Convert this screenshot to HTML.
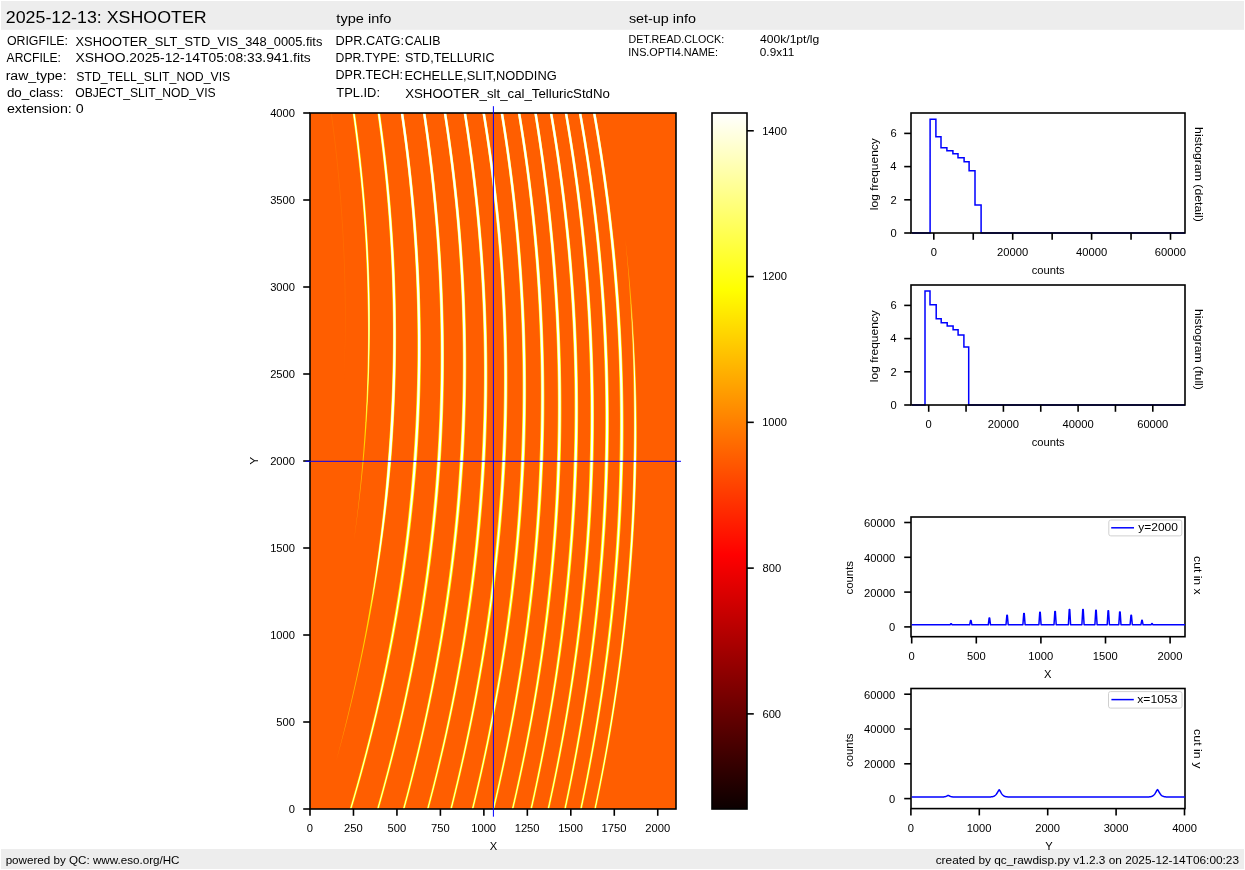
<!DOCTYPE html>
<html><head><meta charset="utf-8"><style>
html,body{margin:0;padding:0;background:#fff;width:1245px;height:870px;overflow:hidden}
svg{display:block}
text{font-family:"Liberation Sans",sans-serif;fill:#000}
svg{will-change:transform}
</style></head><body>
<svg width="1245" height="870" viewBox="0 0 1245 870">
<rect x="1" y="1" width="1243" height="28.8" fill="#ededed"/>
<rect x="1" y="849" width="1243" height="20" fill="#ededed"/>
<text x="5.80" y="23.00" font-size="17.3" textLength="200.82" lengthAdjust="spacingAndGlyphs">2025-12-13: XSHOOTER</text>
<text x="336.38" y="22.80" font-size="12.5" textLength="55.03" lengthAdjust="spacingAndGlyphs">type info</text>
<text x="628.90" y="22.70" font-size="12.5" textLength="67.10" lengthAdjust="spacingAndGlyphs">set-up info</text>
<text x="6.91" y="44.75" font-size="12.3" textLength="61.11" lengthAdjust="spacingAndGlyphs">ORIGFILE:</text>
<text x="6.58" y="61.70" font-size="12.3" textLength="54.33" lengthAdjust="spacingAndGlyphs">ARCFILE:</text>
<text x="5.67" y="79.90" font-size="12.3" textLength="60.92" lengthAdjust="spacingAndGlyphs">raw_type:</text>
<text x="6.94" y="97.30" font-size="12.3" textLength="56.48" lengthAdjust="spacingAndGlyphs">do_class:</text>
<text x="6.90" y="113.30" font-size="12.3" textLength="76.76" lengthAdjust="spacingAndGlyphs">extension: 0</text>
<text x="75.51" y="45.70" font-size="12.3" textLength="246.85" lengthAdjust="spacingAndGlyphs">XSHOOTER_SLT_STD_VIS_348_0005.fits</text>
<text x="75.49" y="61.70" font-size="12.3" textLength="235.31" lengthAdjust="spacingAndGlyphs">XSHOO.2025-12-14T05:08:33.941.fits</text>
<text x="76.24" y="80.50" font-size="12.3" textLength="154.02" lengthAdjust="spacingAndGlyphs">STD_TELL_SLIT_NOD_VIS</text>
<text x="75.22" y="96.90" font-size="12.3" textLength="140.43" lengthAdjust="spacingAndGlyphs">OBJECT_SLIT_NOD_VIS</text>
<text x="335.57" y="44.80" font-size="12.3" textLength="68.48" lengthAdjust="spacingAndGlyphs">DPR.CATG:</text>
<text x="404.87" y="44.80" font-size="12.3" textLength="35.68" lengthAdjust="spacingAndGlyphs">CALIB</text>
<text x="335.60" y="61.60" font-size="12.3" textLength="64.42" lengthAdjust="spacingAndGlyphs">DPR.TYPE:</text>
<text x="404.93" y="61.90" font-size="12.3" textLength="89.65" lengthAdjust="spacingAndGlyphs">STD,TELLURIC</text>
<text x="335.57" y="79.30" font-size="12.3" textLength="67.47" lengthAdjust="spacingAndGlyphs">DPR.TECH:</text>
<text x="404.45" y="79.60" font-size="12.3" textLength="152.30" lengthAdjust="spacingAndGlyphs">ECHELLE,SLIT,NODDING</text>
<text x="336.31" y="96.60" font-size="12.3" textLength="43.67" lengthAdjust="spacingAndGlyphs">TPL.ID:</text>
<text x="405.20" y="97.50" font-size="12.3" textLength="204.75" lengthAdjust="spacingAndGlyphs">XSHOOTER_slt_cal_TelluricStdNo</text>
<text x="628.43" y="42.90" font-size="10.0" textLength="95.73" lengthAdjust="spacingAndGlyphs">DET.READ.CLOCK:</text>
<text x="760.02" y="42.90" font-size="10.0" textLength="59.26" lengthAdjust="spacingAndGlyphs">400k/1pt/lg</text>
<text x="628.30" y="56.10" font-size="10.0" textLength="89.69" lengthAdjust="spacingAndGlyphs">INS.OPTI4.NAME:</text>
<text x="759.85" y="56.10" font-size="10.0" textLength="34.41" lengthAdjust="spacingAndGlyphs">0.9x11</text>
<text x="5.65" y="863.80" font-size="10.8" textLength="173.89" lengthAdjust="spacingAndGlyphs">powered by QC: www.eso.org/HC</text>
<text x="935.70" y="864.00" font-size="10.8" textLength="303.32" lengthAdjust="spacingAndGlyphs">created by qc_rawdisp.py v1.2.3 on 2025-12-14T06:00:23</text>
<rect x="310.0" y="113.0" width="366.0" height="696.0" fill="#ff5e00"/>
<defs>
<clipPath id="imgclip"><rect x="310" y="113" width="366" height="696"/></clipPath>
<linearGradient id="hot" x1="0" y1="1" x2="0" y2="0"><stop offset="0" stop-color="rgb(11,0,0)"/><stop offset="0.365" stop-color="rgb(255,0,0)"/><stop offset="0.746" stop-color="rgb(255,255,0)"/><stop offset="1" stop-color="rgb(255,255,255)"/></linearGradient>
</defs>
<g clip-path="url(#imgclip)">
<path d="M330.74,113.00 L331.55,119.00 L332.35,125.00 L333.11,131.00 L333.86,137.00 L334.58,143.00 L335.27,149.00 L335.95,155.00 L336.59,161.00 L337.22,167.00 L337.82,173.00 L338.39,179.00 L338.94,185.00 L339.47,191.00 L339.97,197.00 L340.45,203.00 L340.90,209.00 L341.33,215.00 L341.73,221.00 L342.12,227.00 L342.47,233.00 L342.80,239.00 L343.11,245.00 L343.40,251.00 L343.66,257.00 L343.89,263.00 L344.10,269.00 L344.29,275.00 L344.45,281.00 L344.59,287.00 L344.70,293.00 L344.79,299.00 L344.88,305.00 L344.95,311.00 L344.99,317.00 L345.01,323.00 L345.01,329.00 L344.98,335.00 L344.93,341.00 L344.85,347.00 L344.75,353.00 L344.62,359.00 L344.47,365.00 L344.30,371.00 L344.10,377.00 L343.86,383.00 L343.59,389.00 L343.29,395.00 L342.96,401.00 L342.61,407.00 L342.24,413.00 L341.84,419.00 L341.42,425.00 L340.97,431.00 L340.50,437.00 L340.01,443.00 L339.49,449.00 L338.94,455.00 L338.38,461.00 L337.78,467.00 L337.17,473.00 L336.53,479.00 L335.86,485.00 L335.17,491.00 L334.46,497.00 L333.72,503.00 L332.96,509.00 L332.18,515.00 L331.37,521.00 L330.53,527.00 L329.67,533.00 L328.79,539.00 L327.89,545.00 L326.95,551.00 L326.00,557.00 L325.02,563.00 L324.02,569.00 L322.99,575.00 L321.94,581.00 L320.86,587.00 L319.76,593.00 L318.63,599.00 L317.49,605.00 L316.31,611.00 L315.11,617.00 L313.89,623.00 L312.65,629.00 L311.38,635.00 L310.08,641.00 L308.76,647.00 L307.42,653.00 L306.05,659.00 L304.66,665.00 L303.25,671.00 L301.81,677.00 L300.34,683.00 L298.86,689.00 L297.34,695.00 L295.81,701.00 L294.24,707.00 L292.66,713.00 L291.05,719.00 L289.42,725.00 L287.76,731.00 L286.08,737.00 L284.37,743.00 L282.64,749.00 L280.89,755.00 L279.11,761.00 L277.30,767.00 L275.48,773.00 L273.62,779.00 L271.75,785.00 L269.85,791.00 L267.92,797.00 L265.97,803.00 L264.00,809.00 L264.00,809.00 L265.97,803.00 L267.92,797.00 L269.85,791.00 L271.75,785.00 L273.62,779.00 L275.48,773.00 L277.30,767.00 L279.11,761.00 L280.89,755.00 L282.64,749.00 L284.37,743.00 L286.08,737.00 L287.76,731.00 L289.42,725.00 L291.05,719.00 L292.66,713.00 L294.24,707.00 L295.81,701.00 L297.34,695.00 L298.86,689.00 L300.34,683.00 L301.81,677.00 L303.25,671.00 L304.66,665.00 L306.05,659.00 L307.42,653.00 L308.76,647.00 L310.08,641.00 L311.38,635.00 L312.65,629.00 L313.89,623.00 L315.11,617.00 L316.31,611.00 L317.49,605.00 L318.63,599.00 L319.76,593.00 L320.86,587.00 L321.94,581.00 L322.99,575.00 L324.02,569.00 L325.02,563.00 L326.00,557.00 L326.95,551.00 L327.89,545.00 L328.79,539.00 L329.67,533.00 L330.53,527.00 L331.37,521.00 L332.18,515.00 L332.96,509.00 L333.72,503.00 L334.46,497.00 L335.17,491.00 L335.86,485.00 L336.53,479.00 L337.17,473.00 L337.78,467.00 L338.38,461.00 L338.94,455.00 L339.49,449.00 L340.01,443.00 L340.50,437.00 L340.97,431.00 L341.42,425.00 L341.84,419.00 L342.24,413.00 L342.61,407.00 L342.96,401.00 L343.29,395.00 L343.59,389.00 L343.86,383.00 L344.13,377.00 L344.39,371.00 L344.62,365.00 L344.83,359.00 L345.02,353.00 L345.18,347.00 L345.32,341.00 L345.43,335.00 L345.52,329.00 L345.58,323.00 L345.62,317.00 L345.64,311.00 L345.63,305.00 L345.59,299.00 L345.51,293.00 L345.40,287.00 L345.27,281.00 L345.12,275.00 L344.94,269.00 L344.73,263.00 L344.50,257.00 L344.25,251.00 L343.97,245.00 L343.67,239.00 L343.34,233.00 L342.99,227.00 L342.62,221.00 L342.22,215.00 L341.80,209.00 L341.35,203.00 L340.88,197.00 L340.39,191.00 L339.87,185.00 L339.32,179.00 L338.76,173.00 L338.16,167.00 L337.55,161.00 L336.91,155.00 L336.24,149.00 L335.55,143.00 L334.84,137.00 L334.10,131.00 L333.34,125.00 L332.56,119.00 L331.75,113.00Z" fill="#ff9900" fill-opacity="0.22"/>
<linearGradient id="fade0" gradientUnits="userSpaceOnUse" x1="0" y1="380" x2="0" y2="520"><stop offset="0" stop-color="#ffff00"/><stop offset="1" stop-color="#ff9a00"/></linearGradient>
<path d="M352.59,113.00 L353.44,119.00 L354.25,125.00 L355.04,131.00 L355.81,137.00 L356.56,143.00 L357.28,149.00 L357.98,155.00 L358.65,161.00 L359.30,167.00 L359.93,173.00 L360.53,179.00 L361.11,185.00 L361.67,191.00 L362.20,197.00 L362.71,203.00 L363.19,209.00 L363.65,215.00 L364.09,221.00 L364.50,227.00 L364.89,233.00 L365.25,239.00 L365.59,245.00 L365.91,251.00 L366.20,257.00 L366.47,263.00 L366.72,269.00 L366.94,275.00 L367.14,281.00 L367.31,287.00 L367.46,293.00 L367.59,299.00 L367.71,305.00 L367.81,311.00 L367.89,317.00 L367.94,323.00 L367.97,329.00 L367.98,335.00 L367.96,341.00 L367.92,347.00 L367.85,353.00 L367.76,359.00 L367.65,365.00 L367.51,371.00 L367.35,377.00 L367.16,383.00 L366.95,389.00 L366.72,395.00 L366.46,401.00 L366.18,407.00 L365.87,413.00 L365.54,419.00 L365.18,425.00 L364.80,431.00 L364.40,437.00 L363.97,443.00 L363.52,449.00 L363.05,455.00 L362.55,461.00 L362.05,467.00 L361.52,473.00 L360.97,479.00 L360.39,485.00 L359.79,491.00 L359.17,497.00 L358.52,503.00 L357.85,509.00 L357.16,515.00 L356.44,521.00 L355.70,527.00 L354.94,533.00 L354.15,539.00 L353.31,545.00 L352.43,551.00 L351.53,557.00 L350.61,563.00 L349.67,569.00 L348.70,575.00 L347.70,581.00 L346.69,587.00 L345.64,593.00 L344.58,599.00 L343.49,605.00 L342.38,611.00 L341.24,617.00 L340.08,623.00 L338.90,629.00 L337.69,635.00 L336.46,641.00 L335.21,647.00 L333.93,653.00 L332.63,659.00 L331.30,665.00 L329.95,671.00 L328.58,677.00 L327.18,683.00 L325.76,689.00 L324.32,695.00 L322.85,701.00 L321.36,707.00 L319.84,713.00 L318.30,719.00 L316.74,725.00 L315.15,731.00 L313.54,737.00 L311.90,743.00 L310.25,749.00 L308.56,755.00 L306.86,761.00 L305.13,767.00 L303.37,773.00 L301.60,779.00 L299.79,785.00 L297.97,791.00 L296.12,797.00 L294.25,803.00 L292.35,809.00 L292.35,809.00 L294.25,803.00 L296.12,797.00 L297.97,791.00 L299.79,785.00 L301.60,779.00 L303.37,773.00 L305.13,767.00 L306.86,761.00 L308.56,755.00 L310.25,749.00 L311.90,743.00 L313.54,737.00 L315.15,731.00 L316.74,725.00 L318.30,719.00 L319.84,713.00 L321.36,707.00 L322.85,701.00 L324.32,695.00 L325.76,689.00 L327.18,683.00 L328.58,677.00 L329.95,671.00 L331.30,665.00 L332.63,659.00 L333.93,653.00 L335.21,647.00 L336.46,641.00 L337.69,635.00 L338.90,629.00 L340.08,623.00 L341.24,617.00 L342.38,611.00 L343.49,605.00 L344.58,599.00 L345.64,593.00 L346.69,587.00 L347.70,581.00 L348.70,575.00 L349.67,569.00 L350.61,563.00 L351.53,557.00 L352.43,551.00 L353.31,545.00 L354.16,539.00 L355.03,533.00 L355.87,527.00 L356.69,521.00 L357.48,515.00 L358.25,509.00 L359.00,503.00 L359.72,497.00 L360.42,491.00 L361.09,485.00 L361.74,479.00 L362.37,473.00 L362.97,467.00 L363.55,461.00 L364.09,455.00 L364.60,449.00 L365.09,443.00 L365.56,437.00 L366.00,431.00 L366.42,425.00 L366.82,419.00 L367.19,413.00 L367.53,407.00 L367.86,401.00 L368.16,395.00 L368.44,389.00 L368.70,383.00 L368.93,377.00 L369.14,371.00 L369.33,365.00 L369.49,359.00 L369.63,353.00 L369.74,347.00 L369.83,341.00 L369.90,335.00 L369.94,329.00 L369.96,323.00 L369.95,317.00 L369.93,311.00 L369.87,305.00 L369.79,299.00 L369.67,293.00 L369.53,287.00 L369.36,281.00 L369.17,275.00 L368.95,269.00 L368.71,263.00 L368.45,257.00 L368.17,251.00 L367.85,245.00 L367.52,239.00 L367.16,233.00 L366.78,227.00 L366.38,221.00 L365.95,215.00 L365.49,209.00 L365.02,203.00 L364.52,197.00 L363.99,191.00 L363.44,185.00 L362.87,179.00 L362.28,173.00 L361.66,167.00 L361.02,161.00 L360.35,155.00 L359.66,149.00 L358.94,143.00 L358.21,137.00 L357.45,131.00 L356.66,125.00 L355.85,119.00 L355.02,113.00Z" fill="url(#fade0)"/>
<path d="M353.15,113.00 L353.99,119.00 L354.80,125.00 L355.59,131.00 L356.36,137.00 L357.11,143.00 L357.83,149.00 L358.52,155.00 L359.19,161.00 L359.84,167.00 L360.47,173.00 L361.07,179.00 L361.64,185.00 L362.20,191.00 L362.73,197.00 L363.23,203.00 L363.72,209.00 L364.17,215.00 L364.61,221.00 L365.02,227.00 L365.41,233.00 L365.77,239.00 L366.11,245.00 L366.42,251.00 L366.72,257.00 L366.98,263.00 L367.23,269.00 L367.45,275.00 L367.64,281.00 L367.82,287.00 L367.97,293.00 L368.09,299.00 L368.22,305.00 L368.32,311.00 L368.40,317.00 L368.45,323.00 L368.49,329.00 L368.49,335.00 L368.48,341.00 L368.44,347.00 L368.38,353.00 L368.29,359.00 L368.18,365.00 L368.04,371.00 L367.89,377.00 L367.70,383.00 L367.50,389.00 L367.27,395.00 L367.02,401.00 L366.74,407.00 L366.44,413.00 L366.12,419.00 L365.78,425.00 L365.40,431.00 L364.98,437.00 L364.53,443.00 L364.06,449.00 L363.57,455.00 L363.05,461.00 L362.51,467.00 L361.94,473.00 L361.35,479.00 L360.74,485.00 L360.10,491.00 L359.44,497.00 L358.76,503.00 L358.05,509.00 L357.32,515.00 L356.56,521.00 L355.79,527.00 L354.98,533.00 L354.16,539.00 L353.31,545.00 L352.43,551.00 L351.53,557.00 L350.61,563.00 L349.67,569.00 L348.70,575.00 L347.70,581.00 L346.69,587.00 L345.64,593.00 L344.58,599.00 L343.49,605.00 L342.38,611.00 L341.24,617.00 L340.08,623.00 L338.90,629.00 L337.69,635.00 L336.46,641.00 L335.21,647.00 L333.93,653.00 L332.63,659.00 L331.30,665.00 L329.95,671.00 L328.58,677.00 L327.18,683.00 L325.76,689.00 L324.32,695.00 L322.85,701.00 L321.36,707.00 L319.84,713.00 L318.30,719.00 L316.74,725.00 L315.15,731.00 L313.54,737.00 L311.90,743.00 L310.25,749.00 L308.56,755.00 L306.86,761.00 L305.13,767.00 L303.37,773.00 L301.60,779.00 L299.79,785.00 L297.97,791.00 L296.12,797.00 L294.25,803.00 L292.35,809.00 L292.35,809.00 L294.25,803.00 L296.12,797.00 L297.97,791.00 L299.79,785.00 L301.60,779.00 L303.37,773.00 L305.13,767.00 L306.86,761.00 L308.56,755.00 L310.25,749.00 L311.90,743.00 L313.54,737.00 L315.15,731.00 L316.74,725.00 L318.30,719.00 L319.84,713.00 L321.36,707.00 L322.85,701.00 L324.32,695.00 L325.76,689.00 L327.18,683.00 L328.58,677.00 L329.95,671.00 L331.30,665.00 L332.63,659.00 L333.93,653.00 L335.21,647.00 L336.46,641.00 L337.69,635.00 L338.90,629.00 L340.08,623.00 L341.24,617.00 L342.38,611.00 L343.49,605.00 L344.58,599.00 L345.64,593.00 L346.69,587.00 L347.70,581.00 L348.70,575.00 L349.67,569.00 L350.61,563.00 L351.53,557.00 L352.43,551.00 L353.31,545.00 L354.16,539.00 L354.98,533.00 L355.79,527.00 L356.56,521.00 L357.32,515.00 L358.05,509.00 L358.76,503.00 L359.44,497.00 L360.10,491.00 L360.74,485.00 L361.35,479.00 L361.94,473.00 L362.51,467.00 L363.05,461.00 L363.57,455.00 L364.06,449.00 L364.53,443.00 L364.98,437.00 L365.40,431.00 L365.83,425.00 L366.23,419.00 L366.61,413.00 L366.97,407.00 L367.31,401.00 L367.61,395.00 L367.90,389.00 L368.16,383.00 L368.39,377.00 L368.60,371.00 L368.79,365.00 L368.96,359.00 L369.10,353.00 L369.22,347.00 L369.31,341.00 L369.38,335.00 L369.42,329.00 L369.45,323.00 L369.44,317.00 L369.42,311.00 L369.37,305.00 L369.29,299.00 L369.17,293.00 L369.03,287.00 L368.86,281.00 L368.66,275.00 L368.45,269.00 L368.20,263.00 L367.94,257.00 L367.65,251.00 L367.34,245.00 L367.00,239.00 L366.64,233.00 L366.26,227.00 L365.85,221.00 L365.42,215.00 L364.97,209.00 L364.49,203.00 L363.99,197.00 L363.46,191.00 L362.91,185.00 L362.34,179.00 L361.74,173.00 L361.12,167.00 L360.48,161.00 L359.81,155.00 L359.11,149.00 L358.40,143.00 L357.66,137.00 L356.90,131.00 L356.11,125.00 L355.30,119.00 L354.46,113.00Z" fill="#ffffff"/>
<linearGradient id="fade1" gradientUnits="userSpaceOnUse" x1="0" y1="560" x2="0" y2="740"><stop offset="0" stop-color="#ffff00"/><stop offset="1" stop-color="#ff9a00"/></linearGradient>
<path d="M377.44,113.00 L378.27,119.00 L379.07,125.00 L379.85,131.00 L380.62,137.00 L381.35,143.00 L382.07,149.00 L382.76,155.00 L383.43,161.00 L384.07,167.00 L384.70,173.00 L385.30,179.00 L385.88,185.00 L386.43,191.00 L386.96,197.00 L387.47,203.00 L387.96,209.00 L388.43,215.00 L388.87,221.00 L389.28,227.00 L389.68,233.00 L390.05,239.00 L390.40,245.00 L390.73,251.00 L391.04,257.00 L391.32,263.00 L391.58,269.00 L391.82,275.00 L392.03,281.00 L392.23,287.00 L392.39,293.00 L392.54,299.00 L392.66,305.00 L392.76,311.00 L392.84,317.00 L392.90,323.00 L392.93,329.00 L392.93,335.00 L392.92,341.00 L392.88,347.00 L392.82,353.00 L392.74,359.00 L392.63,365.00 L392.50,371.00 L392.35,377.00 L392.17,383.00 L391.97,389.00 L391.75,395.00 L391.50,401.00 L391.23,407.00 L390.94,413.00 L390.62,419.00 L390.29,425.00 L389.92,431.00 L389.54,437.00 L389.13,443.00 L388.70,449.00 L388.25,455.00 L387.77,461.00 L387.31,467.00 L386.83,473.00 L386.32,479.00 L385.79,485.00 L385.24,491.00 L384.67,497.00 L384.07,503.00 L383.45,509.00 L382.80,515.00 L382.14,521.00 L381.44,527.00 L380.73,533.00 L379.99,539.00 L379.23,545.00 L378.45,551.00 L377.64,557.00 L376.81,563.00 L375.96,569.00 L375.09,575.00 L374.19,581.00 L373.27,587.00 L372.33,593.00 L371.37,599.00 L370.38,605.00 L369.36,611.00 L368.33,617.00 L367.27,623.00 L366.19,629.00 L365.08,635.00 L363.94,641.00 L362.77,647.00 L361.56,653.00 L360.34,659.00 L359.08,665.00 L357.81,671.00 L356.51,677.00 L355.19,683.00 L353.85,689.00 L352.48,695.00 L351.09,701.00 L349.68,707.00 L348.24,713.00 L346.78,719.00 L345.32,725.00 L343.85,731.00 L342.36,737.00 L340.84,743.00 L339.30,749.00 L337.74,755.00 L336.14,761.00 L334.47,767.00 L332.78,773.00 L331.07,779.00 L329.33,785.00 L327.57,791.00 L325.79,797.00 L323.98,803.00 L322.15,809.00 L322.15,809.00 L323.98,803.00 L325.79,797.00 L327.57,791.00 L329.33,785.00 L331.07,779.00 L332.78,773.00 L334.47,767.00 L336.14,761.00 L337.83,755.00 L339.50,749.00 L341.15,743.00 L342.77,737.00 L344.38,731.00 L345.95,725.00 L347.50,719.00 L348.99,713.00 L350.46,707.00 L351.91,701.00 L353.33,695.00 L354.73,689.00 L356.10,683.00 L357.45,677.00 L358.78,671.00 L360.08,665.00 L361.36,659.00 L362.62,653.00 L363.85,647.00 L365.06,641.00 L366.27,635.00 L367.46,629.00 L368.62,623.00 L369.77,617.00 L370.89,611.00 L371.98,605.00 L373.05,599.00 L374.10,593.00 L375.13,587.00 L376.13,581.00 L377.11,575.00 L378.06,569.00 L378.99,563.00 L379.90,557.00 L380.78,551.00 L381.64,545.00 L382.47,539.00 L383.28,533.00 L384.06,527.00 L384.83,521.00 L385.57,515.00 L386.28,509.00 L386.98,503.00 L387.65,497.00 L388.29,491.00 L388.92,485.00 L389.52,479.00 L390.09,473.00 L390.65,467.00 L391.18,461.00 L391.64,455.00 L392.09,449.00 L392.51,443.00 L392.90,437.00 L393.27,431.00 L393.62,425.00 L393.95,419.00 L394.25,413.00 L394.53,407.00 L394.79,401.00 L395.02,395.00 L395.23,389.00 L395.42,383.00 L395.59,377.00 L395.73,371.00 L395.85,365.00 L395.94,359.00 L396.02,353.00 L396.07,347.00 L396.09,341.00 L396.10,335.00 L396.08,329.00 L396.03,323.00 L395.97,317.00 L395.88,311.00 L395.77,305.00 L395.63,299.00 L395.48,293.00 L395.30,287.00 L395.09,281.00 L394.87,275.00 L394.62,269.00 L394.35,263.00 L394.05,257.00 L393.73,251.00 L393.39,245.00 L393.03,239.00 L392.64,233.00 L392.22,227.00 L391.79,221.00 L391.33,215.00 L390.85,209.00 L390.35,203.00 L389.82,197.00 L389.27,191.00 L388.70,185.00 L388.11,179.00 L387.49,173.00 L386.85,167.00 L386.19,161.00 L385.50,155.00 L384.79,149.00 L384.06,143.00 L383.31,137.00 L382.53,131.00 L381.73,125.00 L380.91,119.00 L380.06,113.00Z" fill="url(#fade1)"/>
<path d="M377.89,113.00 L378.72,119.00 L379.53,125.00 L380.31,131.00 L381.07,137.00 L381.81,143.00 L382.52,149.00 L383.21,155.00 L383.88,161.00 L384.53,167.00 L385.15,173.00 L385.75,179.00 L386.33,185.00 L386.88,191.00 L387.42,197.00 L387.93,203.00 L388.41,209.00 L388.88,215.00 L389.32,221.00 L389.74,227.00 L390.13,233.00 L390.50,239.00 L390.85,245.00 L391.18,251.00 L391.49,257.00 L391.77,263.00 L392.04,269.00 L392.27,275.00 L392.49,281.00 L392.68,287.00 L392.85,293.00 L393.00,299.00 L393.13,305.00 L393.23,311.00 L393.31,317.00 L393.36,323.00 L393.39,329.00 L393.40,335.00 L393.39,341.00 L393.35,347.00 L393.29,353.00 L393.21,359.00 L393.11,365.00 L392.98,371.00 L392.83,377.00 L392.65,383.00 L392.45,389.00 L392.23,395.00 L391.99,401.00 L391.72,407.00 L391.43,413.00 L391.11,419.00 L390.78,425.00 L390.42,431.00 L390.03,437.00 L389.63,443.00 L389.20,449.00 L388.75,455.00 L388.27,461.00 L387.81,467.00 L387.33,473.00 L386.82,479.00 L386.30,485.00 L385.74,491.00 L385.17,497.00 L384.57,503.00 L383.95,509.00 L383.31,515.00 L382.64,521.00 L381.95,527.00 L381.23,533.00 L380.50,539.00 L379.74,545.00 L378.95,551.00 L378.14,557.00 L377.33,563.00 L376.51,569.00 L375.67,575.00 L374.81,581.00 L373.92,587.00 L373.01,593.00 L372.08,599.00 L371.12,605.00 L370.12,611.00 L369.05,617.00 L367.95,623.00 L366.82,629.00 L365.67,635.00 L364.50,641.00 L363.31,647.00 L362.09,653.00 L360.85,659.00 L359.58,665.00 L358.29,671.00 L356.98,677.00 L355.65,683.00 L354.29,689.00 L352.90,695.00 L351.50,701.00 L350.07,707.00 L348.62,713.00 L347.14,719.00 L345.64,725.00 L344.11,731.00 L342.57,737.00 L340.99,743.00 L339.40,749.00 L337.78,755.00 L336.14,761.00 L334.47,767.00 L332.78,773.00 L331.07,779.00 L329.33,785.00 L327.57,791.00 L325.79,797.00 L323.98,803.00 L322.15,809.00 L322.15,809.00 L323.98,803.00 L325.79,797.00 L327.57,791.00 L329.33,785.00 L331.07,779.00 L332.78,773.00 L334.47,767.00 L336.14,761.00 L337.78,755.00 L339.40,749.00 L340.99,743.00 L342.57,737.00 L344.11,731.00 L345.64,725.00 L347.14,719.00 L348.62,713.00 L350.07,707.00 L351.50,701.00 L352.90,695.00 L354.29,689.00 L355.65,683.00 L356.98,677.00 L358.29,671.00 L359.58,665.00 L360.85,659.00 L362.09,653.00 L363.31,647.00 L364.50,641.00 L365.67,635.00 L366.82,629.00 L367.95,623.00 L369.05,617.00 L370.12,611.00 L371.24,605.00 L372.34,599.00 L373.42,593.00 L374.48,587.00 L375.51,581.00 L376.52,575.00 L377.51,569.00 L378.47,563.00 L379.39,557.00 L380.27,551.00 L381.13,545.00 L381.96,539.00 L382.77,533.00 L383.56,527.00 L384.32,521.00 L385.06,515.00 L385.78,509.00 L386.47,503.00 L387.14,497.00 L387.79,491.00 L388.41,485.00 L389.02,479.00 L389.59,473.00 L390.15,467.00 L390.68,461.00 L391.14,455.00 L391.59,449.00 L392.01,443.00 L392.41,437.00 L392.78,431.00 L393.13,425.00 L393.46,419.00 L393.76,413.00 L394.04,407.00 L394.30,401.00 L394.54,395.00 L394.75,389.00 L394.94,383.00 L395.11,377.00 L395.25,371.00 L395.37,365.00 L395.47,359.00 L395.54,353.00 L395.59,347.00 L395.62,341.00 L395.63,335.00 L395.61,329.00 L395.57,323.00 L395.50,317.00 L395.42,311.00 L395.31,305.00 L395.17,299.00 L395.02,293.00 L394.84,287.00 L394.64,281.00 L394.41,275.00 L394.16,269.00 L393.89,263.00 L393.60,257.00 L393.28,251.00 L392.94,245.00 L392.57,239.00 L392.19,233.00 L391.77,227.00 L391.34,221.00 L390.88,215.00 L390.40,209.00 L389.90,203.00 L389.37,197.00 L388.82,191.00 L388.25,185.00 L387.65,179.00 L387.04,173.00 L386.40,167.00 L385.73,161.00 L385.05,155.00 L384.34,149.00 L383.61,143.00 L382.85,137.00 L382.08,131.00 L381.28,125.00 L380.45,119.00 L379.61,113.00Z" fill="#ffffff"/>
<path d="M400.67,113.00 L401.53,119.00 L402.36,125.00 L403.18,131.00 L403.97,137.00 L404.74,143.00 L405.48,149.00 L406.21,155.00 L406.91,161.00 L407.59,167.00 L408.24,173.00 L408.88,179.00 L409.49,185.00 L410.08,191.00 L410.64,197.00 L411.19,203.00 L411.71,209.00 L412.21,215.00 L412.68,221.00 L413.14,227.00 L413.57,233.00 L413.97,239.00 L414.36,245.00 L414.72,251.00 L415.06,257.00 L415.38,263.00 L415.68,269.00 L415.96,275.00 L416.21,281.00 L416.44,287.00 L416.64,293.00 L416.83,299.00 L416.99,305.00 L417.13,311.00 L417.24,317.00 L417.33,323.00 L417.40,329.00 L417.45,335.00 L417.47,341.00 L417.48,347.00 L417.45,353.00 L417.41,359.00 L417.34,365.00 L417.25,371.00 L417.14,377.00 L417.00,383.00 L416.85,389.00 L416.66,395.00 L416.46,401.00 L416.23,407.00 L415.98,413.00 L415.71,419.00 L415.41,425.00 L415.09,431.00 L414.75,437.00 L414.39,443.00 L414.00,449.00 L413.59,455.00 L413.15,461.00 L412.72,467.00 L412.26,473.00 L411.78,479.00 L411.28,485.00 L410.75,491.00 L410.20,497.00 L409.63,503.00 L409.04,509.00 L408.42,515.00 L407.78,521.00 L407.11,527.00 L406.43,533.00 L405.72,539.00 L404.98,545.00 L404.23,551.00 L403.45,557.00 L402.64,563.00 L401.82,569.00 L400.97,575.00 L400.09,581.00 L399.20,587.00 L398.28,593.00 L397.34,599.00 L396.37,605.00 L395.39,611.00 L394.38,617.00 L393.34,623.00 L392.29,629.00 L391.21,635.00 L390.11,641.00 L388.98,647.00 L387.83,653.00 L386.66,659.00 L385.46,665.00 L384.25,671.00 L383.00,677.00 L381.74,683.00 L380.45,689.00 L379.14,695.00 L377.80,701.00 L376.44,707.00 L375.05,713.00 L373.64,719.00 L372.21,725.00 L370.75,731.00 L369.27,737.00 L367.76,743.00 L366.24,749.00 L364.68,755.00 L363.11,761.00 L361.51,767.00 L359.89,773.00 L358.24,779.00 L356.58,785.00 L354.88,791.00 L353.17,797.00 L351.43,803.00 L349.67,809.00 L351.65,809.00 L353.44,803.00 L355.20,797.00 L356.95,791.00 L358.66,785.00 L360.36,779.00 L362.03,773.00 L363.68,767.00 L365.30,761.00 L366.90,755.00 L368.48,749.00 L370.04,743.00 L371.57,737.00 L373.07,731.00 L374.56,725.00 L376.02,719.00 L377.45,713.00 L378.87,707.00 L380.26,701.00 L381.63,695.00 L382.97,689.00 L384.30,683.00 L385.60,677.00 L386.87,671.00 L388.13,665.00 L389.36,659.00 L390.57,653.00 L391.75,647.00 L392.91,641.00 L394.05,635.00 L395.16,629.00 L396.25,623.00 L397.32,617.00 L398.36,611.00 L399.38,605.00 L400.38,599.00 L401.35,593.00 L402.30,587.00 L403.22,581.00 L404.13,575.00 L405.00,569.00 L405.86,563.00 L406.69,557.00 L407.50,551.00 L408.29,545.00 L409.05,539.00 L409.79,533.00 L410.50,527.00 L411.20,521.00 L411.87,515.00 L412.51,509.00 L413.14,503.00 L413.74,497.00 L414.32,491.00 L414.87,485.00 L415.40,479.00 L415.91,473.00 L416.40,467.00 L416.86,461.00 L417.28,455.00 L417.67,449.00 L418.04,443.00 L418.39,437.00 L418.71,431.00 L419.01,425.00 L419.29,419.00 L419.55,413.00 L419.78,407.00 L419.99,401.00 L420.18,395.00 L420.34,389.00 L420.48,383.00 L420.60,377.00 L420.70,371.00 L420.77,365.00 L420.82,359.00 L420.85,353.00 L420.85,347.00 L420.83,341.00 L420.79,335.00 L420.73,329.00 L420.64,323.00 L420.53,317.00 L420.40,311.00 L420.25,305.00 L420.07,299.00 L419.87,293.00 L419.64,287.00 L419.40,281.00 L419.13,275.00 L418.84,269.00 L418.53,263.00 L418.19,257.00 L417.83,251.00 L417.45,245.00 L417.04,239.00 L416.61,233.00 L416.16,227.00 L415.69,221.00 L415.19,215.00 L414.67,209.00 L414.13,203.00 L413.56,197.00 L412.98,191.00 L412.37,185.00 L411.73,179.00 L411.08,173.00 L410.40,167.00 L409.70,161.00 L408.98,155.00 L408.23,149.00 L407.47,143.00 L406.68,137.00 L405.87,131.00 L405.03,125.00 L404.17,119.00 L403.30,113.00Z" fill="#ffff00"/>
<path d="M400.77,113.00 L401.64,119.00 L402.49,125.00 L403.32,131.00 L404.12,137.00 L404.90,143.00 L405.66,149.00 L406.40,155.00 L407.11,161.00 L407.80,167.00 L408.47,173.00 L409.12,179.00 L409.74,185.00 L410.34,191.00 L410.92,197.00 L411.48,203.00 L412.01,209.00 L412.52,215.00 L413.01,221.00 L413.48,227.00 L413.92,233.00 L414.34,239.00 L414.74,245.00 L415.11,251.00 L415.47,257.00 L415.80,263.00 L416.10,269.00 L416.39,275.00 L416.65,281.00 L416.89,287.00 L417.11,293.00 L417.30,299.00 L417.47,305.00 L417.62,311.00 L417.75,317.00 L417.85,323.00 L417.93,329.00 L417.99,335.00 L418.02,341.00 L418.03,347.00 L418.02,353.00 L417.99,359.00 L417.93,365.00 L417.85,371.00 L417.75,377.00 L417.62,383.00 L417.47,389.00 L417.30,395.00 L417.11,401.00 L416.89,407.00 L416.65,413.00 L416.39,419.00 L416.10,425.00 L415.79,431.00 L415.46,437.00 L415.11,443.00 L414.73,449.00 L414.33,455.00 L413.90,461.00 L413.48,467.00 L413.03,473.00 L412.56,479.00 L412.07,485.00 L411.55,491.00 L411.01,497.00 L410.45,503.00 L409.86,509.00 L409.25,515.00 L408.62,521.00 L407.96,527.00 L407.29,533.00 L406.58,539.00 L405.86,545.00 L405.11,551.00 L404.34,557.00 L403.55,563.00 L402.73,569.00 L401.89,575.00 L401.03,581.00 L400.14,587.00 L399.23,593.00 L398.30,599.00 L397.32,605.00 L396.32,611.00 L395.30,617.00 L394.25,623.00 L393.18,629.00 L392.09,635.00 L390.97,641.00 L389.83,647.00 L388.67,653.00 L387.48,659.00 L386.27,665.00 L385.03,671.00 L383.78,677.00 L382.50,683.00 L381.19,689.00 L379.87,695.00 L378.52,701.00 L377.15,707.00 L375.76,713.00 L374.35,719.00 L372.91,725.00 L371.45,731.00 L369.97,737.00 L368.46,743.00 L366.94,749.00 L365.38,755.00 L363.80,761.00 L362.20,767.00 L360.58,773.00 L358.93,779.00 L357.26,785.00 L355.57,791.00 L353.85,797.00 L352.11,803.00 L350.34,809.00 L350.97,809.00 L352.76,803.00 L354.52,797.00 L356.26,791.00 L357.98,785.00 L359.67,779.00 L361.34,773.00 L362.99,767.00 L364.61,761.00 L366.21,755.00 L367.78,749.00 L369.33,743.00 L370.86,737.00 L372.37,731.00 L373.85,725.00 L375.31,719.00 L376.74,713.00 L378.15,707.00 L379.54,701.00 L380.90,695.00 L382.23,689.00 L383.54,683.00 L384.82,677.00 L386.09,671.00 L387.32,665.00 L388.54,659.00 L389.73,653.00 L390.90,647.00 L392.05,641.00 L393.17,635.00 L394.27,629.00 L395.34,623.00 L396.40,617.00 L397.43,611.00 L398.43,605.00 L399.42,599.00 L400.40,593.00 L401.36,587.00 L402.29,581.00 L403.20,575.00 L404.09,569.00 L404.95,563.00 L405.79,557.00 L406.61,551.00 L407.41,545.00 L408.18,539.00 L408.93,533.00 L409.65,527.00 L410.36,521.00 L411.03,515.00 L411.69,509.00 L412.32,503.00 L412.93,497.00 L413.52,491.00 L414.08,485.00 L414.63,479.00 L415.14,473.00 L415.64,467.00 L416.11,461.00 L416.54,455.00 L416.94,449.00 L417.32,443.00 L417.68,437.00 L418.01,431.00 L418.32,425.00 L418.61,419.00 L418.88,413.00 L419.12,407.00 L419.34,401.00 L419.54,395.00 L419.71,389.00 L419.87,383.00 L420.00,377.00 L420.10,371.00 L420.18,365.00 L420.24,359.00 L420.28,353.00 L420.30,347.00 L420.29,341.00 L420.26,335.00 L420.20,329.00 L420.13,323.00 L420.03,317.00 L419.91,311.00 L419.76,305.00 L419.59,299.00 L419.40,293.00 L419.19,287.00 L418.96,281.00 L418.70,275.00 L418.42,269.00 L418.11,263.00 L417.79,257.00 L417.44,251.00 L417.07,245.00 L416.67,239.00 L416.26,233.00 L415.82,227.00 L415.36,221.00 L414.87,215.00 L414.37,209.00 L413.84,203.00 L413.28,197.00 L412.71,191.00 L412.11,185.00 L411.49,179.00 L410.85,173.00 L410.19,167.00 L409.50,161.00 L408.79,155.00 L408.06,149.00 L407.30,143.00 L406.53,137.00 L405.73,131.00 L404.91,125.00 L404.06,119.00 L403.19,113.00Z" fill="#ffffff"/>
<path d="M422.85,113.00 L423.73,119.00 L424.58,125.00 L425.40,131.00 L426.21,137.00 L426.99,143.00 L427.75,149.00 L428.49,155.00 L429.21,161.00 L429.91,167.00 L430.58,173.00 L431.24,179.00 L431.87,185.00 L432.48,191.00 L433.06,197.00 L433.63,203.00 L434.17,209.00 L434.69,215.00 L435.19,221.00 L435.67,227.00 L436.12,233.00 L436.55,239.00 L436.97,245.00 L437.35,251.00 L437.72,257.00 L438.07,263.00 L438.39,269.00 L438.70,275.00 L438.98,281.00 L439.24,287.00 L439.47,293.00 L439.69,299.00 L439.88,305.00 L440.05,311.00 L440.20,317.00 L440.32,323.00 L440.42,329.00 L440.50,335.00 L440.56,341.00 L440.60,347.00 L440.61,353.00 L440.60,359.00 L440.57,365.00 L440.52,371.00 L440.44,377.00 L440.35,383.00 L440.23,389.00 L440.08,395.00 L439.92,401.00 L439.73,407.00 L439.52,413.00 L439.29,419.00 L439.03,425.00 L438.75,431.00 L438.46,437.00 L438.13,443.00 L437.79,449.00 L437.42,455.00 L437.03,461.00 L436.64,467.00 L436.23,473.00 L435.80,479.00 L435.34,485.00 L434.86,491.00 L434.36,497.00 L433.83,503.00 L433.29,509.00 L432.72,515.00 L432.13,521.00 L431.51,527.00 L430.87,533.00 L430.21,539.00 L429.53,545.00 L428.82,551.00 L428.09,557.00 L427.34,563.00 L426.57,569.00 L425.77,575.00 L424.95,581.00 L424.11,587.00 L423.25,593.00 L422.36,599.00 L421.45,605.00 L420.52,611.00 L419.56,617.00 L418.59,623.00 L417.59,629.00 L416.57,635.00 L415.52,641.00 L414.45,647.00 L413.36,653.00 L412.25,659.00 L411.11,665.00 L409.95,671.00 L408.77,677.00 L407.56,683.00 L406.33,689.00 L405.08,695.00 L403.81,701.00 L402.50,707.00 L401.18,713.00 L399.83,719.00 L398.46,725.00 L397.06,731.00 L395.65,737.00 L394.21,743.00 L392.74,749.00 L391.25,755.00 L389.74,761.00 L388.21,767.00 L386.65,773.00 L385.07,779.00 L383.47,785.00 L381.85,791.00 L380.20,797.00 L378.52,803.00 L376.83,809.00 L378.80,809.00 L380.53,803.00 L382.23,797.00 L383.90,791.00 L385.55,785.00 L387.18,779.00 L388.79,773.00 L390.37,767.00 L391.93,761.00 L393.47,755.00 L394.98,749.00 L396.47,743.00 L397.94,737.00 L399.38,731.00 L400.80,725.00 L402.20,719.00 L403.58,713.00 L404.93,707.00 L406.26,701.00 L407.57,695.00 L408.85,689.00 L410.12,683.00 L411.36,677.00 L412.58,671.00 L413.77,665.00 L414.94,659.00 L416.09,653.00 L417.22,647.00 L418.32,641.00 L419.40,635.00 L420.46,629.00 L421.49,623.00 L422.50,617.00 L423.49,611.00 L424.45,605.00 L425.40,599.00 L426.31,593.00 L427.21,587.00 L428.08,581.00 L428.93,575.00 L429.75,569.00 L430.56,563.00 L431.34,557.00 L432.09,551.00 L432.83,545.00 L433.54,539.00 L434.23,533.00 L434.90,527.00 L435.54,521.00 L436.16,515.00 L436.76,509.00 L437.34,503.00 L437.89,497.00 L438.42,491.00 L438.93,485.00 L439.42,479.00 L439.88,473.00 L440.32,467.00 L440.74,461.00 L441.11,455.00 L441.46,449.00 L441.79,443.00 L442.09,437.00 L442.37,431.00 L442.63,425.00 L442.87,419.00 L443.09,413.00 L443.28,407.00 L443.45,401.00 L443.60,395.00 L443.72,389.00 L443.82,383.00 L443.90,377.00 L443.96,371.00 L444.00,365.00 L444.01,359.00 L444.00,353.00 L443.97,347.00 L443.92,341.00 L443.85,335.00 L443.75,329.00 L443.63,323.00 L443.49,317.00 L443.32,311.00 L443.14,305.00 L442.93,299.00 L442.70,293.00 L442.44,287.00 L442.17,281.00 L441.87,275.00 L441.55,269.00 L441.21,263.00 L440.85,257.00 L440.46,251.00 L440.05,245.00 L439.62,239.00 L439.17,233.00 L438.69,227.00 L438.19,221.00 L437.67,215.00 L437.13,209.00 L436.57,203.00 L435.98,197.00 L435.38,191.00 L434.75,185.00 L434.09,179.00 L433.42,173.00 L432.72,167.00 L432.01,161.00 L431.27,155.00 L430.51,149.00 L429.72,143.00 L428.92,137.00 L428.09,131.00 L427.25,125.00 L426.38,119.00 L425.48,113.00Z" fill="#ffff00"/>
<path d="M422.96,113.00 L423.84,119.00 L424.70,125.00 L425.54,131.00 L426.36,137.00 L427.16,143.00 L427.93,149.00 L428.68,155.00 L429.42,161.00 L430.12,167.00 L430.81,173.00 L431.48,179.00 L432.12,185.00 L432.74,191.00 L433.34,197.00 L433.92,203.00 L434.47,209.00 L435.01,215.00 L435.52,221.00 L436.01,227.00 L436.48,233.00 L436.92,239.00 L437.34,245.00 L437.75,251.00 L438.13,257.00 L438.48,263.00 L438.82,269.00 L439.13,275.00 L439.42,281.00 L439.69,287.00 L439.94,293.00 L440.16,299.00 L440.36,305.00 L440.54,311.00 L440.70,317.00 L440.83,323.00 L440.95,329.00 L441.04,335.00 L441.11,341.00 L441.15,347.00 L441.18,353.00 L441.18,359.00 L441.16,365.00 L441.12,371.00 L441.05,377.00 L440.96,383.00 L440.85,389.00 L440.72,395.00 L440.57,401.00 L440.39,407.00 L440.19,413.00 L439.97,419.00 L439.72,425.00 L439.45,431.00 L439.16,437.00 L438.85,443.00 L438.52,449.00 L438.16,455.00 L437.78,461.00 L437.40,467.00 L437.00,473.00 L436.57,479.00 L436.13,485.00 L435.66,491.00 L435.16,497.00 L434.65,503.00 L434.11,509.00 L433.55,515.00 L432.97,521.00 L432.36,527.00 L431.73,533.00 L431.08,539.00 L430.41,545.00 L429.71,551.00 L428.99,557.00 L428.25,563.00 L427.48,569.00 L426.69,575.00 L425.88,581.00 L425.05,587.00 L424.20,593.00 L423.32,599.00 L422.40,605.00 L421.45,611.00 L420.48,617.00 L419.49,623.00 L418.48,629.00 L417.44,635.00 L416.38,641.00 L415.30,647.00 L414.19,653.00 L413.06,659.00 L411.91,665.00 L410.74,671.00 L409.54,677.00 L408.32,683.00 L407.08,689.00 L405.81,695.00 L404.52,701.00 L403.22,707.00 L401.89,713.00 L400.54,719.00 L399.17,725.00 L397.77,731.00 L396.35,737.00 L394.91,743.00 L393.44,749.00 L391.95,755.00 L390.44,761.00 L388.90,767.00 L387.34,773.00 L385.76,779.00 L384.16,785.00 L382.53,791.00 L380.88,797.00 L379.20,803.00 L377.50,809.00 L378.13,809.00 L379.85,803.00 L381.54,797.00 L383.22,791.00 L384.87,785.00 L386.50,779.00 L388.10,773.00 L389.68,767.00 L391.24,761.00 L392.77,755.00 L394.28,749.00 L395.77,743.00 L397.24,737.00 L398.68,731.00 L400.10,725.00 L401.49,719.00 L402.87,713.00 L404.22,707.00 L405.54,701.00 L406.84,695.00 L408.11,689.00 L409.36,683.00 L410.58,677.00 L411.79,671.00 L412.97,665.00 L414.12,659.00 L415.26,653.00 L416.37,647.00 L417.46,641.00 L418.52,635.00 L419.57,629.00 L420.58,623.00 L421.58,617.00 L422.55,611.00 L423.51,605.00 L424.44,599.00 L425.36,593.00 L426.27,587.00 L427.15,581.00 L428.00,575.00 L428.84,569.00 L429.65,563.00 L430.44,557.00 L431.21,551.00 L431.95,545.00 L432.67,539.00 L433.37,533.00 L434.05,527.00 L434.70,521.00 L435.33,515.00 L435.94,509.00 L436.52,503.00 L437.09,497.00 L437.63,491.00 L438.14,485.00 L438.64,479.00 L439.11,473.00 L439.56,467.00 L439.99,461.00 L440.37,455.00 L440.73,449.00 L441.07,443.00 L441.38,437.00 L441.67,431.00 L441.94,425.00 L442.19,419.00 L442.42,413.00 L442.62,407.00 L442.80,401.00 L442.96,395.00 L443.09,389.00 L443.21,383.00 L443.30,377.00 L443.37,371.00 L443.41,365.00 L443.44,359.00 L443.44,353.00 L443.42,347.00 L443.38,341.00 L443.31,335.00 L443.22,329.00 L443.11,323.00 L442.98,317.00 L442.83,311.00 L442.65,305.00 L442.45,299.00 L442.23,293.00 L441.99,287.00 L441.73,281.00 L441.44,275.00 L441.13,269.00 L440.80,263.00 L440.45,257.00 L440.07,251.00 L439.67,245.00 L439.26,239.00 L438.81,233.00 L438.35,227.00 L437.87,221.00 L437.36,215.00 L436.83,209.00 L436.28,203.00 L435.70,197.00 L435.11,191.00 L434.49,185.00 L433.85,179.00 L433.19,173.00 L432.51,167.00 L431.80,161.00 L431.08,155.00 L430.33,149.00 L429.56,143.00 L428.77,137.00 L427.95,131.00 L427.12,125.00 L426.26,119.00 L425.38,113.00Z" fill="#ffffff"/>
<path d="M443.66,113.00 L444.58,119.00 L445.48,125.00 L446.35,131.00 L447.20,137.00 L448.03,143.00 L448.83,149.00 L449.61,155.00 L450.37,161.00 L451.11,167.00 L451.82,173.00 L452.51,179.00 L453.18,185.00 L453.83,191.00 L454.45,197.00 L455.05,203.00 L455.63,209.00 L456.19,215.00 L456.72,221.00 L457.23,227.00 L457.72,233.00 L458.18,239.00 L458.63,245.00 L459.05,251.00 L459.45,257.00 L459.83,263.00 L460.18,269.00 L460.51,275.00 L460.82,281.00 L461.11,287.00 L461.38,293.00 L461.62,299.00 L461.84,305.00 L462.04,311.00 L462.21,317.00 L462.37,323.00 L462.50,329.00 L462.60,335.00 L462.69,341.00 L462.75,347.00 L462.79,353.00 L462.81,359.00 L462.81,365.00 L462.78,371.00 L462.73,377.00 L462.66,383.00 L462.57,389.00 L462.46,395.00 L462.32,401.00 L462.16,407.00 L461.98,413.00 L461.77,419.00 L461.55,425.00 L461.30,431.00 L461.03,437.00 L460.73,443.00 L460.42,449.00 L460.08,455.00 L459.72,461.00 L459.36,467.00 L458.98,473.00 L458.58,479.00 L458.15,485.00 L457.71,491.00 L457.24,497.00 L456.75,503.00 L456.23,509.00 L455.70,515.00 L455.14,521.00 L454.56,527.00 L453.96,533.00 L453.34,539.00 L452.69,545.00 L452.02,551.00 L451.34,557.00 L450.62,563.00 L449.89,569.00 L449.14,575.00 L448.36,581.00 L447.56,587.00 L446.74,593.00 L445.90,599.00 L445.03,605.00 L444.15,611.00 L443.24,617.00 L442.32,623.00 L441.37,629.00 L440.40,635.00 L439.40,641.00 L438.39,647.00 L437.35,653.00 L436.29,659.00 L435.21,665.00 L434.11,671.00 L432.99,677.00 L431.84,683.00 L430.67,689.00 L429.48,695.00 L428.27,701.00 L427.04,707.00 L425.78,713.00 L424.50,719.00 L423.20,725.00 L421.87,731.00 L420.53,737.00 L419.16,743.00 L417.77,749.00 L416.36,755.00 L414.93,761.00 L413.48,767.00 L412.00,773.00 L410.51,779.00 L408.99,785.00 L407.45,791.00 L405.89,797.00 L404.30,803.00 L402.70,809.00 L404.67,809.00 L406.30,803.00 L407.91,797.00 L409.50,791.00 L411.06,785.00 L412.61,779.00 L414.13,773.00 L415.63,767.00 L417.11,761.00 L418.57,755.00 L420.01,749.00 L421.42,743.00 L422.81,737.00 L424.19,731.00 L425.54,725.00 L426.86,719.00 L428.17,713.00 L429.46,707.00 L430.72,701.00 L431.96,695.00 L433.19,689.00 L434.39,683.00 L435.57,677.00 L436.73,671.00 L437.87,665.00 L438.98,659.00 L440.07,653.00 L441.15,647.00 L442.20,641.00 L443.22,635.00 L444.23,629.00 L445.21,623.00 L446.18,617.00 L447.12,611.00 L448.04,605.00 L448.93,599.00 L449.80,593.00 L450.65,587.00 L451.48,581.00 L452.29,575.00 L453.07,569.00 L453.83,563.00 L454.57,557.00 L455.29,551.00 L455.99,545.00 L456.66,539.00 L457.32,533.00 L457.95,527.00 L458.56,521.00 L459.14,515.00 L459.71,509.00 L460.25,503.00 L460.77,497.00 L461.27,491.00 L461.74,485.00 L462.20,479.00 L462.63,473.00 L463.04,467.00 L463.43,461.00 L463.77,455.00 L464.09,449.00 L464.39,443.00 L464.66,437.00 L464.91,431.00 L465.15,425.00 L465.35,419.00 L465.54,413.00 L465.71,407.00 L465.85,401.00 L465.97,395.00 L466.07,389.00 L466.14,383.00 L466.20,377.00 L466.23,371.00 L466.24,365.00 L466.22,359.00 L466.19,353.00 L466.13,347.00 L466.05,341.00 L465.95,335.00 L465.82,329.00 L465.67,323.00 L465.50,317.00 L465.31,311.00 L465.10,305.00 L464.86,299.00 L464.60,293.00 L464.32,287.00 L464.02,281.00 L463.69,275.00 L463.34,269.00 L462.97,263.00 L462.57,257.00 L462.16,251.00 L461.72,245.00 L461.25,239.00 L460.77,233.00 L460.26,227.00 L459.73,221.00 L459.17,215.00 L458.60,209.00 L458.00,203.00 L457.38,197.00 L456.73,191.00 L456.06,185.00 L455.37,179.00 L454.66,173.00 L453.93,167.00 L453.17,161.00 L452.39,155.00 L451.59,149.00 L450.76,143.00 L449.91,137.00 L449.04,131.00 L448.15,125.00 L447.23,119.00 L446.29,113.00Z" fill="#ffff00"/>
<path d="M443.76,113.00 L444.69,119.00 L445.60,125.00 L446.49,131.00 L447.35,137.00 L448.19,143.00 L449.01,149.00 L449.80,155.00 L450.58,161.00 L451.32,167.00 L452.05,173.00 L452.76,179.00 L453.44,185.00 L454.10,191.00 L454.73,197.00 L455.35,203.00 L455.94,209.00 L456.50,215.00 L457.05,221.00 L457.57,227.00 L458.07,233.00 L458.55,239.00 L459.01,245.00 L459.44,251.00 L459.85,257.00 L460.24,263.00 L460.60,269.00 L460.95,275.00 L461.27,281.00 L461.56,287.00 L461.84,293.00 L462.09,299.00 L462.32,305.00 L462.53,311.00 L462.72,317.00 L462.88,323.00 L463.02,329.00 L463.14,335.00 L463.23,341.00 L463.31,347.00 L463.36,353.00 L463.39,359.00 L463.39,365.00 L463.38,371.00 L463.34,377.00 L463.28,383.00 L463.20,389.00 L463.09,395.00 L462.97,401.00 L462.82,407.00 L462.64,413.00 L462.45,419.00 L462.23,425.00 L462.00,431.00 L461.74,437.00 L461.45,443.00 L461.15,449.00 L460.82,455.00 L460.47,461.00 L460.12,467.00 L459.75,473.00 L459.36,479.00 L458.94,485.00 L458.50,491.00 L458.04,497.00 L457.56,503.00 L457.06,509.00 L456.53,515.00 L455.98,521.00 L455.41,527.00 L454.82,533.00 L454.20,539.00 L453.57,545.00 L452.91,551.00 L452.23,557.00 L451.53,563.00 L450.80,569.00 L450.06,575.00 L449.29,581.00 L448.50,587.00 L447.69,593.00 L446.85,599.00 L445.98,605.00 L445.08,611.00 L444.16,617.00 L443.22,623.00 L442.26,629.00 L441.27,635.00 L440.26,641.00 L439.23,647.00 L438.18,653.00 L437.11,659.00 L436.01,665.00 L434.90,671.00 L433.76,677.00 L432.60,683.00 L431.42,689.00 L430.21,695.00 L428.99,701.00 L427.75,707.00 L426.49,713.00 L425.21,719.00 L423.90,725.00 L422.58,731.00 L421.23,737.00 L419.86,743.00 L418.47,749.00 L417.06,755.00 L415.62,761.00 L414.17,767.00 L412.69,773.00 L411.19,779.00 L409.67,785.00 L408.13,791.00 L406.57,797.00 L404.98,803.00 L403.37,809.00 L404.00,809.00 L405.62,803.00 L407.23,797.00 L408.82,791.00 L410.38,785.00 L411.92,779.00 L413.44,773.00 L414.94,767.00 L416.42,761.00 L417.88,755.00 L419.31,749.00 L420.72,743.00 L422.11,737.00 L423.48,731.00 L424.83,725.00 L426.16,719.00 L427.46,713.00 L428.74,707.00 L430.00,701.00 L431.24,695.00 L432.45,689.00 L433.63,683.00 L434.80,677.00 L435.94,671.00 L437.07,665.00 L438.17,659.00 L439.24,653.00 L440.30,647.00 L441.34,641.00 L442.35,635.00 L443.34,629.00 L444.31,623.00 L445.26,617.00 L446.18,611.00 L447.09,605.00 L447.97,599.00 L448.85,593.00 L449.71,587.00 L450.55,581.00 L451.37,575.00 L452.16,569.00 L452.93,563.00 L453.68,557.00 L454.41,551.00 L455.11,545.00 L455.80,539.00 L456.46,533.00 L457.10,527.00 L457.71,521.00 L458.31,515.00 L458.88,509.00 L459.43,503.00 L459.96,497.00 L460.47,491.00 L460.96,485.00 L461.42,479.00 L461.86,473.00 L462.28,467.00 L462.67,461.00 L463.03,455.00 L463.36,449.00 L463.67,443.00 L463.95,437.00 L464.22,431.00 L464.46,425.00 L464.68,419.00 L464.87,413.00 L465.05,407.00 L465.20,401.00 L465.33,395.00 L465.44,389.00 L465.53,383.00 L465.59,377.00 L465.63,371.00 L465.65,365.00 L465.65,359.00 L465.62,353.00 L465.57,347.00 L465.50,341.00 L465.41,335.00 L465.30,329.00 L465.16,323.00 L465.00,317.00 L464.82,311.00 L464.61,305.00 L464.39,299.00 L464.14,293.00 L463.87,287.00 L463.57,281.00 L463.26,275.00 L462.92,269.00 L462.56,263.00 L462.17,257.00 L461.77,251.00 L461.34,245.00 L460.89,239.00 L460.41,233.00 L459.92,227.00 L459.40,221.00 L458.86,215.00 L458.29,209.00 L457.71,203.00 L457.10,197.00 L456.46,191.00 L455.81,185.00 L455.13,179.00 L454.43,173.00 L453.71,167.00 L452.97,161.00 L452.20,155.00 L451.41,149.00 L450.60,143.00 L449.76,137.00 L448.90,131.00 L448.02,125.00 L447.12,119.00 L446.19,113.00Z" fill="#ffffff"/>
<path d="M463.59,113.00 L464.52,119.00 L465.42,125.00 L466.31,131.00 L467.17,137.00 L468.02,143.00 L468.84,149.00 L469.64,155.00 L470.41,161.00 L471.17,167.00 L471.90,173.00 L472.62,179.00 L473.31,185.00 L473.98,191.00 L474.62,197.00 L475.25,203.00 L475.85,209.00 L476.43,215.00 L476.99,221.00 L477.53,227.00 L478.05,233.00 L478.54,239.00 L479.02,245.00 L479.47,251.00 L479.90,257.00 L480.31,263.00 L480.70,269.00 L481.06,275.00 L481.41,281.00 L481.73,287.00 L482.03,293.00 L482.31,299.00 L482.56,305.00 L482.80,311.00 L483.01,317.00 L483.20,323.00 L483.37,329.00 L483.52,335.00 L483.64,341.00 L483.74,347.00 L483.82,353.00 L483.88,359.00 L483.92,365.00 L483.94,371.00 L483.93,377.00 L483.90,383.00 L483.85,389.00 L483.78,395.00 L483.68,401.00 L483.57,407.00 L483.43,413.00 L483.27,419.00 L483.08,425.00 L482.88,431.00 L482.65,437.00 L482.40,443.00 L482.13,449.00 L481.84,455.00 L481.53,461.00 L481.21,467.00 L480.88,473.00 L480.52,479.00 L480.14,485.00 L479.74,491.00 L479.32,497.00 L478.87,503.00 L478.40,509.00 L477.91,515.00 L477.40,521.00 L476.87,527.00 L476.31,533.00 L475.73,539.00 L475.13,545.00 L474.51,551.00 L473.87,557.00 L473.20,563.00 L472.51,569.00 L471.80,575.00 L471.07,581.00 L470.31,587.00 L469.53,593.00 L468.73,599.00 L467.92,605.00 L467.07,611.00 L466.21,617.00 L465.33,623.00 L464.42,629.00 L463.49,635.00 L462.54,641.00 L461.56,647.00 L460.57,653.00 L459.55,659.00 L458.51,665.00 L457.45,671.00 L456.36,677.00 L455.25,683.00 L454.12,689.00 L452.97,695.00 L451.80,701.00 L450.60,707.00 L449.37,713.00 L448.13,719.00 L446.86,725.00 L445.57,731.00 L444.26,737.00 L442.93,743.00 L441.57,749.00 L440.19,755.00 L438.79,761.00 L437.37,767.00 L435.92,773.00 L434.45,779.00 L432.96,785.00 L431.45,791.00 L429.91,797.00 L428.36,803.00 L426.78,809.00 L428.74,809.00 L430.35,803.00 L431.93,797.00 L433.50,791.00 L435.04,785.00 L436.55,779.00 L438.05,773.00 L439.52,767.00 L440.97,761.00 L442.40,755.00 L443.80,749.00 L445.18,743.00 L446.54,737.00 L447.88,731.00 L449.20,725.00 L450.49,719.00 L451.76,713.00 L453.01,707.00 L454.24,701.00 L455.45,695.00 L456.64,689.00 L457.80,683.00 L458.94,677.00 L460.06,671.00 L461.16,665.00 L462.23,659.00 L463.29,653.00 L464.32,647.00 L465.33,641.00 L466.31,635.00 L467.28,629.00 L468.22,623.00 L469.14,617.00 L470.04,611.00 L470.92,605.00 L471.77,599.00 L472.60,593.00 L473.40,587.00 L474.19,581.00 L474.95,575.00 L475.69,569.00 L476.41,563.00 L477.10,557.00 L477.78,551.00 L478.43,545.00 L479.06,539.00 L479.66,533.00 L480.25,527.00 L480.81,521.00 L481.35,515.00 L481.87,509.00 L482.37,503.00 L482.84,497.00 L483.30,491.00 L483.73,485.00 L484.14,479.00 L484.52,473.00 L484.89,467.00 L485.23,461.00 L485.53,455.00 L485.80,449.00 L486.06,443.00 L486.29,437.00 L486.50,431.00 L486.68,425.00 L486.85,419.00 L486.99,413.00 L487.11,407.00 L487.21,401.00 L487.29,395.00 L487.35,389.00 L487.38,383.00 L487.39,377.00 L487.38,371.00 L487.35,365.00 L487.29,359.00 L487.22,353.00 L487.12,347.00 L487.00,341.00 L486.86,335.00 L486.69,329.00 L486.51,323.00 L486.30,317.00 L486.07,311.00 L485.82,305.00 L485.55,299.00 L485.25,293.00 L484.94,287.00 L484.60,281.00 L484.24,275.00 L483.86,269.00 L483.45,263.00 L483.03,257.00 L482.58,251.00 L482.11,245.00 L481.61,239.00 L481.10,233.00 L480.56,227.00 L480.00,221.00 L479.42,215.00 L478.82,209.00 L478.19,203.00 L477.55,197.00 L476.88,191.00 L476.19,185.00 L475.48,179.00 L474.74,173.00 L473.99,167.00 L473.21,161.00 L472.41,155.00 L471.59,149.00 L470.75,143.00 L469.89,137.00 L469.00,131.00 L468.10,125.00 L467.17,119.00 L466.22,113.00Z" fill="#ffff00"/>
<path d="M463.69,113.00 L464.63,119.00 L465.55,125.00 L466.45,131.00 L467.33,137.00 L468.18,143.00 L469.02,149.00 L469.83,155.00 L470.62,161.00 L471.39,167.00 L472.13,173.00 L472.86,179.00 L473.56,185.00 L474.24,191.00 L474.90,197.00 L475.54,203.00 L476.16,209.00 L476.75,215.00 L477.32,221.00 L477.87,227.00 L478.40,233.00 L478.91,239.00 L479.40,245.00 L479.86,251.00 L480.30,257.00 L480.72,263.00 L481.12,269.00 L481.49,275.00 L481.85,281.00 L482.18,287.00 L482.49,293.00 L482.78,299.00 L483.05,305.00 L483.29,311.00 L483.51,317.00 L483.71,323.00 L483.89,329.00 L484.05,335.00 L484.19,341.00 L484.30,347.00 L484.39,353.00 L484.46,359.00 L484.51,365.00 L484.53,371.00 L484.54,377.00 L484.52,383.00 L484.48,389.00 L484.42,395.00 L484.33,401.00 L484.22,407.00 L484.10,413.00 L483.95,419.00 L483.77,425.00 L483.58,431.00 L483.36,437.00 L483.12,443.00 L482.86,449.00 L482.58,455.00 L482.28,461.00 L481.97,467.00 L481.65,473.00 L481.30,479.00 L480.93,485.00 L480.54,491.00 L480.12,497.00 L479.68,503.00 L479.22,509.00 L478.74,515.00 L478.24,521.00 L477.72,527.00 L477.17,533.00 L476.60,539.00 L476.01,545.00 L475.40,551.00 L474.76,557.00 L474.10,563.00 L473.42,569.00 L472.72,575.00 L472.00,581.00 L471.25,587.00 L470.48,593.00 L469.69,599.00 L468.86,605.00 L468.01,611.00 L467.13,617.00 L466.23,623.00 L465.31,629.00 L464.36,635.00 L463.40,641.00 L462.41,647.00 L461.40,653.00 L460.36,659.00 L459.31,665.00 L458.23,671.00 L457.13,677.00 L456.01,683.00 L454.86,689.00 L453.70,695.00 L452.51,701.00 L451.31,707.00 L450.08,713.00 L448.84,719.00 L447.57,725.00 L446.27,731.00 L444.96,737.00 L443.62,743.00 L442.26,749.00 L440.88,755.00 L439.48,761.00 L438.05,767.00 L436.61,773.00 L435.14,779.00 L433.64,785.00 L432.13,791.00 L430.59,797.00 L429.03,803.00 L427.45,809.00 L428.07,809.00 L429.68,803.00 L431.26,797.00 L432.82,791.00 L434.35,785.00 L435.87,779.00 L437.36,773.00 L438.83,767.00 L440.28,761.00 L441.70,755.00 L443.11,749.00 L444.49,743.00 L445.85,737.00 L447.18,731.00 L448.49,725.00 L449.79,719.00 L451.06,713.00 L452.30,707.00 L453.53,701.00 L454.72,695.00 L455.89,689.00 L457.04,683.00 L458.17,677.00 L459.28,671.00 L460.36,665.00 L461.42,659.00 L462.46,653.00 L463.48,647.00 L464.47,641.00 L465.44,635.00 L466.39,629.00 L467.32,623.00 L468.22,617.00 L469.11,611.00 L469.97,605.00 L470.81,599.00 L471.65,593.00 L472.46,587.00 L473.26,581.00 L474.03,575.00 L474.78,569.00 L475.50,563.00 L476.21,557.00 L476.89,551.00 L477.55,545.00 L478.19,539.00 L478.81,533.00 L479.40,527.00 L479.97,521.00 L480.52,515.00 L481.05,509.00 L481.56,503.00 L482.04,497.00 L482.50,491.00 L482.94,485.00 L483.36,479.00 L483.76,473.00 L484.13,467.00 L484.48,461.00 L484.79,455.00 L485.07,449.00 L485.34,443.00 L485.58,437.00 L485.80,431.00 L486.00,425.00 L486.17,419.00 L486.32,413.00 L486.46,407.00 L486.57,401.00 L486.65,395.00 L486.72,389.00 L486.76,383.00 L486.78,377.00 L486.78,371.00 L486.76,365.00 L486.72,359.00 L486.65,353.00 L486.56,347.00 L486.46,341.00 L486.32,335.00 L486.17,329.00 L485.99,323.00 L485.80,317.00 L485.58,311.00 L485.34,305.00 L485.07,299.00 L484.79,293.00 L484.48,287.00 L484.16,281.00 L483.81,275.00 L483.43,269.00 L483.04,263.00 L482.62,257.00 L482.19,251.00 L481.73,245.00 L481.25,239.00 L480.74,233.00 L480.22,227.00 L479.67,221.00 L479.10,215.00 L478.51,209.00 L477.90,203.00 L477.27,197.00 L476.61,191.00 L475.94,185.00 L475.24,179.00 L474.52,173.00 L473.77,167.00 L473.01,161.00 L472.22,155.00 L471.42,149.00 L470.59,143.00 L469.74,137.00 L468.86,131.00 L467.97,125.00 L467.05,119.00 L466.12,113.00Z" fill="#ffffff"/>
<path d="M482.37,113.00 L483.34,119.00 L484.29,125.00 L485.22,131.00 L486.12,137.00 L487.00,143.00 L487.86,149.00 L488.69,155.00 L489.50,161.00 L490.29,167.00 L491.06,173.00 L491.80,179.00 L492.53,185.00 L493.23,191.00 L493.91,197.00 L494.56,203.00 L495.19,209.00 L495.80,215.00 L496.39,221.00 L496.96,227.00 L497.50,233.00 L498.02,239.00 L498.52,245.00 L499.00,251.00 L499.46,257.00 L499.89,263.00 L500.30,269.00 L500.69,275.00 L501.06,281.00 L501.41,287.00 L501.73,293.00 L502.03,299.00 L502.31,305.00 L502.57,311.00 L502.81,317.00 L503.02,323.00 L503.21,329.00 L503.38,335.00 L503.53,341.00 L503.65,347.00 L503.76,353.00 L503.84,359.00 L503.90,365.00 L503.93,371.00 L503.95,377.00 L503.94,383.00 L503.92,389.00 L503.87,395.00 L503.79,401.00 L503.70,407.00 L503.59,413.00 L503.45,419.00 L503.29,425.00 L503.11,431.00 L502.91,437.00 L502.68,443.00 L502.44,449.00 L502.17,455.00 L501.88,461.00 L501.59,467.00 L501.28,473.00 L500.95,479.00 L500.60,485.00 L500.23,491.00 L499.83,497.00 L499.42,503.00 L498.98,509.00 L498.52,515.00 L498.04,521.00 L497.53,527.00 L497.01,533.00 L496.47,539.00 L495.90,545.00 L495.31,551.00 L494.70,557.00 L494.07,563.00 L493.42,569.00 L492.74,575.00 L492.05,581.00 L491.33,587.00 L490.59,593.00 L489.84,599.00 L489.06,605.00 L488.26,611.00 L487.44,617.00 L486.60,623.00 L485.74,629.00 L484.85,635.00 L483.95,641.00 L483.02,647.00 L482.08,653.00 L481.11,659.00 L480.12,665.00 L479.11,671.00 L478.08,677.00 L477.03,683.00 L475.96,689.00 L474.86,695.00 L473.75,701.00 L472.61,707.00 L471.45,713.00 L470.27,719.00 L469.06,725.00 L467.84,731.00 L466.60,737.00 L465.33,743.00 L464.04,749.00 L462.74,755.00 L461.41,761.00 L460.06,767.00 L458.69,773.00 L457.30,779.00 L455.89,785.00 L454.46,791.00 L453.01,797.00 L451.54,803.00 L450.04,809.00 L452.00,809.00 L453.52,803.00 L455.02,797.00 L456.50,791.00 L457.96,785.00 L459.40,779.00 L460.81,773.00 L462.21,767.00 L463.58,761.00 L464.94,755.00 L466.27,749.00 L467.58,743.00 L468.88,737.00 L470.15,731.00 L471.40,725.00 L472.62,719.00 L473.83,713.00 L475.02,707.00 L476.19,701.00 L477.34,695.00 L478.46,689.00 L479.57,683.00 L480.66,677.00 L481.72,671.00 L482.77,665.00 L483.79,659.00 L484.79,653.00 L485.78,647.00 L486.74,641.00 L487.68,635.00 L488.59,629.00 L489.49,623.00 L490.37,617.00 L491.22,611.00 L492.05,605.00 L492.87,599.00 L493.65,593.00 L494.42,587.00 L495.17,581.00 L495.89,575.00 L496.59,569.00 L497.27,563.00 L497.93,557.00 L498.57,551.00 L499.19,545.00 L499.79,539.00 L500.36,533.00 L500.92,527.00 L501.45,521.00 L501.96,515.00 L502.45,509.00 L502.91,503.00 L503.36,497.00 L503.79,491.00 L504.19,485.00 L504.57,479.00 L504.93,473.00 L505.27,467.00 L505.58,461.00 L505.86,455.00 L506.11,449.00 L506.33,443.00 L506.54,437.00 L506.73,431.00 L506.89,425.00 L507.03,419.00 L507.15,413.00 L507.25,407.00 L507.32,401.00 L507.38,395.00 L507.41,389.00 L507.42,383.00 L507.41,377.00 L507.38,371.00 L507.32,365.00 L507.25,359.00 L507.15,353.00 L507.03,347.00 L506.89,341.00 L506.72,335.00 L506.54,329.00 L506.33,323.00 L506.10,317.00 L505.85,311.00 L505.57,305.00 L505.28,299.00 L504.96,293.00 L504.62,287.00 L504.26,281.00 L503.87,275.00 L503.46,269.00 L503.04,263.00 L502.58,257.00 L502.11,251.00 L501.61,245.00 L501.09,239.00 L500.55,233.00 L499.99,227.00 L499.40,221.00 L498.79,215.00 L498.16,209.00 L497.51,203.00 L496.83,197.00 L496.13,191.00 L495.41,185.00 L494.67,179.00 L493.90,173.00 L493.11,167.00 L492.30,161.00 L491.47,155.00 L490.62,149.00 L489.74,143.00 L488.84,137.00 L487.91,131.00 L486.97,125.00 L486.00,119.00 L485.01,113.00Z" fill="#ffff00"/>
<path d="M482.48,113.00 L483.46,119.00 L484.42,125.00 L485.36,131.00 L486.27,137.00 L487.16,143.00 L488.03,149.00 L488.88,155.00 L489.71,161.00 L490.51,167.00 L491.29,173.00 L492.05,179.00 L492.78,185.00 L493.49,191.00 L494.18,197.00 L494.85,203.00 L495.50,209.00 L496.12,215.00 L496.72,221.00 L497.30,227.00 L497.86,233.00 L498.39,239.00 L498.90,245.00 L499.39,251.00 L499.86,257.00 L500.30,263.00 L500.73,269.00 L501.13,275.00 L501.50,281.00 L501.86,287.00 L502.19,293.00 L502.51,299.00 L502.80,305.00 L503.06,311.00 L503.31,317.00 L503.53,323.00 L503.74,329.00 L503.91,335.00 L504.07,341.00 L504.21,347.00 L504.32,353.00 L504.41,359.00 L504.48,365.00 L504.53,371.00 L504.56,377.00 L504.56,383.00 L504.54,389.00 L504.50,395.00 L504.44,401.00 L504.36,407.00 L504.25,413.00 L504.13,419.00 L503.98,425.00 L503.81,431.00 L503.62,437.00 L503.40,443.00 L503.17,449.00 L502.91,455.00 L502.63,461.00 L502.35,467.00 L502.05,473.00 L501.73,479.00 L501.39,485.00 L501.02,491.00 L500.64,497.00 L500.23,503.00 L499.80,509.00 L499.35,515.00 L498.88,521.00 L498.38,527.00 L497.87,533.00 L497.33,539.00 L496.77,545.00 L496.19,551.00 L495.59,557.00 L494.97,563.00 L494.33,569.00 L493.66,575.00 L492.98,581.00 L492.27,587.00 L491.54,593.00 L490.79,599.00 L490.00,605.00 L489.19,611.00 L488.36,617.00 L487.50,623.00 L486.62,629.00 L485.73,635.00 L484.81,641.00 L483.87,647.00 L482.91,653.00 L481.92,659.00 L480.92,665.00 L479.90,671.00 L478.85,677.00 L477.78,683.00 L476.70,689.00 L475.59,695.00 L474.46,701.00 L473.32,707.00 L472.16,713.00 L470.97,719.00 L469.77,725.00 L468.54,731.00 L467.29,737.00 L466.03,743.00 L464.74,749.00 L463.43,755.00 L462.10,761.00 L460.75,767.00 L459.38,773.00 L457.99,779.00 L456.57,785.00 L455.14,791.00 L453.68,797.00 L452.21,803.00 L450.71,809.00 L451.33,809.00 L452.85,803.00 L454.35,797.00 L455.82,791.00 L457.28,785.00 L458.71,779.00 L460.13,773.00 L461.52,767.00 L462.89,761.00 L464.25,755.00 L465.58,749.00 L466.89,743.00 L468.18,737.00 L469.45,731.00 L470.69,725.00 L471.92,719.00 L473.13,713.00 L474.31,707.00 L475.47,701.00 L476.61,695.00 L477.72,689.00 L478.82,683.00 L479.89,677.00 L480.94,671.00 L481.97,665.00 L482.98,659.00 L483.97,653.00 L484.93,647.00 L485.88,641.00 L486.80,635.00 L487.71,629.00 L488.59,623.00 L489.45,617.00 L490.29,611.00 L491.11,605.00 L491.91,599.00 L492.71,593.00 L493.48,587.00 L494.24,581.00 L494.97,575.00 L495.68,569.00 L496.37,563.00 L497.04,557.00 L497.69,551.00 L498.32,545.00 L498.92,539.00 L499.50,533.00 L500.07,527.00 L500.61,521.00 L501.13,515.00 L501.63,509.00 L502.10,503.00 L502.56,497.00 L502.99,491.00 L503.40,485.00 L503.79,479.00 L504.16,473.00 L504.51,467.00 L504.83,461.00 L505.12,455.00 L505.38,449.00 L505.61,443.00 L505.83,437.00 L506.03,431.00 L506.20,425.00 L506.35,419.00 L506.48,413.00 L506.59,407.00 L506.68,401.00 L506.74,395.00 L506.78,389.00 L506.81,383.00 L506.81,377.00 L506.78,371.00 L506.74,365.00 L506.67,359.00 L506.58,353.00 L506.47,347.00 L506.34,341.00 L506.19,335.00 L506.01,329.00 L505.81,323.00 L505.59,317.00 L505.35,311.00 L505.09,305.00 L504.80,299.00 L504.49,293.00 L504.16,287.00 L503.81,281.00 L503.44,275.00 L503.04,269.00 L502.62,263.00 L502.18,257.00 L501.72,251.00 L501.23,245.00 L500.73,239.00 L500.20,233.00 L499.64,227.00 L499.07,221.00 L498.47,215.00 L497.86,209.00 L497.21,203.00 L496.55,197.00 L495.87,191.00 L495.16,185.00 L494.43,179.00 L493.67,173.00 L492.90,167.00 L492.10,161.00 L491.28,155.00 L490.44,149.00 L489.57,143.00 L488.68,137.00 L487.77,131.00 L486.84,125.00 L485.89,119.00 L484.91,113.00Z" fill="#ffffff"/>
<path d="M500.54,113.00 L501.51,119.00 L502.45,125.00 L503.37,131.00 L504.27,137.00 L505.15,143.00 L506.00,149.00 L506.84,155.00 L507.65,161.00 L508.44,167.00 L509.21,173.00 L509.96,179.00 L510.68,185.00 L511.39,191.00 L512.07,197.00 L512.73,203.00 L513.37,209.00 L513.99,215.00 L514.58,221.00 L515.16,227.00 L515.71,233.00 L516.24,239.00 L516.75,245.00 L517.24,251.00 L517.71,257.00 L518.15,263.00 L518.58,269.00 L518.99,275.00 L519.37,281.00 L519.73,287.00 L520.07,293.00 L520.39,299.00 L520.69,305.00 L520.96,311.00 L521.21,317.00 L521.45,323.00 L521.66,329.00 L521.85,335.00 L522.02,341.00 L522.16,347.00 L522.29,353.00 L522.40,359.00 L522.48,365.00 L522.54,371.00 L522.58,377.00 L522.60,383.00 L522.60,389.00 L522.57,395.00 L522.53,401.00 L522.46,407.00 L522.38,413.00 L522.27,419.00 L522.14,425.00 L521.99,431.00 L521.82,437.00 L521.62,443.00 L521.41,449.00 L521.17,455.00 L520.91,461.00 L520.66,467.00 L520.38,473.00 L520.09,479.00 L519.77,485.00 L519.43,491.00 L519.07,497.00 L518.69,503.00 L518.29,509.00 L517.87,515.00 L517.42,521.00 L516.96,527.00 L516.47,533.00 L515.96,539.00 L515.43,545.00 L514.88,551.00 L514.31,557.00 L513.72,563.00 L513.11,569.00 L512.48,575.00 L511.82,581.00 L511.15,587.00 L510.45,593.00 L509.73,599.00 L509.00,605.00 L508.24,611.00 L507.47,617.00 L506.67,623.00 L505.85,629.00 L505.01,635.00 L504.15,641.00 L503.27,647.00 L502.37,653.00 L501.45,659.00 L500.50,665.00 L499.54,671.00 L498.55,677.00 L497.55,683.00 L496.52,689.00 L495.48,695.00 L494.41,701.00 L493.32,707.00 L492.20,713.00 L491.07,719.00 L489.91,725.00 L488.74,731.00 L487.54,737.00 L486.33,743.00 L485.09,749.00 L483.83,755.00 L482.55,761.00 L481.25,767.00 L479.93,773.00 L478.59,779.00 L477.23,785.00 L475.85,791.00 L474.45,797.00 L473.03,803.00 L471.59,809.00 L473.54,809.00 L475.01,803.00 L476.46,797.00 L477.89,791.00 L479.30,785.00 L480.68,779.00 L482.05,773.00 L483.40,767.00 L484.72,761.00 L486.03,755.00 L487.31,749.00 L488.57,743.00 L489.82,737.00 L491.04,731.00 L492.24,725.00 L493.42,719.00 L494.58,713.00 L495.72,707.00 L496.84,701.00 L497.94,695.00 L499.03,689.00 L500.09,683.00 L501.13,677.00 L502.15,671.00 L503.15,665.00 L504.13,659.00 L505.08,653.00 L506.02,647.00 L506.94,641.00 L507.83,635.00 L508.70,629.00 L509.56,623.00 L510.39,617.00 L511.20,611.00 L511.99,605.00 L512.76,599.00 L513.51,593.00 L514.23,587.00 L514.94,581.00 L515.62,575.00 L516.28,569.00 L516.93,563.00 L517.55,557.00 L518.15,551.00 L518.72,545.00 L519.28,539.00 L519.82,533.00 L520.33,527.00 L520.83,521.00 L521.30,515.00 L521.76,509.00 L522.19,503.00 L522.60,497.00 L522.99,491.00 L523.36,485.00 L523.70,479.00 L524.03,473.00 L524.33,467.00 L524.62,461.00 L524.86,455.00 L525.08,449.00 L525.27,443.00 L525.45,437.00 L525.60,431.00 L525.74,425.00 L525.85,419.00 L525.94,413.00 L526.01,407.00 L526.06,401.00 L526.09,395.00 L526.09,389.00 L526.08,383.00 L526.04,377.00 L525.98,371.00 L525.91,365.00 L525.81,359.00 L525.68,353.00 L525.54,347.00 L525.38,341.00 L525.19,335.00 L524.99,329.00 L524.76,323.00 L524.51,317.00 L524.24,311.00 L523.95,305.00 L523.63,299.00 L523.30,293.00 L522.94,287.00 L522.56,281.00 L522.16,275.00 L521.74,269.00 L521.30,263.00 L520.84,257.00 L520.35,251.00 L519.84,245.00 L519.31,239.00 L518.76,233.00 L518.19,227.00 L517.59,221.00 L516.97,215.00 L516.34,209.00 L515.68,203.00 L514.99,197.00 L514.29,191.00 L513.57,185.00 L512.82,179.00 L512.05,173.00 L511.26,167.00 L510.45,161.00 L509.62,155.00 L508.76,149.00 L507.89,143.00 L506.99,137.00 L506.07,131.00 L505.13,125.00 L504.16,119.00 L503.18,113.00Z" fill="#ffff00"/>
<path d="M500.64,113.00 L501.62,119.00 L502.58,125.00 L503.51,131.00 L504.42,137.00 L505.31,143.00 L506.18,149.00 L507.03,155.00 L507.85,161.00 L508.66,167.00 L509.44,173.00 L510.20,179.00 L510.94,185.00 L511.65,191.00 L512.35,197.00 L513.02,203.00 L513.67,209.00 L514.30,215.00 L514.91,221.00 L515.50,227.00 L516.06,233.00 L516.61,239.00 L517.13,245.00 L517.63,251.00 L518.11,257.00 L518.57,263.00 L519.00,269.00 L519.42,275.00 L519.81,281.00 L520.18,287.00 L520.53,293.00 L520.86,299.00 L521.17,305.00 L521.45,311.00 L521.72,317.00 L521.96,323.00 L522.18,329.00 L522.38,335.00 L522.56,341.00 L522.72,347.00 L522.86,353.00 L522.97,359.00 L523.06,365.00 L523.14,371.00 L523.19,377.00 L523.22,383.00 L523.22,389.00 L523.21,395.00 L523.18,401.00 L523.12,407.00 L523.04,413.00 L522.95,419.00 L522.83,425.00 L522.69,431.00 L522.52,437.00 L522.34,443.00 L522.14,449.00 L521.91,455.00 L521.67,461.00 L521.42,467.00 L521.15,473.00 L520.87,479.00 L520.56,485.00 L520.23,491.00 L519.87,497.00 L519.50,503.00 L519.11,509.00 L518.70,515.00 L518.26,521.00 L517.80,527.00 L517.33,533.00 L516.83,539.00 L516.31,545.00 L515.77,551.00 L515.21,557.00 L514.62,563.00 L514.02,569.00 L513.40,575.00 L512.75,581.00 L512.08,587.00 L511.40,593.00 L510.69,599.00 L509.94,605.00 L509.17,611.00 L508.38,617.00 L507.57,623.00 L506.74,629.00 L505.88,635.00 L505.01,641.00 L504.11,647.00 L503.20,653.00 L502.26,659.00 L501.30,665.00 L500.32,671.00 L499.32,677.00 L498.30,683.00 L497.26,689.00 L496.20,695.00 L495.12,701.00 L494.02,707.00 L492.91,713.00 L491.77,719.00 L490.61,725.00 L489.44,731.00 L488.24,737.00 L487.02,743.00 L485.78,749.00 L484.52,755.00 L483.24,761.00 L481.94,767.00 L480.62,773.00 L479.27,779.00 L477.91,785.00 L476.53,791.00 L475.12,797.00 L473.70,803.00 L472.25,809.00 L472.87,809.00 L474.34,803.00 L475.79,797.00 L477.21,791.00 L478.62,785.00 L480.00,779.00 L481.37,773.00 L482.71,767.00 L484.03,761.00 L485.34,755.00 L486.62,749.00 L487.88,743.00 L489.12,737.00 L490.34,731.00 L491.54,725.00 L492.72,719.00 L493.88,713.00 L495.01,707.00 L496.13,701.00 L497.22,695.00 L498.29,689.00 L499.33,683.00 L500.36,677.00 L501.37,671.00 L502.35,665.00 L503.31,659.00 L504.26,653.00 L505.18,647.00 L506.08,641.00 L506.96,635.00 L507.82,629.00 L508.66,623.00 L509.47,617.00 L510.27,611.00 L511.05,605.00 L511.81,599.00 L512.56,593.00 L513.30,587.00 L514.01,581.00 L514.70,575.00 L515.37,569.00 L516.02,563.00 L516.65,557.00 L517.26,551.00 L517.85,545.00 L518.42,539.00 L518.96,533.00 L519.49,527.00 L519.99,521.00 L520.47,515.00 L520.93,509.00 L521.37,503.00 L521.79,497.00 L522.19,491.00 L522.57,485.00 L522.93,479.00 L523.26,473.00 L523.57,467.00 L523.87,461.00 L524.12,455.00 L524.35,449.00 L524.55,443.00 L524.74,437.00 L524.90,431.00 L525.05,425.00 L525.17,419.00 L525.27,413.00 L525.35,407.00 L525.41,401.00 L525.45,395.00 L525.47,389.00 L525.46,383.00 L525.44,377.00 L525.39,371.00 L525.32,365.00 L525.23,359.00 L525.12,353.00 L524.99,347.00 L524.83,341.00 L524.66,335.00 L524.46,329.00 L524.24,323.00 L524.00,317.00 L523.74,311.00 L523.46,305.00 L523.16,299.00 L522.83,293.00 L522.49,287.00 L522.12,281.00 L521.73,275.00 L521.32,269.00 L520.89,263.00 L520.43,257.00 L519.96,251.00 L519.46,245.00 L518.94,239.00 L518.40,233.00 L517.84,227.00 L517.26,221.00 L516.66,215.00 L516.03,209.00 L515.38,203.00 L514.71,197.00 L514.02,191.00 L513.31,185.00 L512.58,179.00 L511.82,173.00 L511.05,167.00 L510.25,161.00 L509.43,155.00 L508.58,149.00 L507.72,143.00 L506.84,137.00 L505.93,131.00 L505.00,125.00 L504.05,119.00 L503.08,113.00Z" fill="#ffffff"/>
<path d="M517.77,113.00 L518.75,119.00 L519.70,125.00 L520.64,131.00 L521.55,137.00 L522.44,143.00 L523.32,149.00 L524.17,155.00 L524.99,161.00 L525.80,167.00 L526.59,173.00 L527.35,179.00 L528.10,185.00 L528.82,191.00 L529.52,197.00 L530.20,203.00 L530.86,209.00 L531.49,215.00 L532.11,221.00 L532.71,227.00 L533.28,233.00 L533.83,239.00 L534.36,245.00 L534.87,251.00 L535.36,257.00 L535.83,263.00 L536.28,269.00 L536.71,275.00 L537.12,281.00 L537.50,287.00 L537.87,293.00 L538.21,299.00 L538.53,305.00 L538.83,311.00 L539.11,317.00 L539.37,323.00 L539.61,329.00 L539.83,335.00 L540.02,341.00 L540.19,347.00 L540.35,353.00 L540.48,359.00 L540.59,365.00 L540.68,371.00 L540.75,377.00 L540.80,383.00 L540.83,389.00 L540.83,395.00 L540.82,401.00 L540.78,407.00 L540.73,413.00 L540.65,419.00 L540.55,425.00 L540.43,431.00 L540.29,437.00 L540.13,443.00 L539.95,449.00 L539.74,455.00 L539.52,461.00 L539.30,467.00 L539.05,473.00 L538.79,479.00 L538.51,485.00 L538.20,491.00 L537.88,497.00 L537.53,503.00 L537.16,509.00 L536.77,515.00 L536.37,521.00 L535.94,527.00 L535.48,533.00 L535.01,539.00 L534.52,545.00 L534.01,551.00 L533.47,557.00 L532.92,563.00 L532.35,569.00 L531.75,575.00 L531.13,581.00 L530.50,587.00 L529.84,593.00 L529.16,599.00 L528.46,605.00 L527.75,611.00 L527.01,617.00 L526.25,623.00 L525.47,629.00 L524.67,635.00 L523.85,641.00 L523.01,647.00 L522.15,653.00 L521.27,659.00 L520.36,665.00 L519.44,671.00 L518.50,677.00 L517.53,683.00 L516.55,689.00 L515.54,695.00 L514.51,701.00 L513.46,707.00 L512.39,713.00 L511.30,719.00 L510.19,725.00 L509.06,731.00 L507.90,737.00 L506.73,743.00 L505.53,749.00 L504.32,755.00 L503.09,761.00 L501.83,767.00 L500.55,773.00 L499.26,779.00 L497.94,785.00 L496.60,791.00 L495.25,797.00 L493.87,803.00 L492.47,809.00 L494.42,809.00 L495.85,803.00 L497.25,797.00 L498.64,791.00 L500.00,785.00 L501.34,779.00 L502.67,773.00 L503.97,767.00 L505.25,761.00 L506.51,755.00 L507.75,749.00 L508.98,743.00 L510.18,737.00 L511.36,731.00 L512.51,725.00 L513.65,719.00 L514.77,713.00 L515.87,707.00 L516.95,701.00 L518.01,695.00 L519.05,689.00 L520.07,683.00 L521.07,677.00 L522.05,671.00 L523.00,665.00 L523.94,659.00 L524.86,653.00 L525.76,647.00 L526.63,641.00 L527.49,635.00 L528.32,629.00 L529.14,623.00 L529.93,617.00 L530.70,611.00 L531.45,605.00 L532.18,599.00 L532.89,593.00 L533.58,587.00 L534.25,581.00 L534.89,575.00 L535.52,569.00 L536.12,563.00 L536.71,557.00 L537.27,551.00 L537.81,545.00 L538.33,539.00 L538.83,533.00 L539.31,527.00 L539.77,521.00 L540.21,515.00 L540.63,509.00 L541.02,503.00 L541.40,497.00 L541.76,491.00 L542.09,485.00 L542.40,479.00 L542.70,473.00 L542.97,467.00 L543.22,461.00 L543.43,455.00 L543.61,449.00 L543.78,443.00 L543.92,437.00 L544.04,431.00 L544.15,425.00 L544.23,419.00 L544.29,413.00 L544.33,407.00 L544.35,401.00 L544.35,395.00 L544.32,389.00 L544.28,383.00 L544.21,377.00 L544.13,371.00 L544.02,365.00 L543.89,359.00 L543.74,353.00 L543.57,347.00 L543.38,341.00 L543.17,335.00 L542.94,329.00 L542.68,323.00 L542.41,317.00 L542.11,311.00 L541.79,305.00 L541.45,299.00 L541.09,293.00 L540.71,287.00 L540.31,281.00 L539.89,275.00 L539.45,269.00 L538.98,263.00 L538.49,257.00 L537.99,251.00 L537.46,245.00 L536.90,239.00 L536.33,233.00 L535.74,227.00 L535.12,221.00 L534.48,215.00 L533.83,209.00 L533.15,203.00 L532.45,197.00 L531.72,191.00 L530.98,185.00 L530.22,179.00 L529.43,173.00 L528.62,167.00 L527.80,161.00 L526.95,155.00 L526.08,149.00 L525.18,143.00 L524.27,137.00 L523.34,131.00 L522.38,125.00 L521.40,119.00 L520.40,113.00Z" fill="#ffff00"/>
<path d="M517.87,113.00 L518.86,119.00 L519.83,125.00 L520.78,131.00 L521.70,137.00 L522.61,143.00 L523.49,149.00 L524.36,155.00 L525.20,161.00 L526.02,167.00 L526.82,173.00 L527.59,179.00 L528.35,185.00 L529.09,191.00 L529.80,197.00 L530.49,203.00 L531.16,209.00 L531.81,215.00 L532.44,221.00 L533.05,227.00 L533.63,233.00 L534.20,239.00 L534.74,245.00 L535.27,251.00 L535.77,257.00 L536.25,263.00 L536.71,269.00 L537.14,275.00 L537.56,281.00 L537.96,287.00 L538.33,293.00 L538.68,299.00 L539.02,305.00 L539.33,311.00 L539.62,317.00 L539.89,323.00 L540.13,329.00 L540.36,335.00 L540.57,341.00 L540.75,347.00 L540.91,353.00 L541.06,359.00 L541.18,365.00 L541.28,371.00 L541.36,377.00 L541.42,383.00 L541.45,389.00 L541.47,395.00 L541.47,401.00 L541.44,407.00 L541.39,413.00 L541.33,419.00 L541.24,425.00 L541.13,431.00 L541.00,437.00 L540.85,443.00 L540.68,449.00 L540.48,455.00 L540.27,461.00 L540.06,467.00 L539.82,473.00 L539.57,479.00 L539.29,485.00 L539.00,491.00 L538.68,497.00 L538.34,503.00 L537.98,509.00 L537.60,515.00 L537.20,521.00 L536.78,527.00 L536.34,533.00 L535.88,539.00 L535.40,545.00 L534.89,551.00 L534.37,557.00 L533.82,563.00 L533.26,569.00 L532.67,575.00 L532.06,581.00 L531.43,587.00 L530.78,593.00 L530.11,599.00 L529.41,605.00 L528.67,611.00 L527.92,617.00 L527.15,623.00 L526.36,629.00 L525.54,635.00 L524.71,641.00 L523.85,647.00 L522.97,653.00 L522.08,659.00 L521.16,665.00 L520.22,671.00 L519.26,677.00 L518.28,683.00 L517.28,689.00 L516.26,695.00 L515.23,701.00 L514.17,707.00 L513.10,713.00 L512.00,719.00 L510.89,725.00 L509.75,731.00 L508.60,737.00 L507.42,743.00 L506.23,749.00 L505.01,755.00 L503.77,761.00 L502.51,767.00 L501.24,773.00 L499.94,779.00 L498.62,785.00 L497.28,791.00 L495.92,797.00 L494.54,803.00 L493.14,809.00 L493.75,809.00 L495.18,803.00 L496.58,797.00 L497.96,791.00 L499.32,785.00 L500.66,779.00 L501.98,773.00 L503.29,767.00 L504.56,761.00 L505.82,755.00 L507.06,749.00 L508.28,743.00 L509.48,737.00 L510.66,731.00 L511.81,725.00 L512.95,719.00 L514.07,713.00 L515.16,707.00 L516.24,701.00 L517.28,695.00 L518.31,689.00 L519.32,683.00 L520.30,677.00 L521.26,671.00 L522.21,665.00 L523.13,659.00 L524.03,653.00 L524.91,647.00 L525.78,641.00 L526.62,635.00 L527.44,629.00 L528.24,623.00 L529.01,617.00 L529.77,611.00 L530.51,605.00 L531.23,599.00 L531.95,593.00 L532.64,587.00 L533.32,581.00 L533.97,575.00 L534.61,569.00 L535.22,563.00 L535.81,557.00 L536.39,551.00 L536.94,545.00 L537.47,539.00 L537.98,533.00 L538.47,527.00 L538.93,521.00 L539.38,515.00 L539.81,509.00 L540.21,503.00 L540.60,497.00 L540.96,491.00 L541.31,485.00 L541.63,479.00 L541.93,473.00 L542.21,467.00 L542.47,461.00 L542.69,455.00 L542.88,449.00 L543.06,443.00 L543.21,437.00 L543.35,431.00 L543.46,425.00 L543.55,419.00 L543.62,413.00 L543.67,407.00 L543.70,401.00 L543.71,395.00 L543.69,389.00 L543.66,383.00 L543.61,377.00 L543.53,371.00 L543.43,365.00 L543.32,359.00 L543.18,353.00 L543.02,347.00 L542.84,341.00 L542.63,335.00 L542.41,329.00 L542.17,323.00 L541.90,317.00 L541.62,311.00 L541.31,305.00 L540.98,299.00 L540.63,293.00 L540.26,287.00 L539.87,281.00 L539.46,275.00 L539.02,269.00 L538.57,263.00 L538.09,257.00 L537.59,251.00 L537.08,245.00 L536.54,239.00 L535.98,233.00 L535.39,227.00 L534.79,221.00 L534.17,215.00 L533.52,209.00 L532.85,203.00 L532.17,197.00 L531.46,191.00 L530.73,185.00 L529.98,179.00 L529.20,173.00 L528.41,167.00 L527.59,161.00 L526.76,155.00 L525.90,149.00 L525.02,143.00 L524.12,137.00 L523.20,131.00 L522.25,125.00 L521.29,119.00 L520.30,113.00Z" fill="#ffffff"/>
<path d="M534.18,113.00 L535.14,119.00 L536.08,125.00 L537.01,131.00 L537.91,137.00 L538.79,143.00 L539.65,149.00 L540.49,155.00 L541.31,161.00 L542.12,167.00 L542.90,173.00 L543.66,179.00 L544.40,185.00 L545.13,191.00 L545.83,197.00 L546.51,203.00 L547.18,209.00 L547.82,215.00 L548.44,221.00 L549.05,227.00 L549.63,233.00 L550.19,239.00 L550.74,245.00 L551.26,251.00 L551.77,257.00 L552.25,263.00 L552.72,269.00 L553.16,275.00 L553.59,281.00 L553.99,287.00 L554.38,293.00 L554.74,299.00 L555.09,305.00 L555.41,311.00 L555.72,317.00 L556.00,323.00 L556.26,329.00 L556.51,335.00 L556.73,341.00 L556.93,347.00 L557.11,353.00 L557.28,359.00 L557.42,365.00 L557.54,371.00 L557.64,377.00 L557.72,383.00 L557.78,389.00 L557.82,395.00 L557.84,401.00 L557.84,407.00 L557.82,413.00 L557.77,419.00 L557.71,425.00 L557.63,431.00 L557.52,437.00 L557.40,443.00 L557.25,449.00 L557.09,455.00 L556.90,461.00 L556.72,467.00 L556.51,473.00 L556.29,479.00 L556.04,485.00 L555.78,491.00 L555.49,497.00 L555.18,503.00 L554.85,509.00 L554.50,515.00 L554.13,521.00 L553.74,527.00 L553.33,533.00 L552.90,539.00 L552.44,545.00 L551.97,551.00 L551.47,557.00 L550.96,563.00 L550.42,569.00 L549.86,575.00 L549.28,581.00 L548.68,587.00 L548.06,593.00 L547.42,599.00 L546.76,605.00 L546.08,611.00 L545.37,617.00 L544.65,623.00 L543.91,629.00 L543.14,635.00 L542.35,641.00 L541.55,647.00 L540.72,653.00 L539.87,659.00 L538.99,665.00 L538.10,671.00 L537.19,677.00 L536.25,683.00 L535.30,689.00 L534.32,695.00 L533.32,701.00 L532.29,707.00 L531.25,713.00 L530.18,719.00 L529.09,725.00 L527.98,731.00 L526.85,737.00 L525.70,743.00 L524.52,749.00 L523.33,755.00 L522.11,761.00 L520.87,767.00 L519.61,773.00 L518.33,779.00 L517.03,785.00 L515.70,791.00 L514.36,797.00 L512.99,803.00 L511.60,809.00 L513.55,809.00 L514.97,803.00 L516.36,797.00 L517.73,791.00 L519.09,785.00 L520.42,779.00 L521.72,773.00 L523.01,767.00 L524.28,761.00 L525.52,755.00 L526.74,749.00 L527.94,743.00 L529.12,737.00 L530.28,731.00 L531.42,725.00 L532.53,719.00 L533.63,713.00 L534.70,707.00 L535.75,701.00 L536.78,695.00 L537.80,689.00 L538.79,683.00 L539.76,677.00 L540.71,671.00 L541.63,665.00 L542.54,659.00 L543.43,653.00 L544.29,647.00 L545.13,641.00 L545.95,635.00 L546.76,629.00 L547.54,623.00 L548.29,617.00 L549.03,611.00 L549.75,605.00 L550.44,599.00 L551.11,593.00 L551.76,587.00 L552.39,581.00 L553.00,575.00 L553.59,569.00 L554.16,563.00 L554.70,557.00 L555.23,551.00 L555.73,545.00 L556.21,539.00 L556.68,533.00 L557.12,527.00 L557.54,521.00 L557.94,515.00 L558.32,509.00 L558.67,503.00 L559.01,497.00 L559.33,491.00 L559.62,485.00 L559.90,479.00 L560.15,473.00 L560.39,467.00 L560.60,461.00 L560.77,455.00 L560.92,449.00 L561.05,443.00 L561.16,437.00 L561.24,431.00 L561.31,425.00 L561.35,419.00 L561.38,413.00 L561.38,407.00 L561.37,401.00 L561.33,395.00 L561.28,389.00 L561.20,383.00 L561.10,377.00 L560.98,371.00 L560.85,365.00 L560.69,359.00 L560.51,353.00 L560.31,347.00 L560.09,341.00 L559.85,335.00 L559.59,329.00 L559.31,323.00 L559.01,317.00 L558.69,311.00 L558.35,305.00 L557.99,299.00 L557.61,293.00 L557.20,287.00 L556.78,281.00 L556.34,275.00 L555.88,269.00 L555.40,263.00 L554.90,257.00 L554.37,251.00 L553.83,245.00 L553.27,239.00 L552.68,233.00 L552.08,227.00 L551.45,221.00 L550.81,215.00 L550.14,209.00 L549.46,203.00 L548.76,197.00 L548.03,191.00 L547.29,185.00 L546.52,179.00 L545.74,173.00 L544.94,167.00 L544.11,161.00 L543.27,155.00 L542.41,149.00 L541.53,143.00 L540.62,137.00 L539.70,131.00 L538.76,125.00 L537.80,119.00 L536.82,113.00Z" fill="#ffff00"/>
<path d="M534.29,113.00 L535.26,119.00 L536.21,125.00 L537.15,131.00 L538.06,137.00 L538.95,143.00 L539.83,149.00 L540.68,155.00 L541.52,161.00 L542.33,167.00 L543.13,173.00 L543.90,179.00 L544.66,185.00 L545.39,191.00 L546.11,197.00 L546.80,203.00 L547.48,209.00 L548.14,215.00 L548.77,221.00 L549.39,227.00 L549.98,233.00 L550.56,239.00 L551.12,245.00 L551.65,251.00 L552.17,257.00 L552.66,263.00 L553.14,269.00 L553.60,275.00 L554.03,281.00 L554.45,287.00 L554.84,293.00 L555.22,299.00 L555.57,305.00 L555.91,311.00 L556.22,317.00 L556.51,323.00 L556.79,329.00 L557.04,335.00 L557.27,341.00 L557.49,347.00 L557.68,353.00 L557.85,359.00 L558.00,365.00 L558.14,371.00 L558.25,377.00 L558.34,383.00 L558.41,389.00 L558.46,395.00 L558.49,401.00 L558.50,407.00 L558.48,413.00 L558.45,419.00 L558.40,425.00 L558.33,431.00 L558.23,437.00 L558.12,443.00 L557.98,449.00 L557.83,455.00 L557.65,461.00 L557.48,467.00 L557.28,473.00 L557.06,479.00 L556.83,485.00 L556.57,491.00 L556.29,497.00 L555.99,503.00 L555.67,509.00 L555.33,515.00 L554.97,521.00 L554.59,527.00 L554.19,533.00 L553.76,539.00 L553.32,545.00 L552.85,551.00 L552.36,557.00 L551.86,563.00 L551.33,569.00 L550.78,575.00 L550.21,581.00 L549.62,587.00 L549.01,593.00 L548.37,599.00 L547.70,605.00 L547.01,611.00 L546.29,617.00 L545.55,623.00 L544.79,629.00 L544.01,635.00 L543.21,641.00 L542.39,647.00 L541.54,653.00 L540.68,659.00 L539.79,665.00 L538.88,671.00 L537.95,677.00 L537.00,683.00 L536.03,689.00 L535.04,695.00 L534.03,701.00 L533.00,707.00 L531.95,713.00 L530.88,719.00 L529.79,725.00 L528.68,731.00 L527.55,737.00 L526.39,743.00 L525.21,749.00 L524.02,755.00 L522.80,761.00 L521.56,767.00 L520.29,773.00 L519.01,779.00 L517.70,785.00 L516.38,791.00 L515.03,797.00 L513.66,803.00 L512.27,809.00 L512.88,809.00 L514.30,803.00 L515.69,797.00 L517.06,791.00 L518.41,785.00 L519.74,779.00 L521.04,773.00 L522.33,767.00 L523.59,761.00 L524.83,755.00 L526.05,749.00 L527.25,743.00 L528.43,737.00 L529.58,731.00 L530.72,725.00 L531.83,719.00 L532.92,713.00 L533.99,707.00 L535.04,701.00 L536.06,695.00 L537.06,689.00 L538.03,683.00 L538.99,677.00 L539.92,671.00 L540.84,665.00 L541.73,659.00 L542.60,653.00 L543.45,647.00 L544.28,641.00 L545.08,635.00 L545.87,629.00 L546.64,623.00 L547.38,617.00 L548.10,611.00 L548.80,605.00 L549.49,599.00 L550.17,593.00 L550.83,587.00 L551.47,581.00 L552.08,575.00 L552.68,569.00 L553.26,563.00 L553.81,557.00 L554.34,551.00 L554.86,545.00 L555.35,539.00 L555.82,533.00 L556.27,527.00 L556.70,521.00 L557.11,515.00 L557.50,509.00 L557.86,503.00 L558.21,497.00 L558.53,491.00 L558.84,485.00 L559.12,479.00 L559.39,473.00 L559.63,467.00 L559.85,461.00 L560.03,455.00 L560.19,449.00 L560.33,443.00 L560.45,437.00 L560.54,431.00 L560.62,425.00 L560.68,419.00 L560.71,413.00 L560.73,407.00 L560.72,401.00 L560.70,395.00 L560.65,389.00 L560.58,383.00 L560.50,377.00 L560.39,371.00 L560.26,365.00 L560.11,359.00 L559.94,353.00 L559.75,347.00 L559.54,341.00 L559.32,335.00 L559.07,329.00 L558.80,323.00 L558.51,317.00 L558.19,311.00 L557.86,305.00 L557.51,299.00 L557.14,293.00 L556.75,287.00 L556.34,281.00 L555.91,275.00 L555.46,269.00 L554.99,263.00 L554.49,257.00 L553.98,251.00 L553.45,245.00 L552.90,239.00 L552.33,233.00 L551.73,227.00 L551.12,221.00 L550.49,215.00 L549.84,209.00 L549.17,203.00 L548.48,197.00 L547.77,191.00 L547.03,185.00 L546.28,179.00 L545.51,173.00 L544.72,167.00 L543.91,161.00 L543.08,155.00 L542.23,149.00 L541.36,143.00 L540.47,137.00 L539.56,131.00 L538.63,125.00 L537.69,119.00 L536.72,113.00Z" fill="#ffffff"/>
<path d="M549.74,113.00 L550.75,119.00 L551.74,125.00 L552.70,131.00 L553.65,137.00 L554.57,143.00 L555.47,149.00 L556.36,155.00 L557.22,161.00 L558.06,167.00 L558.87,173.00 L559.67,179.00 L560.45,185.00 L561.20,191.00 L561.94,197.00 L562.65,203.00 L563.34,209.00 L564.02,215.00 L564.67,221.00 L565.30,227.00 L565.91,233.00 L566.49,239.00 L567.06,245.00 L567.61,251.00 L568.14,257.00 L568.64,263.00 L569.13,269.00 L569.59,275.00 L570.04,281.00 L570.46,287.00 L570.87,293.00 L571.25,299.00 L571.61,305.00 L571.95,311.00 L572.27,317.00 L572.57,323.00 L572.85,329.00 L573.10,335.00 L573.34,341.00 L573.56,347.00 L573.75,353.00 L573.93,359.00 L574.08,365.00 L574.21,371.00 L574.33,377.00 L574.42,383.00 L574.49,389.00 L574.54,395.00 L574.57,401.00 L574.58,407.00 L574.57,413.00 L574.54,419.00 L574.48,425.00 L574.41,431.00 L574.32,437.00 L574.20,443.00 L574.07,449.00 L573.91,455.00 L573.74,461.00 L573.56,467.00 L573.37,473.00 L573.16,479.00 L572.92,485.00 L572.67,491.00 L572.39,497.00 L572.10,503.00 L571.78,509.00 L571.44,515.00 L571.09,521.00 L570.71,527.00 L570.31,533.00 L569.89,539.00 L569.45,545.00 L569.00,551.00 L568.52,557.00 L568.02,563.00 L567.50,569.00 L566.96,575.00 L566.40,581.00 L565.81,587.00 L565.21,593.00 L564.59,599.00 L563.95,605.00 L563.29,611.00 L562.61,617.00 L561.91,623.00 L561.19,629.00 L560.45,635.00 L559.69,641.00 L558.91,647.00 L558.11,653.00 L557.29,659.00 L556.45,665.00 L555.59,671.00 L554.71,677.00 L553.81,683.00 L552.89,689.00 L551.94,695.00 L550.98,701.00 L549.99,707.00 L548.99,713.00 L547.96,719.00 L546.92,725.00 L545.85,731.00 L544.76,737.00 L543.66,743.00 L542.53,749.00 L541.38,755.00 L540.22,761.00 L539.03,767.00 L537.82,773.00 L536.60,779.00 L535.35,785.00 L534.08,791.00 L532.80,797.00 L531.49,803.00 L530.16,809.00 L532.11,809.00 L533.46,803.00 L534.80,797.00 L536.11,791.00 L537.40,785.00 L538.68,779.00 L539.93,773.00 L541.16,767.00 L542.38,761.00 L543.57,755.00 L544.74,749.00 L545.90,743.00 L547.03,737.00 L548.14,731.00 L549.24,725.00 L550.31,719.00 L551.36,713.00 L552.40,707.00 L553.41,701.00 L554.40,695.00 L555.38,689.00 L556.34,683.00 L557.28,677.00 L558.19,671.00 L559.09,665.00 L559.96,659.00 L560.82,653.00 L561.66,647.00 L562.47,641.00 L563.27,635.00 L564.04,629.00 L564.80,623.00 L565.53,617.00 L566.25,611.00 L566.94,605.00 L567.61,599.00 L568.27,593.00 L568.90,587.00 L569.51,581.00 L570.10,575.00 L570.67,569.00 L571.22,563.00 L571.74,557.00 L572.25,551.00 L572.74,545.00 L573.21,539.00 L573.66,533.00 L574.08,527.00 L574.49,521.00 L574.88,515.00 L575.24,509.00 L575.59,503.00 L575.92,497.00 L576.22,491.00 L576.50,485.00 L576.77,479.00 L577.01,473.00 L577.24,467.00 L577.44,461.00 L577.60,455.00 L577.73,449.00 L577.85,443.00 L577.95,437.00 L578.02,431.00 L578.08,425.00 L578.12,419.00 L578.13,413.00 L578.13,407.00 L578.10,401.00 L578.05,395.00 L577.98,389.00 L577.90,383.00 L577.79,377.00 L577.66,371.00 L577.51,365.00 L577.34,359.00 L577.15,353.00 L576.93,347.00 L576.70,341.00 L576.45,335.00 L576.17,329.00 L575.88,323.00 L575.56,317.00 L575.23,311.00 L574.87,305.00 L574.49,299.00 L574.10,293.00 L573.68,287.00 L573.24,281.00 L572.78,275.00 L572.29,269.00 L571.79,263.00 L571.27,257.00 L570.72,251.00 L570.16,245.00 L569.57,239.00 L568.96,233.00 L568.33,227.00 L567.68,221.00 L567.01,215.00 L566.31,209.00 L565.60,203.00 L564.87,197.00 L564.11,191.00 L563.33,185.00 L562.54,179.00 L561.72,173.00 L560.88,167.00 L560.02,161.00 L559.14,155.00 L558.24,149.00 L557.31,143.00 L556.37,137.00 L555.40,131.00 L554.42,125.00 L553.41,119.00 L552.38,113.00Z" fill="#ffff00"/>
<path d="M549.84,113.00 L550.86,119.00 L551.86,125.00 L552.84,131.00 L553.80,137.00 L554.74,143.00 L555.65,149.00 L556.55,155.00 L557.42,161.00 L558.27,167.00 L559.10,173.00 L559.91,179.00 L560.70,185.00 L561.47,191.00 L562.22,197.00 L562.94,203.00 L563.65,209.00 L564.33,215.00 L565.00,221.00 L565.64,227.00 L566.26,233.00 L566.86,239.00 L567.44,245.00 L568.00,251.00 L568.54,257.00 L569.06,263.00 L569.55,269.00 L570.03,275.00 L570.48,281.00 L570.92,287.00 L571.33,293.00 L571.72,299.00 L572.09,305.00 L572.44,311.00 L572.77,317.00 L573.08,323.00 L573.37,329.00 L573.64,335.00 L573.89,341.00 L574.11,347.00 L574.32,353.00 L574.50,359.00 L574.67,365.00 L574.81,371.00 L574.93,377.00 L575.03,383.00 L575.12,389.00 L575.18,395.00 L575.22,401.00 L575.24,407.00 L575.24,413.00 L575.21,419.00 L575.17,425.00 L575.11,431.00 L575.03,437.00 L574.92,443.00 L574.80,449.00 L574.65,455.00 L574.49,461.00 L574.32,467.00 L574.14,473.00 L573.93,479.00 L573.71,485.00 L573.46,491.00 L573.19,497.00 L572.91,503.00 L572.60,509.00 L572.27,515.00 L571.92,521.00 L571.56,527.00 L571.17,533.00 L570.76,539.00 L570.33,545.00 L569.88,551.00 L569.41,557.00 L568.92,563.00 L568.41,569.00 L567.87,575.00 L567.32,581.00 L566.75,587.00 L566.16,593.00 L565.55,599.00 L564.90,605.00 L564.22,611.00 L563.53,617.00 L562.81,623.00 L562.08,629.00 L561.32,635.00 L560.55,641.00 L559.75,647.00 L558.94,653.00 L558.10,659.00 L557.25,665.00 L556.37,671.00 L555.47,677.00 L554.56,683.00 L553.62,689.00 L552.67,695.00 L551.69,701.00 L550.70,707.00 L549.69,713.00 L548.66,719.00 L547.61,725.00 L546.55,731.00 L545.46,737.00 L544.35,743.00 L543.22,749.00 L542.07,755.00 L540.90,761.00 L539.71,767.00 L538.50,773.00 L537.27,779.00 L536.03,785.00 L534.76,791.00 L533.47,797.00 L532.16,803.00 L530.83,809.00 L531.45,809.00 L532.80,803.00 L534.13,797.00 L535.44,791.00 L536.73,785.00 L538.00,779.00 L539.25,773.00 L540.48,767.00 L541.69,761.00 L542.88,755.00 L544.05,749.00 L545.21,743.00 L546.34,737.00 L547.45,731.00 L548.54,725.00 L549.61,719.00 L550.66,713.00 L551.69,707.00 L552.70,701.00 L553.68,695.00 L554.65,689.00 L555.59,683.00 L556.51,677.00 L557.41,671.00 L558.29,665.00 L559.15,659.00 L560.00,653.00 L560.82,647.00 L561.62,641.00 L562.40,635.00 L563.16,629.00 L563.90,623.00 L564.62,617.00 L565.32,611.00 L566.00,605.00 L566.66,599.00 L567.32,593.00 L567.96,587.00 L568.58,581.00 L569.18,575.00 L569.76,569.00 L570.32,563.00 L570.85,557.00 L571.37,551.00 L571.87,545.00 L572.34,539.00 L572.80,533.00 L573.24,527.00 L573.65,521.00 L574.05,515.00 L574.42,509.00 L574.78,503.00 L575.11,497.00 L575.43,491.00 L575.72,485.00 L575.99,479.00 L576.24,473.00 L576.48,467.00 L576.69,461.00 L576.86,455.00 L577.00,449.00 L577.13,443.00 L577.24,437.00 L577.33,431.00 L577.39,425.00 L577.44,419.00 L577.46,413.00 L577.47,407.00 L577.45,401.00 L577.41,395.00 L577.36,389.00 L577.28,383.00 L577.18,377.00 L577.06,371.00 L576.92,365.00 L576.76,359.00 L576.58,353.00 L576.38,347.00 L576.16,341.00 L575.91,335.00 L575.65,329.00 L575.37,323.00 L575.06,317.00 L574.73,311.00 L574.39,305.00 L574.02,299.00 L573.63,293.00 L573.22,287.00 L572.79,281.00 L572.34,275.00 L571.87,269.00 L571.38,263.00 L570.87,257.00 L570.33,251.00 L569.78,245.00 L569.20,239.00 L568.60,233.00 L567.99,227.00 L567.35,221.00 L566.69,215.00 L566.01,209.00 L565.31,203.00 L564.59,197.00 L563.84,191.00 L563.08,185.00 L562.30,179.00 L561.49,173.00 L560.66,167.00 L559.82,161.00 L558.95,155.00 L558.06,149.00 L557.15,143.00 L556.22,137.00 L555.26,131.00 L554.29,125.00 L553.29,119.00 L552.28,113.00Z" fill="#ffffff"/>
<path d="M564.66,113.00 L565.69,119.00 L566.69,125.00 L567.67,131.00 L568.63,137.00 L569.57,143.00 L570.49,149.00 L571.39,155.00 L572.27,161.00 L573.12,167.00 L573.96,173.00 L574.77,179.00 L575.57,185.00 L576.34,191.00 L577.09,197.00 L577.83,203.00 L578.54,209.00 L579.23,215.00 L579.89,221.00 L580.54,227.00 L581.17,233.00 L581.78,239.00 L582.36,245.00 L582.93,251.00 L583.47,257.00 L584.00,263.00 L584.50,269.00 L584.99,275.00 L585.45,281.00 L585.89,287.00 L586.32,293.00 L586.72,299.00 L587.10,305.00 L587.46,311.00 L587.80,317.00 L588.12,323.00 L588.41,329.00 L588.69,335.00 L588.95,341.00 L589.18,347.00 L589.40,353.00 L589.59,359.00 L589.77,365.00 L589.92,371.00 L590.05,377.00 L590.17,383.00 L590.26,389.00 L590.33,395.00 L590.38,401.00 L590.41,407.00 L590.42,413.00 L590.41,419.00 L590.37,425.00 L590.32,431.00 L590.25,437.00 L590.15,443.00 L590.04,449.00 L589.91,455.00 L589.75,461.00 L589.60,467.00 L589.43,473.00 L589.23,479.00 L589.02,485.00 L588.79,491.00 L588.53,497.00 L588.26,503.00 L587.96,509.00 L587.64,515.00 L587.31,521.00 L586.95,527.00 L586.57,533.00 L586.18,539.00 L585.76,545.00 L585.32,551.00 L584.86,557.00 L584.38,563.00 L583.88,569.00 L583.36,575.00 L582.82,581.00 L582.26,587.00 L581.68,593.00 L581.08,599.00 L580.46,605.00 L579.82,611.00 L579.17,617.00 L578.49,623.00 L577.79,629.00 L577.07,635.00 L576.33,641.00 L575.57,647.00 L574.79,653.00 L573.98,659.00 L573.16,665.00 L572.32,671.00 L571.46,677.00 L570.58,683.00 L569.68,689.00 L568.75,695.00 L567.81,701.00 L566.84,707.00 L565.86,713.00 L564.85,719.00 L563.82,725.00 L562.78,731.00 L561.71,737.00 L560.62,743.00 L559.51,749.00 L558.39,755.00 L557.24,761.00 L556.07,767.00 L554.88,773.00 L553.67,779.00 L552.44,785.00 L551.20,791.00 L549.93,797.00 L548.64,803.00 L547.33,809.00 L549.28,809.00 L550.61,803.00 L551.93,797.00 L553.22,791.00 L554.50,785.00 L555.75,779.00 L556.99,773.00 L558.20,767.00 L559.40,761.00 L560.57,755.00 L561.73,749.00 L562.86,743.00 L563.98,737.00 L565.07,731.00 L566.14,725.00 L567.20,719.00 L568.23,713.00 L569.24,707.00 L570.24,701.00 L571.21,695.00 L572.17,689.00 L573.11,683.00 L574.03,677.00 L574.92,671.00 L575.80,665.00 L576.66,659.00 L577.49,653.00 L578.31,647.00 L579.10,641.00 L579.88,635.00 L580.63,629.00 L581.37,623.00 L582.08,617.00 L582.78,611.00 L583.45,605.00 L584.10,599.00 L584.73,593.00 L585.34,587.00 L585.93,581.00 L586.50,575.00 L587.05,569.00 L587.58,563.00 L588.09,557.00 L588.58,551.00 L589.05,545.00 L589.49,539.00 L589.92,533.00 L590.33,527.00 L590.71,521.00 L591.08,515.00 L591.42,509.00 L591.75,503.00 L592.05,497.00 L592.34,491.00 L592.60,485.00 L592.84,479.00 L593.07,473.00 L593.27,467.00 L593.45,461.00 L593.59,455.00 L593.71,449.00 L593.80,443.00 L593.88,437.00 L593.94,431.00 L593.97,425.00 L593.99,419.00 L593.98,413.00 L593.95,407.00 L593.91,401.00 L593.84,395.00 L593.75,389.00 L593.64,383.00 L593.52,377.00 L593.37,371.00 L593.20,365.00 L593.01,359.00 L592.79,353.00 L592.56,347.00 L592.31,341.00 L592.04,335.00 L591.74,329.00 L591.43,323.00 L591.09,317.00 L590.74,311.00 L590.36,305.00 L589.96,299.00 L589.55,293.00 L589.11,287.00 L588.65,281.00 L588.17,275.00 L587.67,269.00 L587.15,263.00 L586.61,257.00 L586.04,251.00 L585.46,245.00 L584.85,239.00 L584.22,233.00 L583.58,227.00 L582.91,221.00 L582.22,215.00 L581.51,209.00 L580.78,203.00 L580.02,197.00 L579.25,191.00 L578.46,185.00 L577.64,179.00 L576.81,173.00 L575.95,167.00 L575.07,161.00 L574.18,155.00 L573.26,149.00 L572.32,143.00 L571.36,137.00 L570.37,131.00 L569.37,125.00 L568.35,119.00 L567.30,113.00Z" fill="#ffff00"/>
<path d="M564.77,113.00 L565.80,119.00 L566.82,125.00 L567.81,131.00 L568.79,137.00 L569.74,143.00 L570.67,149.00 L571.58,155.00 L572.47,161.00 L573.34,167.00 L574.19,173.00 L575.02,179.00 L575.82,185.00 L576.61,191.00 L577.37,197.00 L578.12,203.00 L578.84,209.00 L579.54,215.00 L580.22,221.00 L580.88,227.00 L581.52,233.00 L582.14,239.00 L582.74,245.00 L583.32,251.00 L583.88,257.00 L584.41,263.00 L584.93,269.00 L585.42,275.00 L585.90,281.00 L586.35,287.00 L586.78,293.00 L587.19,299.00 L587.58,305.00 L587.95,311.00 L588.30,317.00 L588.63,323.00 L588.94,329.00 L589.23,335.00 L589.49,341.00 L589.74,347.00 L589.96,353.00 L590.17,359.00 L590.35,365.00 L590.52,371.00 L590.66,377.00 L590.78,383.00 L590.88,389.00 L590.97,395.00 L591.03,401.00 L591.07,407.00 L591.09,413.00 L591.08,419.00 L591.06,425.00 L591.02,431.00 L590.96,437.00 L590.87,443.00 L590.77,449.00 L590.65,455.00 L590.50,461.00 L590.36,467.00 L590.19,473.00 L590.01,479.00 L589.80,485.00 L589.58,491.00 L589.33,497.00 L589.07,503.00 L588.78,509.00 L588.47,515.00 L588.15,521.00 L587.80,527.00 L587.43,533.00 L587.04,539.00 L586.63,545.00 L586.20,551.00 L585.75,557.00 L585.28,563.00 L584.79,569.00 L584.28,575.00 L583.75,581.00 L583.20,587.00 L582.63,593.00 L582.04,599.00 L581.41,605.00 L580.75,611.00 L580.08,617.00 L579.38,623.00 L578.67,629.00 L577.94,635.00 L577.18,641.00 L576.41,647.00 L575.61,653.00 L574.79,659.00 L573.96,665.00 L573.10,671.00 L572.23,677.00 L571.33,683.00 L570.41,689.00 L569.48,695.00 L568.52,701.00 L567.55,707.00 L566.56,713.00 L565.55,719.00 L564.52,725.00 L563.47,731.00 L562.40,737.00 L561.31,743.00 L560.20,749.00 L559.07,755.00 L557.92,761.00 L556.75,767.00 L555.56,773.00 L554.35,779.00 L553.12,785.00 L551.87,791.00 L550.60,797.00 L549.31,803.00 L548.00,809.00 L548.61,809.00 L549.94,803.00 L551.26,797.00 L552.55,791.00 L553.82,785.00 L555.08,779.00 L556.31,773.00 L557.52,767.00 L558.71,761.00 L559.89,755.00 L561.04,749.00 L562.17,743.00 L563.28,737.00 L564.37,731.00 L565.44,725.00 L566.50,719.00 L567.53,713.00 L568.54,707.00 L569.53,701.00 L570.49,695.00 L571.44,689.00 L572.36,683.00 L573.26,677.00 L574.14,671.00 L575.00,665.00 L575.85,659.00 L576.67,653.00 L577.47,647.00 L578.25,641.00 L579.01,635.00 L579.75,629.00 L580.47,623.00 L581.17,617.00 L581.85,611.00 L582.51,605.00 L583.15,599.00 L583.79,593.00 L584.41,587.00 L585.01,581.00 L585.59,575.00 L586.14,569.00 L586.68,563.00 L587.20,557.00 L587.70,551.00 L588.17,545.00 L588.63,539.00 L589.06,533.00 L589.48,527.00 L589.87,521.00 L590.25,515.00 L590.60,509.00 L590.94,503.00 L591.25,497.00 L591.54,491.00 L591.82,485.00 L592.07,479.00 L592.30,473.00 L592.51,467.00 L592.70,461.00 L592.85,455.00 L592.98,449.00 L593.08,443.00 L593.17,437.00 L593.24,431.00 L593.28,425.00 L593.31,419.00 L593.31,413.00 L593.30,407.00 L593.26,401.00 L593.20,395.00 L593.13,389.00 L593.03,383.00 L592.91,377.00 L592.77,371.00 L592.61,365.00 L592.43,359.00 L592.23,353.00 L592.01,347.00 L591.76,341.00 L591.50,335.00 L591.22,329.00 L590.91,323.00 L590.59,317.00 L590.24,311.00 L589.88,305.00 L589.49,299.00 L589.08,293.00 L588.65,287.00 L588.21,281.00 L587.74,275.00 L587.25,269.00 L586.73,263.00 L586.20,257.00 L585.65,251.00 L585.08,245.00 L584.48,239.00 L583.87,233.00 L583.23,227.00 L582.58,221.00 L581.90,215.00 L581.20,209.00 L580.48,203.00 L579.74,197.00 L578.98,191.00 L578.20,185.00 L577.40,179.00 L576.58,173.00 L575.73,167.00 L574.87,161.00 L573.98,155.00 L573.08,149.00 L572.15,143.00 L571.20,137.00 L570.23,131.00 L569.24,125.00 L568.23,119.00 L567.20,113.00Z" fill="#ffffff"/>
<path d="M578.74,113.00 L579.79,119.00 L580.81,125.00 L581.81,131.00 L582.79,137.00 L583.75,143.00 L584.69,149.00 L585.61,155.00 L586.51,161.00 L587.38,167.00 L588.24,173.00 L589.07,179.00 L589.88,185.00 L590.67,191.00 L591.44,197.00 L592.19,203.00 L592.92,209.00 L593.62,215.00 L594.31,221.00 L594.97,227.00 L595.61,233.00 L596.23,239.00 L596.84,245.00 L597.42,251.00 L597.98,257.00 L598.52,263.00 L599.04,269.00 L599.54,275.00 L600.01,281.00 L600.47,287.00 L600.91,293.00 L601.32,299.00 L601.72,305.00 L602.09,311.00 L602.44,317.00 L602.78,323.00 L603.09,329.00 L603.38,335.00 L603.65,341.00 L603.90,347.00 L604.13,353.00 L604.34,359.00 L604.52,365.00 L604.69,371.00 L604.84,377.00 L604.96,383.00 L605.07,389.00 L605.16,395.00 L605.22,401.00 L605.26,407.00 L605.29,413.00 L605.29,419.00 L605.27,425.00 L605.24,431.00 L605.18,437.00 L605.10,443.00 L605.00,449.00 L604.88,455.00 L604.74,461.00 L604.61,467.00 L604.45,473.00 L604.28,479.00 L604.08,485.00 L603.86,491.00 L603.63,497.00 L603.37,503.00 L603.09,509.00 L602.79,515.00 L602.48,521.00 L602.14,527.00 L601.78,533.00 L601.40,539.00 L601.01,545.00 L600.59,551.00 L600.15,557.00 L599.69,563.00 L599.22,569.00 L598.72,575.00 L598.20,581.00 L597.67,587.00 L597.11,593.00 L596.53,599.00 L595.94,605.00 L595.32,611.00 L594.69,617.00 L594.04,623.00 L593.37,629.00 L592.67,635.00 L591.96,641.00 L591.23,647.00 L590.48,653.00 L589.71,659.00 L588.92,665.00 L588.11,671.00 L587.28,677.00 L586.43,683.00 L585.56,689.00 L584.67,695.00 L583.76,701.00 L582.83,707.00 L581.88,713.00 L580.91,719.00 L579.92,725.00 L578.91,731.00 L577.88,737.00 L576.83,743.00 L575.76,749.00 L574.68,755.00 L573.57,761.00 L572.45,767.00 L571.30,773.00 L570.14,779.00 L568.95,785.00 L567.75,791.00 L566.53,797.00 L565.29,803.00 L564.03,809.00 L565.97,809.00 L567.26,803.00 L568.53,797.00 L569.78,791.00 L571.00,785.00 L572.21,779.00 L573.41,773.00 L574.58,767.00 L575.73,761.00 L576.86,755.00 L577.98,749.00 L579.07,743.00 L580.14,737.00 L581.20,731.00 L582.24,725.00 L583.25,719.00 L584.25,713.00 L585.23,707.00 L586.19,701.00 L587.13,695.00 L588.05,689.00 L588.96,683.00 L589.84,677.00 L590.71,671.00 L591.55,665.00 L592.38,659.00 L593.18,653.00 L593.97,647.00 L594.74,641.00 L595.48,635.00 L596.21,629.00 L596.92,623.00 L597.61,617.00 L598.28,611.00 L598.92,605.00 L599.55,599.00 L600.16,593.00 L600.74,587.00 L601.31,581.00 L601.86,575.00 L602.38,569.00 L602.89,563.00 L603.38,557.00 L603.85,551.00 L604.29,545.00 L604.72,539.00 L605.13,533.00 L605.51,527.00 L605.88,521.00 L606.23,515.00 L606.55,509.00 L606.86,503.00 L607.15,497.00 L607.41,491.00 L607.66,485.00 L607.89,479.00 L608.09,473.00 L608.28,467.00 L608.44,461.00 L608.57,455.00 L608.67,449.00 L608.75,443.00 L608.81,437.00 L608.85,431.00 L608.87,425.00 L608.87,419.00 L608.85,413.00 L608.81,407.00 L608.75,401.00 L608.67,395.00 L608.57,389.00 L608.44,383.00 L608.30,377.00 L608.14,371.00 L607.95,365.00 L607.75,359.00 L607.52,353.00 L607.28,347.00 L607.01,341.00 L606.73,335.00 L606.42,329.00 L606.09,323.00 L605.74,317.00 L605.37,311.00 L604.98,305.00 L604.57,299.00 L604.14,293.00 L603.69,287.00 L603.21,281.00 L602.72,275.00 L602.20,269.00 L601.67,263.00 L601.11,257.00 L600.53,251.00 L599.93,245.00 L599.31,239.00 L598.67,233.00 L598.00,227.00 L597.32,221.00 L596.61,215.00 L595.89,209.00 L595.14,203.00 L594.37,197.00 L593.58,191.00 L592.77,185.00 L591.94,179.00 L591.08,173.00 L590.21,167.00 L589.31,161.00 L588.40,155.00 L587.46,149.00 L586.50,143.00 L585.52,137.00 L584.52,131.00 L583.49,125.00 L582.45,119.00 L581.38,113.00Z" fill="#ffff00"/>
<path d="M578.84,113.00 L579.90,119.00 L580.94,125.00 L581.95,131.00 L582.95,137.00 L583.92,143.00 L584.87,149.00 L585.80,155.00 L586.71,161.00 L587.60,167.00 L588.46,173.00 L589.31,179.00 L590.13,185.00 L590.94,191.00 L591.72,197.00 L592.48,203.00 L593.22,209.00 L593.94,215.00 L594.64,221.00 L595.31,227.00 L595.97,233.00 L596.60,239.00 L597.22,245.00 L597.81,251.00 L598.38,257.00 L598.93,263.00 L599.46,269.00 L599.97,275.00 L600.46,281.00 L600.93,287.00 L601.37,293.00 L601.80,299.00 L602.20,305.00 L602.59,311.00 L602.95,317.00 L603.29,323.00 L603.61,329.00 L603.91,335.00 L604.20,341.00 L604.46,347.00 L604.69,353.00 L604.91,359.00 L605.11,365.00 L605.29,371.00 L605.45,377.00 L605.58,383.00 L605.70,389.00 L605.79,395.00 L605.87,401.00 L605.92,407.00 L605.96,413.00 L605.97,419.00 L605.96,425.00 L605.94,431.00 L605.89,437.00 L605.82,443.00 L605.73,449.00 L605.62,455.00 L605.49,461.00 L605.37,467.00 L605.22,473.00 L605.05,479.00 L604.86,485.00 L604.66,491.00 L604.43,497.00 L604.18,503.00 L603.91,509.00 L603.62,515.00 L603.31,521.00 L602.99,527.00 L602.64,533.00 L602.27,539.00 L601.88,545.00 L601.47,551.00 L601.04,557.00 L600.59,563.00 L600.13,569.00 L599.64,575.00 L599.13,581.00 L598.60,587.00 L598.05,593.00 L597.49,599.00 L596.88,605.00 L596.25,611.00 L595.60,617.00 L594.94,623.00 L594.25,629.00 L593.54,635.00 L592.82,641.00 L592.07,647.00 L591.30,653.00 L590.52,659.00 L589.71,665.00 L588.89,671.00 L588.04,677.00 L587.18,683.00 L586.29,689.00 L585.39,695.00 L584.47,701.00 L583.54,707.00 L582.58,713.00 L581.61,719.00 L580.62,725.00 L579.60,731.00 L578.57,737.00 L577.52,743.00 L576.45,749.00 L575.36,755.00 L574.26,761.00 L573.13,767.00 L571.98,773.00 L570.81,779.00 L569.63,785.00 L568.42,791.00 L567.20,797.00 L565.96,803.00 L564.70,809.00 L565.31,809.00 L566.59,803.00 L567.86,797.00 L569.10,791.00 L570.33,785.00 L571.54,779.00 L572.73,773.00 L573.90,767.00 L575.05,761.00 L576.18,755.00 L577.29,749.00 L578.38,743.00 L579.45,737.00 L580.50,731.00 L581.54,725.00 L582.55,719.00 L583.55,713.00 L584.52,707.00 L585.48,701.00 L586.41,695.00 L587.32,689.00 L588.21,683.00 L589.08,677.00 L589.93,671.00 L590.76,665.00 L591.57,659.00 L592.36,653.00 L593.13,647.00 L593.88,641.00 L594.61,635.00 L595.33,629.00 L596.02,623.00 L596.69,617.00 L597.35,611.00 L597.98,605.00 L598.60,599.00 L599.21,593.00 L599.81,587.00 L600.38,581.00 L600.94,575.00 L601.48,569.00 L601.99,563.00 L602.49,557.00 L602.96,551.00 L603.42,545.00 L603.86,539.00 L604.27,533.00 L604.67,527.00 L605.04,521.00 L605.40,515.00 L605.73,509.00 L606.05,503.00 L606.35,497.00 L606.62,491.00 L606.88,485.00 L607.11,479.00 L607.33,473.00 L607.52,467.00 L607.69,461.00 L607.83,455.00 L607.94,449.00 L608.03,443.00 L608.10,437.00 L608.15,431.00 L608.18,425.00 L608.19,419.00 L608.18,413.00 L608.15,407.00 L608.10,401.00 L608.03,395.00 L607.94,389.00 L607.83,383.00 L607.69,377.00 L607.54,371.00 L607.37,365.00 L607.17,359.00 L606.96,353.00 L606.72,347.00 L606.47,341.00 L606.19,335.00 L605.89,329.00 L605.57,323.00 L605.24,317.00 L604.88,311.00 L604.50,305.00 L604.10,299.00 L603.67,293.00 L603.23,287.00 L602.77,281.00 L602.28,275.00 L601.78,269.00 L601.25,263.00 L600.71,257.00 L600.14,251.00 L599.55,245.00 L598.94,239.00 L598.31,233.00 L597.66,227.00 L596.99,221.00 L596.30,215.00 L595.58,209.00 L594.85,203.00 L594.09,197.00 L593.31,191.00 L592.51,185.00 L591.69,179.00 L590.85,173.00 L589.99,167.00 L589.11,161.00 L588.20,155.00 L587.28,149.00 L586.33,143.00 L585.36,137.00 L584.38,131.00 L583.36,125.00 L582.33,119.00 L581.28,113.00Z" fill="#ffffff"/>
<path d="M592.87,113.00 L593.91,119.00 L594.93,125.00 L595.94,131.00 L596.92,137.00 L597.88,143.00 L598.82,149.00 L599.74,155.00 L600.64,161.00 L601.52,167.00 L602.37,173.00 L603.21,179.00 L604.03,185.00 L604.82,191.00 L605.60,197.00 L606.35,203.00 L607.08,209.00 L607.80,215.00 L608.49,221.00 L609.16,227.00 L609.81,233.00 L610.44,239.00 L611.05,245.00 L611.64,251.00 L612.21,257.00 L612.76,263.00 L613.30,269.00 L613.81,275.00 L614.30,281.00 L614.76,287.00 L615.21,293.00 L615.64,299.00 L616.05,305.00 L616.44,311.00 L616.80,317.00 L617.15,323.00 L617.48,329.00 L617.78,335.00 L618.07,341.00 L618.33,347.00 L618.58,353.00 L618.80,359.00 L619.01,365.00 L619.19,371.00 L619.35,377.00 L619.50,383.00 L619.62,389.00 L619.72,395.00 L619.80,401.00 L619.87,407.00 L619.91,413.00 L619.93,419.00 L619.93,425.00 L619.91,431.00 L619.87,437.00 L619.81,443.00 L619.74,449.00 L619.64,455.00 L619.52,461.00 L619.40,467.00 L619.27,473.00 L619.11,479.00 L618.93,485.00 L618.74,491.00 L618.52,497.00 L618.28,503.00 L618.03,509.00 L617.75,515.00 L617.45,521.00 L617.14,527.00 L616.80,533.00 L616.45,539.00 L616.07,545.00 L615.67,551.00 L615.26,557.00 L614.82,563.00 L614.36,569.00 L613.89,575.00 L613.39,581.00 L612.88,587.00 L612.34,593.00 L611.79,599.00 L611.21,605.00 L610.62,611.00 L610.01,617.00 L609.38,623.00 L608.73,629.00 L608.05,635.00 L607.36,641.00 L606.65,647.00 L605.92,653.00 L605.17,659.00 L604.40,665.00 L603.61,671.00 L602.80,677.00 L601.97,683.00 L601.13,689.00 L600.26,695.00 L599.37,701.00 L598.46,707.00 L597.52,713.00 L596.57,719.00 L595.60,725.00 L594.61,731.00 L593.60,737.00 L592.57,743.00 L591.52,749.00 L590.45,755.00 L589.37,761.00 L588.26,767.00 L587.13,773.00 L585.99,779.00 L584.82,785.00 L583.63,791.00 L582.43,797.00 L581.20,803.00 L579.96,809.00 L581.90,809.00 L583.17,803.00 L584.42,797.00 L585.66,791.00 L586.87,785.00 L588.06,779.00 L589.23,773.00 L590.39,767.00 L591.52,761.00 L592.64,755.00 L593.73,749.00 L594.81,743.00 L595.87,737.00 L596.90,731.00 L597.92,725.00 L598.92,719.00 L599.89,713.00 L600.85,707.00 L601.79,701.00 L602.71,695.00 L603.62,689.00 L604.50,683.00 L605.37,677.00 L606.21,671.00 L607.03,665.00 L607.84,659.00 L608.63,653.00 L609.39,647.00 L610.14,641.00 L610.86,635.00 L611.57,629.00 L612.26,623.00 L612.92,617.00 L613.57,611.00 L614.20,605.00 L614.81,599.00 L615.39,593.00 L615.96,587.00 L616.50,581.00 L617.03,575.00 L617.53,569.00 L618.02,563.00 L618.48,557.00 L618.93,551.00 L619.35,545.00 L619.76,539.00 L620.15,533.00 L620.51,527.00 L620.86,521.00 L621.18,515.00 L621.49,509.00 L621.78,503.00 L622.04,497.00 L622.29,491.00 L622.51,485.00 L622.72,479.00 L622.91,473.00 L623.07,467.00 L623.22,461.00 L623.32,455.00 L623.40,449.00 L623.46,443.00 L623.51,437.00 L623.53,431.00 L623.53,425.00 L623.51,419.00 L623.47,413.00 L623.41,407.00 L623.33,401.00 L623.23,395.00 L623.11,389.00 L622.97,383.00 L622.81,377.00 L622.63,371.00 L622.43,365.00 L622.21,359.00 L621.97,353.00 L621.71,347.00 L621.43,341.00 L621.13,335.00 L620.81,329.00 L620.46,323.00 L620.10,317.00 L619.72,311.00 L619.31,305.00 L618.89,299.00 L618.44,293.00 L617.98,287.00 L617.49,281.00 L616.99,275.00 L616.46,269.00 L615.91,263.00 L615.35,257.00 L614.76,251.00 L614.15,245.00 L613.52,239.00 L612.87,233.00 L612.20,227.00 L611.50,221.00 L610.79,215.00 L610.06,209.00 L609.30,203.00 L608.53,197.00 L607.73,191.00 L606.91,185.00 L606.08,179.00 L605.22,173.00 L604.34,167.00 L603.44,161.00 L602.52,155.00 L601.58,149.00 L600.62,143.00 L599.64,137.00 L598.64,131.00 L597.62,125.00 L596.57,119.00 L595.51,113.00Z" fill="#ffff00"/>
<path d="M592.97,113.00 L594.03,119.00 L595.06,125.00 L596.08,131.00 L597.07,137.00 L598.04,143.00 L599.00,149.00 L599.93,155.00 L600.84,161.00 L601.73,167.00 L602.60,173.00 L603.45,179.00 L604.28,185.00 L605.09,191.00 L605.88,197.00 L606.64,203.00 L607.39,209.00 L608.11,215.00 L608.82,221.00 L609.50,227.00 L610.17,233.00 L610.81,239.00 L611.43,245.00 L612.04,251.00 L612.62,257.00 L613.18,263.00 L613.72,269.00 L614.24,275.00 L614.74,281.00 L615.22,287.00 L615.68,293.00 L616.12,299.00 L616.53,305.00 L616.93,311.00 L617.31,317.00 L617.66,323.00 L618.00,329.00 L618.32,335.00 L618.61,341.00 L618.89,347.00 L619.14,353.00 L619.38,359.00 L619.59,365.00 L619.79,371.00 L619.96,377.00 L620.11,383.00 L620.25,389.00 L620.36,395.00 L620.45,401.00 L620.52,407.00 L620.58,413.00 L620.61,419.00 L620.62,425.00 L620.61,431.00 L620.58,437.00 L620.53,443.00 L620.47,449.00 L620.38,455.00 L620.27,461.00 L620.16,467.00 L620.03,473.00 L619.89,479.00 L619.72,485.00 L619.53,491.00 L619.32,497.00 L619.10,503.00 L618.85,509.00 L618.58,515.00 L618.29,521.00 L617.98,527.00 L617.66,533.00 L617.31,539.00 L616.94,545.00 L616.55,551.00 L616.15,557.00 L615.72,563.00 L615.27,569.00 L614.81,575.00 L614.32,581.00 L613.81,587.00 L613.29,593.00 L612.74,599.00 L612.16,605.00 L611.55,611.00 L610.92,617.00 L610.28,623.00 L609.61,629.00 L608.92,635.00 L608.22,641.00 L607.49,647.00 L606.75,653.00 L605.98,659.00 L605.20,665.00 L604.39,671.00 L603.57,677.00 L602.72,683.00 L601.86,689.00 L600.98,695.00 L600.08,701.00 L599.16,707.00 L598.23,713.00 L597.27,719.00 L596.30,725.00 L595.31,731.00 L594.30,737.00 L593.26,743.00 L592.21,749.00 L591.14,755.00 L590.05,761.00 L588.94,767.00 L587.81,773.00 L586.66,779.00 L585.49,785.00 L584.31,791.00 L583.10,797.00 L581.87,803.00 L580.62,809.00 L581.24,809.00 L582.51,803.00 L583.76,797.00 L584.98,791.00 L586.19,785.00 L587.39,779.00 L588.56,773.00 L589.71,767.00 L590.84,761.00 L591.95,755.00 L593.04,749.00 L594.12,743.00 L595.17,737.00 L596.21,731.00 L597.22,725.00 L598.22,719.00 L599.19,713.00 L600.15,707.00 L601.08,701.00 L601.99,695.00 L602.88,689.00 L603.75,683.00 L604.60,677.00 L605.43,671.00 L606.24,665.00 L607.03,659.00 L607.80,653.00 L608.55,647.00 L609.28,641.00 L610.00,635.00 L610.69,629.00 L611.36,623.00 L612.01,617.00 L612.64,611.00 L613.26,605.00 L613.85,599.00 L614.45,593.00 L615.02,587.00 L615.57,581.00 L616.11,575.00 L616.62,569.00 L617.12,563.00 L617.59,557.00 L618.05,551.00 L618.48,545.00 L618.90,539.00 L619.29,533.00 L619.67,527.00 L620.02,521.00 L620.35,515.00 L620.67,509.00 L620.96,503.00 L621.24,497.00 L621.49,491.00 L621.73,485.00 L621.94,479.00 L622.14,473.00 L622.31,467.00 L622.47,461.00 L622.58,455.00 L622.67,449.00 L622.74,443.00 L622.80,437.00 L622.83,431.00 L622.84,425.00 L622.83,419.00 L622.80,413.00 L622.75,407.00 L622.69,401.00 L622.60,395.00 L622.49,389.00 L622.36,383.00 L622.21,377.00 L622.04,371.00 L621.85,365.00 L621.64,359.00 L621.41,353.00 L621.16,347.00 L620.88,341.00 L620.59,335.00 L620.28,329.00 L619.95,323.00 L619.59,317.00 L619.22,311.00 L618.83,305.00 L618.41,299.00 L617.98,293.00 L617.53,287.00 L617.05,281.00 L616.55,275.00 L616.04,269.00 L615.50,263.00 L614.94,257.00 L614.37,251.00 L613.77,245.00 L613.15,239.00 L612.51,233.00 L611.85,227.00 L611.17,221.00 L610.47,215.00 L609.75,209.00 L609.01,203.00 L608.25,197.00 L607.46,191.00 L606.66,185.00 L605.84,179.00 L604.99,173.00 L604.13,167.00 L603.24,161.00 L602.33,155.00 L601.41,149.00 L600.46,143.00 L599.49,137.00 L598.50,131.00 L597.49,125.00 L596.46,119.00 L595.41,113.00Z" fill="#ffffff"/>
<linearGradient id="fade14" gradientUnits="userSpaceOnUse" x1="0" y1="420" x2="0" y2="250"><stop offset="0" stop-color="#ffff00"/><stop offset="1" stop-color="#ff9a00"/></linearGradient>
<path d="M607.66,113.00 L608.70,119.00 L609.72,125.00 L610.72,131.00 L611.70,137.00 L612.66,143.00 L613.61,149.00 L614.53,155.00 L615.43,161.00 L616.31,167.00 L617.17,173.00 L618.01,179.00 L618.83,185.00 L619.63,191.00 L620.41,197.00 L621.17,203.00 L621.92,209.00 L622.64,215.00 L623.34,221.00 L624.02,227.00 L624.68,233.00 L625.32,239.00 L625.90,245.00 L626.44,251.00 L626.97,257.00 L627.47,263.00 L627.96,269.00 L628.43,275.00 L628.87,281.00 L629.30,287.00 L629.70,293.00 L630.09,299.00 L630.46,305.00 L630.82,311.00 L631.16,317.00 L631.47,323.00 L631.77,329.00 L632.05,335.00 L632.30,341.00 L632.54,347.00 L632.75,353.00 L632.95,359.00 L633.13,365.00 L633.28,371.00 L633.42,377.00 L633.53,383.00 L633.63,389.00 L633.71,395.00 L633.77,401.00 L633.83,407.00 L633.87,413.00 L633.89,419.00 L633.89,425.00 L633.88,431.00 L633.84,437.00 L633.78,443.00 L633.70,449.00 L633.60,455.00 L633.48,461.00 L633.37,467.00 L633.25,473.00 L633.10,479.00 L632.93,485.00 L632.74,491.00 L632.53,497.00 L632.31,503.00 L632.06,509.00 L631.79,515.00 L631.50,521.00 L631.19,527.00 L630.86,533.00 L630.52,539.00 L630.15,545.00 L629.76,551.00 L629.35,557.00 L628.92,563.00 L628.47,569.00 L628.01,575.00 L627.52,581.00 L627.01,587.00 L626.48,593.00 L625.93,599.00 L625.37,605.00 L624.78,611.00 L624.17,617.00 L623.54,623.00 L622.90,629.00 L622.23,635.00 L621.54,641.00 L620.83,647.00 L620.11,653.00 L619.36,659.00 L618.59,665.00 L617.81,671.00 L617.00,677.00 L616.17,683.00 L615.32,689.00 L614.46,695.00 L613.57,701.00 L612.66,707.00 L611.73,713.00 L610.78,719.00 L609.81,725.00 L608.82,731.00 L607.80,737.00 L606.77,743.00 L605.72,749.00 L604.65,755.00 L603.56,761.00 L602.45,767.00 L601.32,773.00 L600.17,779.00 L599.00,785.00 L597.81,791.00 L596.60,797.00 L595.36,803.00 L594.11,809.00 L595.95,809.00 L597.22,803.00 L598.47,797.00 L599.69,791.00 L600.90,785.00 L602.09,779.00 L603.25,773.00 L604.40,767.00 L605.53,761.00 L606.63,755.00 L607.72,749.00 L608.79,743.00 L609.83,737.00 L610.86,731.00 L611.86,725.00 L612.85,719.00 L613.82,713.00 L614.76,707.00 L615.69,701.00 L616.60,695.00 L617.49,689.00 L618.36,683.00 L619.21,677.00 L620.04,671.00 L620.85,665.00 L621.64,659.00 L622.41,653.00 L623.16,647.00 L623.89,641.00 L624.60,635.00 L625.30,629.00 L625.97,623.00 L626.62,617.00 L627.25,611.00 L627.86,605.00 L628.45,599.00 L629.02,593.00 L629.57,587.00 L630.09,581.00 L630.60,575.00 L631.09,569.00 L631.56,563.00 L632.01,557.00 L632.44,551.00 L632.85,545.00 L633.24,539.00 L633.61,533.00 L633.96,527.00 L634.29,521.00 L634.60,515.00 L634.89,509.00 L635.16,503.00 L635.41,497.00 L635.64,491.00 L635.84,485.00 L636.03,479.00 L636.20,473.00 L636.35,467.00 L636.48,461.00 L636.56,455.00 L636.62,449.00 L636.66,443.00 L636.68,437.00 L636.68,431.00 L636.66,425.00 L636.62,419.00 L636.56,413.00 L636.48,407.00 L636.37,401.00 L636.23,395.00 L636.07,389.00 L635.88,383.00 L635.67,377.00 L635.45,371.00 L635.20,365.00 L634.94,359.00 L634.65,353.00 L634.34,347.00 L634.02,341.00 L633.67,335.00 L633.31,329.00 L632.92,323.00 L632.51,317.00 L632.09,311.00 L631.64,305.00 L631.17,299.00 L630.68,293.00 L630.16,287.00 L629.63,281.00 L629.07,275.00 L628.49,269.00 L627.90,263.00 L627.28,257.00 L626.64,251.00 L625.99,245.00 L625.32,239.00 L624.68,233.00 L624.02,227.00 L623.34,221.00 L622.64,215.00 L621.92,209.00 L621.17,203.00 L620.41,197.00 L619.63,191.00 L618.83,185.00 L618.01,179.00 L617.17,173.00 L616.31,167.00 L615.43,161.00 L614.53,155.00 L613.61,149.00 L612.66,143.00 L611.70,137.00 L610.72,131.00 L609.72,125.00 L608.70,119.00 L607.66,113.00Z" fill="url(#fade14)"/>
<path d="M607.66,113.00 L608.70,119.00 L609.72,125.00 L610.72,131.00 L611.70,137.00 L612.66,143.00 L613.61,149.00 L614.53,155.00 L615.43,161.00 L616.31,167.00 L617.17,173.00 L618.01,179.00 L618.83,185.00 L619.63,191.00 L620.41,197.00 L621.17,203.00 L621.92,209.00 L622.64,215.00 L623.34,221.00 L624.02,227.00 L624.68,233.00 L625.32,239.00 L625.94,245.00 L626.54,251.00 L627.12,257.00 L627.69,263.00 L628.23,269.00 L628.75,275.00 L629.25,281.00 L629.73,287.00 L630.19,293.00 L630.63,299.00 L631.02,305.00 L631.38,311.00 L631.72,317.00 L632.04,323.00 L632.33,329.00 L632.61,335.00 L632.87,341.00 L633.11,347.00 L633.33,353.00 L633.53,359.00 L633.71,365.00 L633.87,371.00 L634.01,377.00 L634.13,383.00 L634.23,389.00 L634.30,395.00 L634.37,401.00 L634.42,407.00 L634.45,413.00 L634.46,419.00 L634.45,425.00 L634.42,431.00 L634.38,437.00 L634.31,443.00 L634.22,449.00 L634.11,455.00 L633.98,461.00 L633.88,467.00 L633.76,473.00 L633.62,479.00 L633.46,485.00 L633.29,491.00 L633.09,497.00 L632.87,503.00 L632.63,509.00 L632.37,515.00 L632.09,521.00 L631.79,527.00 L631.47,533.00 L631.13,539.00 L630.77,545.00 L630.39,551.00 L629.99,557.00 L629.57,563.00 L629.13,569.00 L628.67,575.00 L628.19,581.00 L627.69,587.00 L627.17,593.00 L626.63,599.00 L626.06,605.00 L625.46,611.00 L624.85,617.00 L624.21,623.00 L623.56,629.00 L622.88,635.00 L622.19,641.00 L621.47,647.00 L620.73,653.00 L619.98,659.00 L619.20,665.00 L618.41,671.00 L617.59,677.00 L616.75,683.00 L615.90,689.00 L615.02,695.00 L614.13,701.00 L613.22,707.00 L612.29,713.00 L611.34,719.00 L610.38,725.00 L609.39,731.00 L608.38,737.00 L607.35,743.00 L606.30,749.00 L605.24,755.00 L604.15,761.00 L603.04,767.00 L601.91,773.00 L600.77,779.00 L599.60,785.00 L598.41,791.00 L597.20,797.00 L595.97,803.00 L594.73,809.00 L595.34,809.00 L596.61,803.00 L597.86,797.00 L599.09,791.00 L600.30,785.00 L601.49,779.00 L602.66,773.00 L603.81,767.00 L604.94,761.00 L606.05,755.00 L607.14,749.00 L608.21,743.00 L609.26,737.00 L610.29,731.00 L611.30,725.00 L612.29,719.00 L613.26,713.00 L614.20,707.00 L615.13,701.00 L616.04,695.00 L616.92,689.00 L617.78,683.00 L618.62,677.00 L619.44,671.00 L620.25,665.00 L621.03,659.00 L621.79,653.00 L622.53,647.00 L623.25,641.00 L623.95,635.00 L624.63,629.00 L625.30,623.00 L625.94,617.00 L626.56,611.00 L627.16,605.00 L627.75,599.00 L628.32,593.00 L628.88,587.00 L629.42,581.00 L629.94,575.00 L630.44,569.00 L630.91,563.00 L631.37,557.00 L631.81,551.00 L632.23,545.00 L632.63,539.00 L633.00,533.00 L633.36,527.00 L633.70,521.00 L634.02,515.00 L634.32,509.00 L634.60,503.00 L634.85,497.00 L635.09,491.00 L635.31,485.00 L635.51,479.00 L635.69,473.00 L635.84,467.00 L635.98,461.00 L636.05,455.00 L636.10,449.00 L636.13,443.00 L636.14,437.00 L636.13,431.00 L636.10,425.00 L636.05,419.00 L635.98,413.00 L635.89,407.00 L635.78,401.00 L635.64,395.00 L635.47,389.00 L635.29,383.00 L635.09,377.00 L634.86,371.00 L634.62,365.00 L634.36,359.00 L634.07,353.00 L633.77,347.00 L633.45,341.00 L633.10,335.00 L632.74,329.00 L632.36,323.00 L631.95,317.00 L631.53,311.00 L631.09,305.00 L630.63,299.00 L630.19,293.00 L629.73,287.00 L629.25,281.00 L628.75,275.00 L628.23,269.00 L627.69,263.00 L627.12,257.00 L626.54,251.00 L625.94,245.00 L625.32,239.00 L624.68,233.00 L624.02,227.00 L623.34,221.00 L622.64,215.00 L621.92,209.00 L621.17,203.00 L620.41,197.00 L619.63,191.00 L618.83,185.00 L618.01,179.00 L617.17,173.00 L616.31,167.00 L615.43,161.00 L614.53,155.00 L613.61,149.00 L612.66,143.00 L611.70,137.00 L610.72,131.00 L609.72,125.00 L608.70,119.00 L607.66,113.00Z" fill="#ffffff"/>
</g>
<rect x="310.0" y="113.0" width="366.0" height="696.0" fill="none" stroke="#000" stroke-width="1.6"/>
<line x1="310.00" y1="809.00" x2="310.00" y2="815.80" stroke="#000" stroke-width="1.6"/>
<text x="306.89" y="832.00" font-size="10.6" textLength="6.22" lengthAdjust="spacingAndGlyphs">0</text>
<line x1="353.47" y1="809.00" x2="353.47" y2="815.80" stroke="#000" stroke-width="1.6"/>
<text x="344.08" y="832.00" font-size="10.6" textLength="18.66" lengthAdjust="spacingAndGlyphs">250</text>
<line x1="396.94" y1="809.00" x2="396.94" y2="815.80" stroke="#000" stroke-width="1.6"/>
<text x="387.60" y="832.00" font-size="10.6" textLength="18.66" lengthAdjust="spacingAndGlyphs">500</text>
<line x1="440.40" y1="809.00" x2="440.40" y2="815.80" stroke="#000" stroke-width="1.6"/>
<text x="431.01" y="832.00" font-size="10.6" textLength="18.66" lengthAdjust="spacingAndGlyphs">750</text>
<line x1="483.87" y1="809.00" x2="483.87" y2="815.80" stroke="#000" stroke-width="1.6"/>
<text x="471.23" y="832.00" font-size="10.6" textLength="24.88" lengthAdjust="spacingAndGlyphs">1000</text>
<line x1="527.34" y1="809.00" x2="527.34" y2="815.80" stroke="#000" stroke-width="1.6"/>
<text x="514.69" y="832.00" font-size="10.6" textLength="24.88" lengthAdjust="spacingAndGlyphs">1250</text>
<line x1="570.81" y1="809.00" x2="570.81" y2="815.80" stroke="#000" stroke-width="1.6"/>
<text x="558.16" y="832.00" font-size="10.6" textLength="24.88" lengthAdjust="spacingAndGlyphs">1500</text>
<line x1="614.28" y1="809.00" x2="614.28" y2="815.80" stroke="#000" stroke-width="1.6"/>
<text x="601.63" y="832.00" font-size="10.6" textLength="24.88" lengthAdjust="spacingAndGlyphs">1750</text>
<line x1="657.74" y1="809.00" x2="657.74" y2="815.80" stroke="#000" stroke-width="1.6"/>
<text x="645.24" y="832.00" font-size="10.6" textLength="24.88" lengthAdjust="spacingAndGlyphs">2000</text>
<line x1="303.20" y1="809.00" x2="310.00" y2="809.00" stroke="#000" stroke-width="1.6"/>
<text x="288.82" y="812.80" font-size="10.6" textLength="6.22" lengthAdjust="spacingAndGlyphs">0</text>
<line x1="303.20" y1="722.00" x2="310.00" y2="722.00" stroke="#000" stroke-width="1.6"/>
<text x="276.38" y="725.80" font-size="10.6" textLength="18.66" lengthAdjust="spacingAndGlyphs">500</text>
<line x1="303.20" y1="635.00" x2="310.00" y2="635.00" stroke="#000" stroke-width="1.6"/>
<text x="270.16" y="638.80" font-size="10.6" textLength="24.88" lengthAdjust="spacingAndGlyphs">1000</text>
<line x1="303.20" y1="548.00" x2="310.00" y2="548.00" stroke="#000" stroke-width="1.6"/>
<text x="270.16" y="551.80" font-size="10.6" textLength="24.88" lengthAdjust="spacingAndGlyphs">1500</text>
<line x1="303.20" y1="461.00" x2="310.00" y2="461.00" stroke="#000" stroke-width="1.6"/>
<text x="270.16" y="464.80" font-size="10.6" textLength="24.88" lengthAdjust="spacingAndGlyphs">2000</text>
<line x1="303.20" y1="374.00" x2="310.00" y2="374.00" stroke="#000" stroke-width="1.6"/>
<text x="270.16" y="377.80" font-size="10.6" textLength="24.88" lengthAdjust="spacingAndGlyphs">2500</text>
<line x1="303.20" y1="287.00" x2="310.00" y2="287.00" stroke="#000" stroke-width="1.6"/>
<text x="270.16" y="290.80" font-size="10.6" textLength="24.88" lengthAdjust="spacingAndGlyphs">3000</text>
<line x1="303.20" y1="200.00" x2="310.00" y2="200.00" stroke="#000" stroke-width="1.6"/>
<text x="270.16" y="203.80" font-size="10.6" textLength="24.88" lengthAdjust="spacingAndGlyphs">3500</text>
<line x1="303.20" y1="113.00" x2="310.00" y2="113.00" stroke="#000" stroke-width="1.6"/>
<text x="270.16" y="116.80" font-size="10.6" textLength="24.88" lengthAdjust="spacingAndGlyphs">4000</text>
<text x="489.76" y="849.60" font-size="10.6" textLength="7.46" lengthAdjust="spacingAndGlyphs">X</text>
<g transform="translate(257.80,460.80) rotate(-90)"><text x="-4.01" y="0" font-size="10.6" textLength="8.03" lengthAdjust="spacingAndGlyphs">Y</text></g>
<line x1="493.40" y1="106.20" x2="493.40" y2="816.70" stroke="#0000ff" stroke-width="1.0"/>
<line x1="305.50" y1="461.30" x2="681.00" y2="461.30" stroke="#0000ff" stroke-width="1.0"/>
<rect x="712.0" y="113.0" width="35.0" height="696.0" fill="url(#hot)"/>
<rect x="712.0" y="113.0" width="35.0" height="696.0" fill="none" stroke="#000" stroke-width="1.6"/>
<line x1="747.00" y1="713.88" x2="753.80" y2="713.88" stroke="#000" stroke-width="1.6"/>
<text x="762.43" y="717.68" font-size="10.6" textLength="18.66" lengthAdjust="spacingAndGlyphs">600</text>
<line x1="747.00" y1="568.11" x2="753.80" y2="568.11" stroke="#000" stroke-width="1.6"/>
<text x="762.51" y="571.91" font-size="10.6" textLength="18.66" lengthAdjust="spacingAndGlyphs">800</text>
<line x1="747.00" y1="422.33" x2="753.80" y2="422.33" stroke="#000" stroke-width="1.6"/>
<text x="762.15" y="426.13" font-size="10.6" textLength="24.88" lengthAdjust="spacingAndGlyphs">1000</text>
<line x1="747.00" y1="276.56" x2="753.80" y2="276.56" stroke="#000" stroke-width="1.6"/>
<text x="762.15" y="280.36" font-size="10.6" textLength="24.88" lengthAdjust="spacingAndGlyphs">1200</text>
<line x1="747.00" y1="130.78" x2="753.80" y2="130.78" stroke="#000" stroke-width="1.6"/>
<text x="762.15" y="134.58" font-size="10.6" textLength="24.88" lengthAdjust="spacingAndGlyphs">1400</text>
<path d="M911.80,233.00 L930.10,233.00 L930.10,119.20 L935.90,119.20 L935.90,136.80 L941.00,136.80 L941.00,147.80 L946.90,147.80 L946.90,150.70 L952.90,150.70 L952.90,153.80 L958.00,153.80 L958.00,157.70 L964.10,157.70 L964.10,161.80 L969.10,161.80 L969.10,170.75 L975.00,170.75 L975.00,204.90 L981.10,204.90 L981.10,233.00 L1185.00,233.00" fill="none" stroke="#0000ff" stroke-width="1.5" stroke-linejoin="miter"/>
<rect x="911.0" y="113.0" width="274.0" height="120.0" fill="none" stroke="#000" stroke-width="1.6"/>
<line x1="904.20" y1="233.00" x2="911.00" y2="233.00" stroke="#000" stroke-width="1.6"/>
<text x="890.42" y="236.80" font-size="10.6" textLength="6.22" lengthAdjust="spacingAndGlyphs">0</text>
<line x1="904.20" y1="199.80" x2="911.00" y2="199.80" stroke="#000" stroke-width="1.6"/>
<text x="890.54" y="203.60" font-size="10.6" textLength="6.22" lengthAdjust="spacingAndGlyphs">2</text>
<line x1="904.20" y1="166.60" x2="911.00" y2="166.60" stroke="#000" stroke-width="1.6"/>
<text x="890.31" y="170.40" font-size="10.6" textLength="6.22" lengthAdjust="spacingAndGlyphs">4</text>
<line x1="904.20" y1="133.40" x2="911.00" y2="133.40" stroke="#000" stroke-width="1.6"/>
<text x="890.47" y="137.20" font-size="10.6" textLength="6.22" lengthAdjust="spacingAndGlyphs">6</text>
<line x1="933.80" y1="233.00" x2="933.80" y2="239.80" stroke="#000" stroke-width="1.6"/>
<text x="930.69" y="256.00" font-size="10.6" textLength="6.22" lengthAdjust="spacingAndGlyphs">0</text>
<line x1="973.25" y1="233.00" x2="973.25" y2="239.80" stroke="#000" stroke-width="1.6"/>
<line x1="1012.70" y1="233.00" x2="1012.70" y2="239.80" stroke="#000" stroke-width="1.6"/>
<text x="997.09" y="256.00" font-size="10.6" textLength="31.10" lengthAdjust="spacingAndGlyphs">20000</text>
<line x1="1052.15" y1="233.00" x2="1052.15" y2="239.80" stroke="#000" stroke-width="1.6"/>
<line x1="1091.60" y1="233.00" x2="1091.60" y2="239.80" stroke="#000" stroke-width="1.6"/>
<text x="1076.14" y="256.00" font-size="10.6" textLength="31.10" lengthAdjust="spacingAndGlyphs">40000</text>
<line x1="1131.05" y1="233.00" x2="1131.05" y2="239.80" stroke="#000" stroke-width="1.6"/>
<line x1="1170.50" y1="233.00" x2="1170.50" y2="239.80" stroke="#000" stroke-width="1.6"/>
<text x="1154.89" y="256.00" font-size="10.6" textLength="31.10" lengthAdjust="spacingAndGlyphs">60000</text>
<text x="1031.69" y="273.70" font-size="10.6" textLength="32.95" lengthAdjust="spacingAndGlyphs">counts</text>
<g transform="translate(877.80,173.80) rotate(-90)"><text x="-36.41" y="0" font-size="10.6" textLength="72.03" lengthAdjust="spacingAndGlyphs">log frequency</text></g>
<g transform="translate(1194.50,174.50) rotate(90)"><text x="-47.40" y="0" font-size="10.6" textLength="94.71" lengthAdjust="spacingAndGlyphs">histogram (detail)</text></g>
<path d="M911.80,405.00 L925.00,405.00 L925.00,291.10 L930.00,291.10 L930.00,304.80 L936.20,304.80 L936.20,318.80 L941.20,318.80 L941.20,322.80 L947.20,322.80 L947.20,325.90 L953.10,325.90 L953.10,329.70 L958.10,329.70 L958.10,335.00 L963.90,335.00 L963.90,347.00 L968.70,347.00 L968.70,405.00 L1185.00,405.00" fill="none" stroke="#0000ff" stroke-width="1.5"/>
<rect x="911.0" y="285.0" width="274.0" height="120.0" fill="none" stroke="#000" stroke-width="1.6"/>
<line x1="904.20" y1="405.00" x2="911.00" y2="405.00" stroke="#000" stroke-width="1.6"/>
<text x="890.42" y="408.80" font-size="10.6" textLength="6.22" lengthAdjust="spacingAndGlyphs">0</text>
<line x1="904.20" y1="371.80" x2="911.00" y2="371.80" stroke="#000" stroke-width="1.6"/>
<text x="890.54" y="375.60" font-size="10.6" textLength="6.22" lengthAdjust="spacingAndGlyphs">2</text>
<line x1="904.20" y1="338.60" x2="911.00" y2="338.60" stroke="#000" stroke-width="1.6"/>
<text x="890.31" y="342.40" font-size="10.6" textLength="6.22" lengthAdjust="spacingAndGlyphs">4</text>
<line x1="904.20" y1="305.40" x2="911.00" y2="305.40" stroke="#000" stroke-width="1.6"/>
<text x="890.47" y="309.20" font-size="10.6" textLength="6.22" lengthAdjust="spacingAndGlyphs">6</text>
<line x1="928.70" y1="405.00" x2="928.70" y2="411.80" stroke="#000" stroke-width="1.6"/>
<text x="925.59" y="428.00" font-size="10.6" textLength="6.22" lengthAdjust="spacingAndGlyphs">0</text>
<line x1="966.05" y1="405.00" x2="966.05" y2="411.80" stroke="#000" stroke-width="1.6"/>
<line x1="1003.40" y1="405.00" x2="1003.40" y2="411.80" stroke="#000" stroke-width="1.6"/>
<text x="987.79" y="428.00" font-size="10.6" textLength="31.10" lengthAdjust="spacingAndGlyphs">20000</text>
<line x1="1040.75" y1="405.00" x2="1040.75" y2="411.80" stroke="#000" stroke-width="1.6"/>
<line x1="1078.10" y1="405.00" x2="1078.10" y2="411.80" stroke="#000" stroke-width="1.6"/>
<text x="1062.64" y="428.00" font-size="10.6" textLength="31.10" lengthAdjust="spacingAndGlyphs">40000</text>
<line x1="1115.45" y1="405.00" x2="1115.45" y2="411.80" stroke="#000" stroke-width="1.6"/>
<line x1="1152.80" y1="405.00" x2="1152.80" y2="411.80" stroke="#000" stroke-width="1.6"/>
<text x="1137.19" y="428.00" font-size="10.6" textLength="31.10" lengthAdjust="spacingAndGlyphs">60000</text>
<text x="1031.69" y="445.70" font-size="10.6" textLength="32.95" lengthAdjust="spacingAndGlyphs">counts</text>
<g transform="translate(877.80,345.80) rotate(-90)"><text x="-36.41" y="0" font-size="10.6" textLength="72.03" lengthAdjust="spacingAndGlyphs">log frequency</text></g>
<g transform="translate(1194.50,349.50) rotate(90)"><text x="-40.50" y="0" font-size="10.6" textLength="80.91" lengthAdjust="spacingAndGlyphs">histogram (full)</text></g>
<rect x="911.0" y="517.0" width="274.0" height="119.70000000000005" fill="none" stroke="#000" stroke-width="1.6"/>
<path d="M911.80,624.80 L950.10,624.80 L950.85,623.80 L951.35,623.80 L952.10,624.80 L969.70,624.80 L970.55,620.50 L971.05,620.50 L971.90,624.80 L988.30,624.80 L989.15,617.90 L989.65,617.90 L990.50,624.80 L1006.00,624.80 L1006.85,615.30 L1007.35,615.30 L1008.20,624.80 L1022.90,624.80 L1023.75,613.40 L1024.25,613.40 L1025.10,624.80 L1038.90,624.80 L1039.75,612.30 L1040.25,612.30 L1041.10,624.80 L1054.00,624.80 L1054.85,611.40 L1055.35,611.40 L1056.20,624.80 L1068.40,624.80 L1069.25,609.50 L1069.75,609.50 L1070.60,624.80 L1081.90,624.80 L1082.75,609.50 L1083.25,609.50 L1084.10,624.80 L1094.90,624.80 L1095.75,610.20 L1096.25,610.20 L1097.10,624.80 L1107.20,624.80 L1108.05,610.70 L1108.55,610.70 L1109.40,624.80 L1118.80,624.80 L1119.65,611.90 L1120.15,611.90 L1121.00,624.80 L1130.10,624.80 L1130.95,615.30 L1131.45,615.30 L1132.30,624.80 L1140.90,624.80 L1141.75,620.30 L1142.25,620.30 L1143.10,624.80 L1151.00,624.80 L1151.75,623.50 L1152.25,623.50 L1153.00,624.80 L1185.00,624.80" fill="none" stroke="#0000ff" stroke-width="1.5" stroke-linejoin="round"/>
<line x1="904.20" y1="626.90" x2="911.00" y2="626.90" stroke="#000" stroke-width="1.6"/>
<text x="889.02" y="631.30" font-size="10.6" textLength="6.22" lengthAdjust="spacingAndGlyphs">0</text>
<line x1="904.20" y1="592.10" x2="911.00" y2="592.10" stroke="#000" stroke-width="1.6"/>
<text x="864.14" y="596.50" font-size="10.6" textLength="31.10" lengthAdjust="spacingAndGlyphs">20000</text>
<line x1="904.20" y1="557.30" x2="911.00" y2="557.30" stroke="#000" stroke-width="1.6"/>
<text x="864.14" y="561.70" font-size="10.6" textLength="31.10" lengthAdjust="spacingAndGlyphs">40000</text>
<line x1="904.20" y1="522.50" x2="911.00" y2="522.50" stroke="#000" stroke-width="1.6"/>
<text x="864.14" y="526.90" font-size="10.6" textLength="31.10" lengthAdjust="spacingAndGlyphs">60000</text>
<line x1="911.70" y1="636.70" x2="911.70" y2="643.50" stroke="#000" stroke-width="1.6"/>
<text x="908.59" y="660.00" font-size="10.6" textLength="6.22" lengthAdjust="spacingAndGlyphs">0</text>
<line x1="976.30" y1="636.70" x2="976.30" y2="643.50" stroke="#000" stroke-width="1.6"/>
<text x="966.97" y="660.00" font-size="10.6" textLength="18.66" lengthAdjust="spacingAndGlyphs">500</text>
<line x1="1040.90" y1="636.70" x2="1040.90" y2="643.50" stroke="#000" stroke-width="1.6"/>
<text x="1028.25" y="660.00" font-size="10.6" textLength="24.88" lengthAdjust="spacingAndGlyphs">1000</text>
<line x1="1105.50" y1="636.70" x2="1105.50" y2="643.50" stroke="#000" stroke-width="1.6"/>
<text x="1092.85" y="660.00" font-size="10.6" textLength="24.88" lengthAdjust="spacingAndGlyphs">1500</text>
<line x1="1170.10" y1="636.70" x2="1170.10" y2="643.50" stroke="#000" stroke-width="1.6"/>
<text x="1157.60" y="660.00" font-size="10.6" textLength="24.88" lengthAdjust="spacingAndGlyphs">2000</text>
<text x="1043.96" y="677.80" font-size="10.6" textLength="7.46" lengthAdjust="spacingAndGlyphs">X</text>
<g transform="translate(852.50,577.70) rotate(-90)"><text x="-16.83" y="0" font-size="10.6" textLength="33.60" lengthAdjust="spacingAndGlyphs">counts</text></g>
<g transform="translate(1194.00,575.50) rotate(90)"><text x="-19.42" y="0" font-size="10.6" textLength="38.45" lengthAdjust="spacingAndGlyphs">cut in x</text></g>
<rect x="1108.8" y="520.0" width="73.0" height="15.9" rx="2" fill="#fff" fill-opacity="0.8" stroke="#d0d0d0" stroke-width="1"/>
<line x1="1111.20" y1="527.80" x2="1134.00" y2="527.80" stroke="#0000ff" stroke-width="1.5"/>
<text x="1138.27" y="530.70" font-size="10.6" textLength="39.60" lengthAdjust="spacingAndGlyphs">y=2000</text>
<rect x="911.0" y="688.5" width="274.0" height="120.10000000000002" fill="none" stroke="#000" stroke-width="1.6"/>
<path d="M911.80,797.00 L912.05,797.00 L912.30,797.00 L912.55,797.00 L912.80,797.00 L913.05,797.00 L913.30,797.00 L913.55,797.00 L913.80,797.00 L914.05,797.00 L914.30,797.00 L914.55,797.00 L914.80,797.00 L915.05,797.00 L915.30,797.00 L915.55,797.00 L915.80,797.00 L916.05,797.00 L916.30,797.00 L916.55,797.00 L916.80,797.00 L917.05,797.00 L917.30,797.00 L917.55,797.00 L917.80,797.00 L918.05,797.00 L918.30,797.00 L918.55,797.00 L918.80,797.00 L919.05,797.00 L919.30,797.00 L919.55,797.00 L919.80,797.00 L920.05,797.00 L920.30,797.00 L920.55,797.00 L920.80,797.00 L921.05,797.00 L921.30,797.00 L921.55,797.00 L921.80,797.00 L922.05,797.00 L922.30,797.00 L922.55,797.00 L922.80,797.00 L923.05,797.00 L923.30,797.00 L923.55,797.00 L923.80,797.00 L924.05,797.00 L924.30,797.00 L924.55,797.00 L924.80,797.00 L925.05,797.00 L925.30,797.00 L925.55,797.00 L925.80,797.00 L926.05,797.00 L926.30,797.00 L926.55,797.00 L926.80,797.00 L927.05,797.00 L927.30,797.00 L927.55,797.00 L927.80,797.00 L928.05,797.00 L928.30,797.00 L928.55,797.00 L928.80,797.00 L929.05,797.00 L929.30,797.00 L929.55,797.00 L929.80,797.00 L930.05,797.00 L930.30,797.00 L930.55,797.00 L930.80,797.00 L931.05,797.00 L931.30,797.00 L931.55,797.00 L931.80,797.00 L932.05,797.00 L932.30,797.00 L932.55,797.00 L932.80,797.00 L933.05,797.00 L933.30,797.00 L933.55,797.00 L933.80,797.00 L934.05,797.00 L934.30,797.00 L934.55,797.00 L934.80,797.00 L935.05,797.00 L935.30,797.00 L935.55,797.00 L935.80,797.00 L936.05,797.00 L936.30,797.00 L936.55,797.00 L936.80,797.00 L937.05,797.00 L937.30,797.00 L937.55,797.00 L937.80,797.00 L938.05,797.00 L938.30,797.00 L938.55,797.00 L938.80,797.00 L939.05,797.00 L939.30,797.00 L939.55,797.00 L939.80,797.00 L940.05,797.00 L940.30,797.00 L940.55,796.99 L940.80,796.99 L941.05,796.99 L941.30,796.99 L941.55,796.99 L941.80,796.98 L942.05,796.98 L942.30,796.97 L942.55,796.96 L942.80,796.95 L943.05,796.94 L943.30,796.93 L943.55,796.91 L943.80,796.89 L944.05,796.86 L944.30,796.83 L944.55,796.79 L944.80,796.75 L945.05,796.69 L945.30,796.63 L945.55,796.56 L945.80,796.48 L946.05,796.39 L946.30,796.29 L946.55,796.18 L946.80,796.06 L947.05,795.93 L947.30,795.80 L947.55,795.67 L947.80,795.54 L948.05,795.44 L948.30,795.42 L948.55,795.52 L948.80,795.64 L949.05,795.77 L949.30,795.90 L949.55,796.03 L949.80,796.16 L950.05,796.27 L950.30,796.37 L950.55,796.47 L950.80,796.55 L951.05,796.62 L951.30,796.68 L951.55,796.74 L951.80,796.78 L952.05,796.82 L952.30,796.85 L952.55,796.88 L952.80,796.90 L953.05,796.92 L953.30,796.94 L953.55,796.95 L953.80,796.96 L954.05,796.97 L954.30,796.98 L954.55,796.98 L954.80,796.98 L955.05,796.99 L955.30,796.99 L955.55,796.99 L955.80,796.99 L956.05,797.00 L956.30,797.00 L956.55,797.00 L956.80,797.00 L957.05,797.00 L957.30,797.00 L957.55,797.00 L957.80,797.00 L958.05,797.00 L958.30,797.00 L958.55,797.00 L958.80,797.00 L959.05,797.00 L959.30,797.00 L959.55,797.00 L959.80,797.00 L960.05,797.00 L960.30,797.00 L960.55,797.00 L960.80,797.00 L961.05,797.00 L961.30,797.00 L961.55,797.00 L961.80,797.00 L962.05,797.00 L962.30,797.00 L962.55,797.00 L962.80,797.00 L963.05,797.00 L963.30,797.00 L963.55,797.00 L963.80,797.00 L964.05,797.00 L964.30,797.00 L964.55,797.00 L964.80,797.00 L965.05,797.00 L965.30,797.00 L965.55,797.00 L965.80,797.00 L966.05,797.00 L966.30,797.00 L966.55,797.00 L966.80,797.00 L967.05,797.00 L967.30,797.00 L967.55,797.00 L967.80,797.00 L968.05,797.00 L968.30,797.00 L968.55,797.00 L968.80,797.00 L969.05,797.00 L969.30,797.00 L969.55,797.00 L969.80,797.00 L970.05,797.00 L970.30,797.00 L970.55,797.00 L970.80,797.00 L971.05,797.00 L971.30,797.00 L971.55,797.00 L971.80,797.00 L972.05,797.00 L972.30,797.00 L972.55,797.00 L972.80,797.00 L973.05,797.00 L973.30,797.00 L973.55,797.00 L973.80,797.00 L974.05,797.00 L974.30,797.00 L974.55,797.00 L974.80,797.00 L975.05,797.00 L975.30,797.00 L975.55,797.00 L975.80,797.00 L976.05,797.00 L976.30,797.00 L976.55,797.00 L976.80,797.00 L977.05,797.00 L977.30,797.00 L977.55,797.00 L977.80,797.00 L978.05,797.00 L978.30,797.00 L978.55,797.00 L978.80,797.00 L979.05,797.00 L979.30,797.00 L979.55,797.00 L979.80,797.00 L980.05,797.00 L980.30,797.00 L980.55,797.00 L980.80,797.00 L981.05,797.00 L981.30,797.00 L981.55,797.00 L981.80,797.00 L982.05,797.00 L982.30,797.00 L982.55,797.00 L982.80,797.00 L983.05,797.00 L983.30,797.00 L983.55,797.00 L983.80,797.00 L984.05,797.00 L984.30,797.00 L984.55,797.00 L984.80,797.00 L985.05,797.00 L985.30,797.00 L985.55,797.00 L985.80,797.00 L986.05,797.00 L986.30,797.00 L986.55,797.00 L986.80,797.00 L987.05,796.99 L987.30,796.99 L987.55,796.99 L987.80,796.99 L988.05,796.99 L988.30,796.98 L988.55,796.98 L988.80,796.98 L989.05,796.97 L989.30,796.96 L989.55,796.96 L989.80,796.95 L990.05,796.94 L990.30,796.93 L990.55,796.91 L990.80,796.89 L991.05,796.87 L991.30,796.85 L991.55,796.82 L991.80,796.79 L992.05,796.75 L992.30,796.71 L992.55,796.66 L992.80,796.60 L993.05,796.53 L993.30,796.45 L993.55,796.36 L993.80,796.26 L994.05,796.15 L994.30,796.01 L994.55,795.86 L994.80,795.70 L995.05,795.51 L995.30,795.30 L995.55,795.07 L995.80,794.81 L996.05,794.53 L996.30,794.23 L996.55,793.89 L996.80,793.54 L997.05,793.15 L997.30,792.75 L997.55,792.33 L997.80,791.90 L998.05,791.46 L998.30,791.02 L998.55,790.60 L998.80,790.22 L999.05,789.91 L999.30,789.86 L999.55,790.15 L999.80,790.52 L1000.05,790.93 L1000.30,791.37 L1000.55,791.81 L1000.80,792.24 L1001.05,792.67 L1001.30,793.08 L1001.55,793.46 L1001.80,793.82 L1002.05,794.16 L1002.30,794.47 L1002.55,794.76 L1002.80,795.02 L1003.05,795.26 L1003.30,795.47 L1003.55,795.66 L1003.80,795.83 L1004.05,795.98 L1004.30,796.12 L1004.55,796.24 L1004.80,796.34 L1005.05,796.44 L1005.30,796.52 L1005.55,796.59 L1005.80,796.65 L1006.05,796.70 L1006.30,796.74 L1006.55,796.78 L1006.80,796.82 L1007.05,796.85 L1007.30,796.87 L1007.55,796.89 L1007.80,796.91 L1008.05,796.92 L1008.30,796.94 L1008.55,796.95 L1008.80,796.96 L1009.05,796.96 L1009.30,796.97 L1009.55,796.97 L1009.80,796.98 L1010.05,796.98 L1010.30,796.99 L1010.55,796.99 L1010.80,796.99 L1011.05,796.99 L1011.30,796.99 L1011.55,796.99 L1011.80,797.00 L1012.05,797.00 L1012.30,797.00 L1012.55,797.00 L1012.80,797.00 L1013.05,797.00 L1013.30,797.00 L1013.55,797.00 L1013.80,797.00 L1014.05,797.00 L1014.30,797.00 L1014.55,797.00 L1014.80,797.00 L1015.05,797.00 L1015.30,797.00 L1015.55,797.00 L1015.80,797.00 L1016.05,797.00 L1016.30,797.00 L1016.55,797.00 L1016.80,797.00 L1017.05,797.00 L1017.30,797.00 L1017.55,797.00 L1017.80,797.00 L1018.05,797.00 L1018.30,797.00 L1018.55,797.00 L1018.80,797.00 L1019.05,797.00 L1019.30,797.00 L1019.55,797.00 L1019.80,797.00 L1020.05,797.00 L1020.30,797.00 L1020.55,797.00 L1020.80,797.00 L1021.05,797.00 L1021.30,797.00 L1021.55,797.00 L1021.80,797.00 L1022.05,797.00 L1022.30,797.00 L1022.55,797.00 L1022.80,797.00 L1023.05,797.00 L1023.30,797.00 L1023.55,797.00 L1023.80,797.00 L1024.05,797.00 L1024.30,797.00 L1024.55,797.00 L1024.80,797.00 L1025.05,797.00 L1025.30,797.00 L1025.55,797.00 L1025.80,797.00 L1026.05,797.00 L1026.30,797.00 L1026.55,797.00 L1026.80,797.00 L1027.05,797.00 L1027.30,797.00 L1027.55,797.00 L1027.80,797.00 L1028.05,797.00 L1028.30,797.00 L1028.55,797.00 L1028.80,797.00 L1029.05,797.00 L1029.30,797.00 L1029.55,797.00 L1029.80,797.00 L1030.05,797.00 L1030.30,797.00 L1030.55,797.00 L1030.80,797.00 L1031.05,797.00 L1031.30,797.00 L1031.55,797.00 L1031.80,797.00 L1032.05,797.00 L1032.30,797.00 L1032.55,797.00 L1032.80,797.00 L1033.05,797.00 L1033.30,797.00 L1033.55,797.00 L1033.80,797.00 L1034.05,797.00 L1034.30,797.00 L1034.55,797.00 L1034.80,797.00 L1035.05,797.00 L1035.30,797.00 L1035.55,797.00 L1035.80,797.00 L1036.05,797.00 L1036.30,797.00 L1036.55,797.00 L1036.80,797.00 L1037.05,797.00 L1037.30,797.00 L1037.55,797.00 L1037.80,797.00 L1038.05,797.00 L1038.30,797.00 L1038.55,797.00 L1038.80,797.00 L1039.05,797.00 L1039.30,797.00 L1039.55,797.00 L1039.80,797.00 L1040.05,797.00 L1040.30,797.00 L1040.55,797.00 L1040.80,797.00 L1041.05,797.00 L1041.30,797.00 L1041.55,797.00 L1041.80,797.00 L1042.05,797.00 L1042.30,797.00 L1042.55,797.00 L1042.80,797.00 L1043.05,797.00 L1043.30,797.00 L1043.55,797.00 L1043.80,797.00 L1044.05,797.00 L1044.30,797.00 L1044.55,797.00 L1044.80,797.00 L1045.05,797.00 L1045.30,797.00 L1045.55,797.00 L1045.80,797.00 L1046.05,797.00 L1046.30,797.00 L1046.55,797.00 L1046.80,797.00 L1047.05,797.00 L1047.30,797.00 L1047.55,797.00 L1047.80,797.00 L1048.05,797.00 L1048.30,797.00 L1048.55,797.00 L1048.80,797.00 L1049.05,797.00 L1049.30,797.00 L1049.55,797.00 L1049.80,797.00 L1050.05,797.00 L1050.30,797.00 L1050.55,797.00 L1050.80,797.00 L1051.05,797.00 L1051.30,797.00 L1051.55,797.00 L1051.80,797.00 L1052.05,797.00 L1052.30,797.00 L1052.55,797.00 L1052.80,797.00 L1053.05,797.00 L1053.30,797.00 L1053.55,797.00 L1053.80,797.00 L1054.05,797.00 L1054.30,797.00 L1054.55,797.00 L1054.80,797.00 L1055.05,797.00 L1055.30,797.00 L1055.55,797.00 L1055.80,797.00 L1056.05,797.00 L1056.30,797.00 L1056.55,797.00 L1056.80,797.00 L1057.05,797.00 L1057.30,797.00 L1057.55,797.00 L1057.80,797.00 L1058.05,797.00 L1058.30,797.00 L1058.55,797.00 L1058.80,797.00 L1059.05,797.00 L1059.30,797.00 L1059.55,797.00 L1059.80,797.00 L1060.05,797.00 L1060.30,797.00 L1060.55,797.00 L1060.80,797.00 L1061.05,797.00 L1061.30,797.00 L1061.55,797.00 L1061.80,797.00 L1062.05,797.00 L1062.30,797.00 L1062.55,797.00 L1062.80,797.00 L1063.05,797.00 L1063.30,797.00 L1063.55,797.00 L1063.80,797.00 L1064.05,797.00 L1064.30,797.00 L1064.55,797.00 L1064.80,797.00 L1065.05,797.00 L1065.30,797.00 L1065.55,797.00 L1065.80,797.00 L1066.05,797.00 L1066.30,797.00 L1066.55,797.00 L1066.80,797.00 L1067.05,797.00 L1067.30,797.00 L1067.55,797.00 L1067.80,797.00 L1068.05,797.00 L1068.30,797.00 L1068.55,797.00 L1068.80,797.00 L1069.05,797.00 L1069.30,797.00 L1069.55,797.00 L1069.80,797.00 L1070.05,797.00 L1070.30,797.00 L1070.55,797.00 L1070.80,797.00 L1071.05,797.00 L1071.30,797.00 L1071.55,797.00 L1071.80,797.00 L1072.05,797.00 L1072.30,797.00 L1072.55,797.00 L1072.80,797.00 L1073.05,797.00 L1073.30,797.00 L1073.55,797.00 L1073.80,797.00 L1074.05,797.00 L1074.30,797.00 L1074.55,797.00 L1074.80,797.00 L1075.05,797.00 L1075.30,797.00 L1075.55,797.00 L1075.80,797.00 L1076.05,797.00 L1076.30,797.00 L1076.55,797.00 L1076.80,797.00 L1077.05,797.00 L1077.30,797.00 L1077.55,797.00 L1077.80,797.00 L1078.05,797.00 L1078.30,797.00 L1078.55,797.00 L1078.80,797.00 L1079.05,797.00 L1079.30,797.00 L1079.55,797.00 L1079.80,797.00 L1080.05,797.00 L1080.30,797.00 L1080.55,797.00 L1080.80,797.00 L1081.05,797.00 L1081.30,797.00 L1081.55,797.00 L1081.80,797.00 L1082.05,797.00 L1082.30,797.00 L1082.55,797.00 L1082.80,797.00 L1083.05,797.00 L1083.30,797.00 L1083.55,797.00 L1083.80,797.00 L1084.05,797.00 L1084.30,797.00 L1084.55,797.00 L1084.80,797.00 L1085.05,797.00 L1085.30,797.00 L1085.55,797.00 L1085.80,797.00 L1086.05,797.00 L1086.30,797.00 L1086.55,797.00 L1086.80,797.00 L1087.05,797.00 L1087.30,797.00 L1087.55,797.00 L1087.80,797.00 L1088.05,797.00 L1088.30,797.00 L1088.55,797.00 L1088.80,797.00 L1089.05,797.00 L1089.30,797.00 L1089.55,797.00 L1089.80,797.00 L1090.05,797.00 L1090.30,797.00 L1090.55,797.00 L1090.80,797.00 L1091.05,797.00 L1091.30,797.00 L1091.55,797.00 L1091.80,797.00 L1092.05,797.00 L1092.30,797.00 L1092.55,797.00 L1092.80,797.00 L1093.05,797.00 L1093.30,797.00 L1093.55,797.00 L1093.80,797.00 L1094.05,797.00 L1094.30,797.00 L1094.55,797.00 L1094.80,797.00 L1095.05,797.00 L1095.30,797.00 L1095.55,797.00 L1095.80,797.00 L1096.05,797.00 L1096.30,797.00 L1096.55,797.00 L1096.80,797.00 L1097.05,797.00 L1097.30,797.00 L1097.55,797.00 L1097.80,797.00 L1098.05,797.00 L1098.30,797.00 L1098.55,797.00 L1098.80,797.00 L1099.05,797.00 L1099.30,797.00 L1099.55,797.00 L1099.80,797.00 L1100.05,797.00 L1100.30,797.00 L1100.55,797.00 L1100.80,797.00 L1101.05,797.00 L1101.30,797.00 L1101.55,797.00 L1101.80,797.00 L1102.05,797.00 L1102.30,797.00 L1102.55,797.00 L1102.80,797.00 L1103.05,797.00 L1103.30,797.00 L1103.55,797.00 L1103.80,797.00 L1104.05,797.00 L1104.30,797.00 L1104.55,797.00 L1104.80,797.00 L1105.05,797.00 L1105.30,797.00 L1105.55,797.00 L1105.80,797.00 L1106.05,797.00 L1106.30,797.00 L1106.55,797.00 L1106.80,797.00 L1107.05,797.00 L1107.30,797.00 L1107.55,797.00 L1107.80,797.00 L1108.05,797.00 L1108.30,797.00 L1108.55,797.00 L1108.80,797.00 L1109.05,797.00 L1109.30,797.00 L1109.55,797.00 L1109.80,797.00 L1110.05,797.00 L1110.30,797.00 L1110.55,797.00 L1110.80,797.00 L1111.05,797.00 L1111.30,797.00 L1111.55,797.00 L1111.80,797.00 L1112.05,797.00 L1112.30,797.00 L1112.55,797.00 L1112.80,797.00 L1113.05,797.00 L1113.30,797.00 L1113.55,797.00 L1113.80,797.00 L1114.05,797.00 L1114.30,797.00 L1114.55,797.00 L1114.80,797.00 L1115.05,797.00 L1115.30,797.00 L1115.55,797.00 L1115.80,797.00 L1116.05,797.00 L1116.30,797.00 L1116.55,797.00 L1116.80,797.00 L1117.05,797.00 L1117.30,797.00 L1117.55,797.00 L1117.80,797.00 L1118.05,797.00 L1118.30,797.00 L1118.55,797.00 L1118.80,797.00 L1119.05,797.00 L1119.30,797.00 L1119.55,797.00 L1119.80,797.00 L1120.05,797.00 L1120.30,797.00 L1120.55,797.00 L1120.80,797.00 L1121.05,797.00 L1121.30,797.00 L1121.55,797.00 L1121.80,797.00 L1122.05,797.00 L1122.30,797.00 L1122.55,797.00 L1122.80,797.00 L1123.05,797.00 L1123.30,797.00 L1123.55,797.00 L1123.80,797.00 L1124.05,797.00 L1124.30,797.00 L1124.55,797.00 L1124.80,797.00 L1125.05,797.00 L1125.30,797.00 L1125.55,797.00 L1125.80,797.00 L1126.05,797.00 L1126.30,797.00 L1126.55,797.00 L1126.80,797.00 L1127.05,797.00 L1127.30,797.00 L1127.55,797.00 L1127.80,797.00 L1128.05,797.00 L1128.30,797.00 L1128.55,797.00 L1128.80,797.00 L1129.05,797.00 L1129.30,797.00 L1129.55,797.00 L1129.80,797.00 L1130.05,797.00 L1130.30,797.00 L1130.55,797.00 L1130.80,797.00 L1131.05,797.00 L1131.30,797.00 L1131.55,797.00 L1131.80,797.00 L1132.05,797.00 L1132.30,797.00 L1132.55,797.00 L1132.80,797.00 L1133.05,797.00 L1133.30,797.00 L1133.55,797.00 L1133.80,797.00 L1134.05,797.00 L1134.30,797.00 L1134.55,797.00 L1134.80,797.00 L1135.05,797.00 L1135.30,797.00 L1135.55,797.00 L1135.80,797.00 L1136.05,797.00 L1136.30,797.00 L1136.55,797.00 L1136.80,797.00 L1137.05,797.00 L1137.30,797.00 L1137.55,797.00 L1137.80,797.00 L1138.05,797.00 L1138.30,797.00 L1138.55,797.00 L1138.80,797.00 L1139.05,797.00 L1139.30,797.00 L1139.55,797.00 L1139.80,797.00 L1140.05,797.00 L1140.30,797.00 L1140.55,797.00 L1140.80,797.00 L1141.05,797.00 L1141.30,797.00 L1141.55,797.00 L1141.80,797.00 L1142.05,797.00 L1142.30,797.00 L1142.55,797.00 L1142.80,797.00 L1143.05,797.00 L1143.30,797.00 L1143.55,797.00 L1143.80,797.00 L1144.05,797.00 L1144.30,797.00 L1144.55,797.00 L1144.80,797.00 L1145.05,797.00 L1145.30,796.99 L1145.55,796.99 L1145.80,796.99 L1146.05,796.99 L1146.30,796.99 L1146.55,796.98 L1146.80,796.98 L1147.05,796.98 L1147.30,796.97 L1147.55,796.97 L1147.80,796.96 L1148.05,796.95 L1148.30,796.94 L1148.55,796.93 L1148.80,796.91 L1149.05,796.90 L1149.30,796.88 L1149.55,796.85 L1149.80,796.82 L1150.05,796.79 L1150.30,796.75 L1150.55,796.71 L1150.80,796.66 L1151.05,796.60 L1151.30,796.53 L1151.55,796.45 L1151.80,796.37 L1152.05,796.26 L1152.30,796.15 L1152.55,796.01 L1152.80,795.87 L1153.05,795.70 L1153.30,795.51 L1153.55,795.30 L1153.80,795.06 L1154.05,794.81 L1154.30,794.52 L1154.55,794.21 L1154.80,793.88 L1155.05,793.52 L1155.30,793.13 L1155.55,792.72 L1155.80,792.29 L1156.05,791.84 L1156.30,791.39 L1156.55,790.94 L1156.80,790.50 L1157.05,790.10 L1157.30,789.77 L1157.55,789.62 L1157.80,789.89 L1158.05,790.26 L1158.30,790.68 L1158.55,791.12 L1158.80,791.57 L1159.05,792.02 L1159.30,792.46 L1159.55,792.88 L1159.80,793.29 L1160.05,793.66 L1160.30,794.02 L1160.55,794.34 L1160.80,794.64 L1161.05,794.91 L1161.30,795.16 L1161.55,795.39 L1161.80,795.59 L1162.05,795.77 L1162.30,795.93 L1162.55,796.07 L1162.80,796.19 L1163.05,796.31 L1163.30,796.40 L1163.55,796.49 L1163.80,796.56 L1164.05,796.63 L1164.30,796.68 L1164.55,796.73 L1164.80,796.77 L1165.05,796.81 L1165.30,796.84 L1165.55,796.86 L1165.80,796.88 L1166.05,796.90 L1166.30,796.92 L1166.55,796.93 L1166.80,796.94 L1167.05,796.95 L1167.30,796.96 L1167.55,796.97 L1167.80,796.97 L1168.05,796.98 L1168.30,796.98 L1168.55,796.99 L1168.80,796.99 L1169.05,796.99 L1169.30,796.99 L1169.55,796.99 L1169.80,796.99 L1170.05,797.00 L1170.30,797.00 L1170.55,797.00 L1170.80,797.00 L1171.05,797.00 L1171.30,797.00 L1171.55,797.00 L1171.80,797.00 L1172.05,797.00 L1172.30,797.00 L1172.55,797.00 L1172.80,797.00 L1173.05,797.00 L1173.30,797.00 L1173.55,797.00 L1173.80,797.00 L1174.05,797.00 L1174.30,797.00 L1174.55,797.00 L1174.80,797.00 L1175.05,797.00 L1175.30,797.00 L1175.55,797.00 L1175.80,797.00 L1176.05,797.00 L1176.30,797.00 L1176.55,797.00 L1176.80,797.00 L1177.05,797.00 L1177.30,797.00 L1177.55,797.00 L1177.80,797.00 L1178.05,797.00 L1178.30,797.00 L1178.55,797.00 L1178.80,797.00 L1179.05,797.00 L1179.30,797.00 L1179.55,797.00 L1179.80,797.00 L1180.05,797.00 L1180.30,797.00 L1180.55,797.00 L1180.80,797.00 L1181.05,797.00 L1181.30,797.00 L1181.55,797.00 L1181.80,797.00 L1182.05,797.00 L1182.30,797.00 L1182.55,797.00 L1182.80,797.00 L1183.05,797.00 L1183.30,797.00 L1183.55,797.00 L1183.80,797.00 L1184.05,797.00 L1184.30,797.00 L1184.55,797.00 L1184.80,797.00" fill="none" stroke="#0000ff" stroke-width="1.5"/>
<line x1="904.20" y1="798.60" x2="911.00" y2="798.60" stroke="#000" stroke-width="1.6"/>
<text x="889.02" y="803.00" font-size="10.6" textLength="6.22" lengthAdjust="spacingAndGlyphs">0</text>
<line x1="904.20" y1="763.80" x2="911.00" y2="763.80" stroke="#000" stroke-width="1.6"/>
<text x="864.14" y="768.20" font-size="10.6" textLength="31.10" lengthAdjust="spacingAndGlyphs">20000</text>
<line x1="904.20" y1="729.00" x2="911.00" y2="729.00" stroke="#000" stroke-width="1.6"/>
<text x="864.14" y="733.40" font-size="10.6" textLength="31.10" lengthAdjust="spacingAndGlyphs">40000</text>
<line x1="904.20" y1="694.20" x2="911.00" y2="694.20" stroke="#000" stroke-width="1.6"/>
<text x="864.14" y="698.60" font-size="10.6" textLength="31.10" lengthAdjust="spacingAndGlyphs">60000</text>
<line x1="910.90" y1="808.60" x2="910.90" y2="815.40" stroke="#000" stroke-width="1.6"/>
<text x="907.79" y="831.80" font-size="10.6" textLength="6.22" lengthAdjust="spacingAndGlyphs">0</text>
<line x1="979.30" y1="808.60" x2="979.30" y2="815.40" stroke="#000" stroke-width="1.6"/>
<text x="966.65" y="831.80" font-size="10.6" textLength="24.88" lengthAdjust="spacingAndGlyphs">1000</text>
<line x1="1047.70" y1="808.60" x2="1047.70" y2="815.40" stroke="#000" stroke-width="1.6"/>
<text x="1035.20" y="831.80" font-size="10.6" textLength="24.88" lengthAdjust="spacingAndGlyphs">2000</text>
<line x1="1116.10" y1="808.60" x2="1116.10" y2="815.40" stroke="#000" stroke-width="1.6"/>
<text x="1103.67" y="831.80" font-size="10.6" textLength="24.88" lengthAdjust="spacingAndGlyphs">3000</text>
<line x1="1184.50" y1="808.60" x2="1184.50" y2="815.40" stroke="#000" stroke-width="1.6"/>
<text x="1172.15" y="831.80" font-size="10.6" textLength="24.88" lengthAdjust="spacingAndGlyphs">4000</text>
<text x="1045.37" y="849.60" font-size="10.6" textLength="7.46" lengthAdjust="spacingAndGlyphs">Y</text>
<g transform="translate(852.50,750.20) rotate(-90)"><text x="-16.83" y="0" font-size="10.6" textLength="33.60" lengthAdjust="spacingAndGlyphs">counts</text></g>
<g transform="translate(1193.60,749.00) rotate(90)"><text x="-19.98" y="0" font-size="10.6" textLength="39.45" lengthAdjust="spacingAndGlyphs">cut in y</text></g>
<rect x="1108.5" y="691.6" width="73.5" height="16.5" rx="2" fill="#fff" fill-opacity="0.8" stroke="#d0d0d0" stroke-width="1"/>
<line x1="1111.40" y1="699.60" x2="1133.80" y2="699.60" stroke="#0000ff" stroke-width="1.5"/>
<text x="1137.26" y="702.60" font-size="10.6" textLength="40.17" lengthAdjust="spacingAndGlyphs">x=1053</text>
</svg></body></html>
